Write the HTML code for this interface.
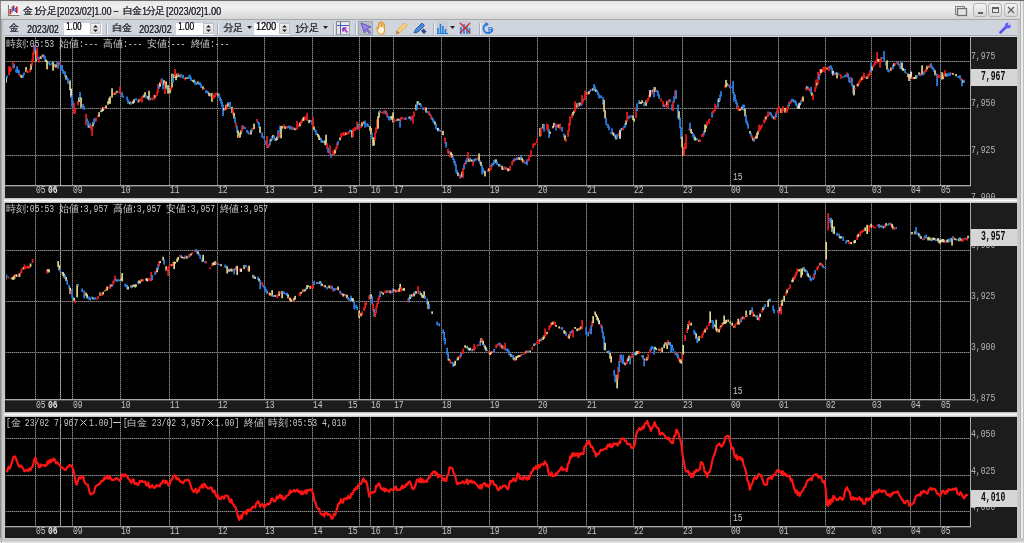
<!DOCTYPE html><html><head><meta charset="utf-8"><style>
*{margin:0;padding:0;box-sizing:border-box}
html,body{width:1024px;height:543px;overflow:hidden;background:#c8c8c8;font-family:"Liberation Sans",sans-serif}
div,span,svg{position:absolute}
.mo{font-family:"Liberation Mono",monospace;font-size:11.2px;line-height:11.2px;white-space:pre;transform:scaleX(0.7232);transform-origin:0 0}
.cj{font-family:"Liberation Sans",sans-serif;font-size:9.6px;line-height:9.6px;white-space:pre}
.ss{font-family:"Liberation Sans",sans-serif;line-height:1;white-space:pre;transform-origin:0 0;text-shadow:0.35px 0 0 currentColor}
.cs{font-family:"Liberation Sans",sans-serif;line-height:1;white-space:pre;text-shadow:0.3px 0 0 currentColor}

#frame{left:0;top:0;width:1024px;height:543px;background:#c8c8c8;border-top:1px solid #6c6c6c;border-left:1px solid #8c8c8c}
#title{left:1px;top:1px;width:1019px;height:19px;background:linear-gradient(#e6e6e6 0px,#f0f0f0 6px,#d6d6d6 18px);border-bottom:1px solid #a8a8a8}
#tb{left:4px;top:20px;width:1013px;height:17px;background:linear-gradient(#d0d5dd 15px,#a8b0bc 15px,#a8b0bc 16px,#d4d8e0 16px)}
.inp{height:13px;background:#fff;border-top:1px solid #c8ccd4}
.spin{top:1px;width:11px;height:11px;background:linear-gradient(#f0f0f0,#dcdcdc);border:1px solid #c0c0c0}
.sep{top:23px;width:1px;height:12px;background:#a8aeb8;box-shadow:1px 0 0 #f0f2f6}
.panel{left:5px;width:1012px;background:#1c1c1c}
.chart{left:1px;top:0;width:965px;background:#000;border-right:1px solid #a8a8a8;border-bottom:1px solid #a8a8a8}
.sepbar{left:4px;width:1013px;background:linear-gradient(#b8b8b8,#fafafa 50%,#b8b8b8)}
.cur{left:971px;width:46px;height:17px;background:#d6d6d6}
.wbtn{top:3px;width:14px;height:14px;border:1px solid #b4b4b4;border-radius:3px;background:linear-gradient(#f4f4f4,#d8d8d8)}
</style></head><body>
<div id="wrap" style="left:0;top:0;width:1024px;height:543px;filter:blur(0.4px)">
<div id="frame"></div>
<div style="left:1020px;top:1px;width:1px;height:542px;background:#b0b0b0"></div>
<div style="left:1021px;top:1px;width:2px;height:542px;background:#ececec"></div>
<div style="left:1023px;top:1px;width:1px;height:542px;background:#bcbcbc"></div>
<div style="left:0;top:538px;width:1024px;height:5px;background:linear-gradient(#c8c8c8,#c8c8c8 3px,#f0f0f0)"></div>
<div style="left:1px;top:20px;width:1px;height:523px;background:#a8a8a8"></div>
<div id="title"></div>
<div id="tb"></div>

<svg style="left:7px;top:4px" width="14" height="13" viewBox="0 0 14 13"><rect x="2" y="0.5" width="11" height="10.5" fill="#f2f2f2"/><path d="M1.5 1v10.5h11" fill="none" stroke="#7a7a7a" stroke-width="1.1"/><path d="M3.3 5v5.5M6.6 1.5v5.5M9.8 2.5v6.5" stroke="#e81818" stroke-width="1.7"/><path d="M5.2 2.5v6M8.5 4v4" stroke="#2a78e0" stroke-width="1.5"/></svg>
<div class="inp" style="left:64px;top:22px;width:38px"></div>
<div class="inp" style="left:176px;top:22px;width:38px"></div>
<div class="inp" style="left:254px;top:22px;width:36px"></div>
<div class="spin" style="left:90px;top:23px"></div>
<svg style="left:90px;top:23px" width="11" height="11" viewBox="0 0 11 11"><path d="M3 4.5L5.5 2L8 4.5Z M3 6.5L5.5 9L8 6.5Z" fill="#222"/></svg>
<div class="spin" style="left:203px;top:23px"></div>
<svg style="left:203px;top:23px" width="11" height="11" viewBox="0 0 11 11"><path d="M3 4.5L5.5 2L8 4.5Z M3 6.5L5.5 9L8 6.5Z" fill="#222"/></svg>
<div class="spin" style="left:279px;top:23px"></div>
<svg style="left:279px;top:23px" width="11" height="11" viewBox="0 0 11 11"><path d="M3 4.5L5.5 2L8 4.5Z M3 6.5L5.5 9L8 6.5Z" fill="#222"/></svg>
<svg style="left:247px;top:26px" width="6" height="4" viewBox="0 0 6 4"><path d="M0 0H5L2.5 3Z" fill="#222"/></svg>
<svg style="left:323px;top:26px" width="6" height="4" viewBox="0 0 6 4"><path d="M0 0H5L2.5 3Z" fill="#222"/></svg>
<svg style="left:450px;top:26px" width="6" height="4" viewBox="0 0 6 4"><path d="M0 0H5L2.5 3Z" fill="#222"/></svg>
<div class="sep" style="left:106px"></div>
<div class="sep" style="left:217px"></div>
<div class="sep" style="left:333px"></div>
<div class="sep" style="left:355px"></div>
<div class="sep" style="left:433px"></div>
<div class="sep" style="left:479px"></div>
<div style="left:336px;top:21px;width:14px;height:14px;background:#e6e6e6;border:1px solid #a0a4aa;border-top-color:#8a8e94;border-left-color:#8a8e94"></div>
<svg style="left:337px;top:22px" width="12" height="12" viewBox="0 0 12 12"><path d="M3.5 0v12M0 3.5h12" stroke="#4a58c8" stroke-width="1"/><path d="M10.5 10.5L6.5 6.5M6 6h3.5M6 6v3.5" stroke="#a030c0" stroke-width="1.7" fill="none"/></svg>
<div style="left:358px;top:21px;width:15px;height:14px;background:#b8bcc4;border:1px solid #a0a6ae"></div>
<svg style="left:360px;top:22px" width="12" height="12" viewBox="0 0 12 12"><path d="M1 1L11 5L7 6.5L10.5 10.5L9.5 11.5L6 7.5L4.5 11Z" fill="#9a88e8" stroke="#6048c0" stroke-width="0.9"/></svg>
<svg style="left:376px;top:21px" width="13" height="14" viewBox="0 0 13 14"><path d="M3 13C1 10 0.5 8 1 6.5L2.5 7.5V3C2.5 2 4 2 4 3V6V1.5C4 0.5 5.5 0.5 5.5 1.5V6V2C5.5 1 7 1 7 2V6.5V3.5C7 2.5 8.5 2.5 8.5 3.5V9C8.5 11 8 12 7.5 13Z" fill="#fff4dc" stroke="#e09a30" stroke-width="1.1"/></svg>
<svg style="left:395px;top:21px" width="13" height="14" viewBox="0 0 13 14"><path d="M1 13L2 9.5L9.5 2L12 4.5L4.5 12Z" fill="#f8d088" stroke="#e0a040" stroke-width="0.9"/><path d="M1 13L2 9.5L4.5 12Z" fill="#a08060"/></svg>
<svg style="left:413px;top:21px" width="14" height="14" viewBox="0 0 14 14"><path d="M1 12L2.5 8.5L9 2L11.5 4.5L5 11Z" fill="#4a8ae0" stroke="#2050a0" stroke-width="0.9"/><path d="M8 10L11 13L13.5 10.5L10.5 7.5Z" fill="#2a4a90"/></svg>
<div style="left:437px;top:21px;width:11px;height:14px;background:#c8ccd2"></div>
<svg style="left:437px;top:22px" width="11" height="12" viewBox="0 0 11 12"><path d="M1 12V6M3.5 12V2M6 12V4M8.5 12V7" stroke="#2080e0" stroke-width="1.6"/><path d="M0 11.5H11" stroke="#2080e0"/></svg>
<div style="left:459px;top:21px;width:12px;height:14px;background:#c8ccd2"></div>
<svg style="left:459px;top:22px" width="12" height="12" viewBox="0 0 12 12"><path d="M2 12V5M5 12V2M8 12V4M10.5 12V6" stroke="#2080e0" stroke-width="1.6"/><path d="M1 1L11 11M11 1L1 11" stroke="#e82020" stroke-width="1.3"/></svg>
<svg style="left:482px;top:21px" width="12" height="14" viewBox="0 0 12 14"><path d="M6 3A4.5 4.5 0 1 0 10.5 8" fill="none" stroke="#2a7ae0" stroke-width="2"/><path d="M3 1L7 3L4 5.5Z" fill="#2a7ae0"/><text x="6" y="11" font-size="7" font-family="Liberation Sans" font-weight="bold" fill="#2a7ae0">R</text></svg>
<svg style="left:999px;top:22px" width="13" height="12" viewBox="0 0 13 12"><path d="M1.5 10.5L7 5" stroke="#5a50f0" stroke-width="2.6" stroke-linecap="round"/><circle cx="9" cy="3.5" r="3" fill="#6a60f8"/><circle cx="10.5" cy="2" r="1.4" fill="#d3d7df"/></svg>
<svg style="left:954px;top:5px" width="14" height="12" viewBox="0 0 14 12"><rect x="1.5" y="1.5" width="9" height="8" fill="none" stroke="#808080"/><rect x="3.5" y="3.5" width="9" height="7" fill="#e4e4e4" stroke="#707070" stroke-width="1.3"/></svg>
<div class="wbtn" style="left:973px"><div style="left:4px;top:8px;width:5px;height:2px;background:#606060"></div></div>
<div class="wbtn" style="left:988px"><div style="left:3px;top:3px;width:7px;height:6px;border:1px solid #606060;border-top-width:2px"></div></div>
<div class="wbtn" style="left:1004px"><svg style="left:0;top:0" width="12" height="12" viewBox="0 0 12 12"><path d="M3 3L9 9M9 3L3 9" stroke="#606060" stroke-width="1.3"/></svg></div>
<div style="left:5px;top:37px;width:1012px;height:161px;background:#1c1c1c"></div>
<div style="left:6px;top:37px;width:964px;height:148px;background:#000"></div>
<div style="left:5px;top:185px;width:966px;height:1px;background:#a8a8a8"></div>
<div style="left:5px;top:186px;width:966px;height:1px;background:#4a4a4a"></div>
<div style="left:970px;top:37px;width:1px;height:149px;background:#a8a8a8"></div>
<div style="left:5px;top:203px;width:1012px;height:209px;background:#1c1c1c"></div>
<div style="left:6px;top:203px;width:964px;height:196px;background:#000"></div>
<div style="left:5px;top:399px;width:966px;height:1px;background:#a8a8a8"></div>
<div style="left:5px;top:400px;width:966px;height:1px;background:#4a4a4a"></div>
<div style="left:970px;top:203px;width:1px;height:197px;background:#a8a8a8"></div>
<div style="left:5px;top:417px;width:1012px;height:121px;background:#1c1c1c"></div>
<div style="left:6px;top:417px;width:964px;height:109px;background:#000"></div>
<div style="left:5px;top:526px;width:966px;height:1px;background:#a8a8a8"></div>
<div style="left:5px;top:527px;width:966px;height:1px;background:#4a4a4a"></div>
<div style="left:970px;top:417px;width:1px;height:110px;background:#a8a8a8"></div>
<div class="sepbar" style="top:198px;height:5px"></div>
<div class="sepbar" style="top:412px;height:5px"></div>
<svg style="left:0;top:0" width="1024" height="543"><defs><clipPath id="k1"><rect x="6" y="37" width="964" height="148"/></clipPath><clipPath id="k2"><rect x="6" y="203" width="964" height="196"/></clipPath><clipPath id="k3"><rect x="6" y="417" width="964" height="109"/></clipPath></defs>
<g clip-path="url(#k1)"><line x1="35.5" y1="0" x2="35.5" y2="543" stroke="#444444"/>
<line x1="35.5" y1="0" x2="35.5" y2="543" stroke="#8a8a8a" stroke-dasharray="1,1"/>
<line x1="60.5" y1="0" x2="60.5" y2="543" stroke="#707070"/>
<line x1="60.5" y1="0" x2="60.5" y2="543" stroke="#b4b4b4" stroke-dasharray="1,1"/>
<line x1="72.5" y1="0" x2="72.5" y2="543" stroke="#444444"/>
<line x1="72.5" y1="0" x2="72.5" y2="543" stroke="#8a8a8a" stroke-dasharray="1,1"/>
<line x1="120.5" y1="0" x2="120.5" y2="543" stroke="#444444"/>
<line x1="120.5" y1="0" x2="120.5" y2="543" stroke="#8a8a8a" stroke-dasharray="1,1"/>
<line x1="169.5" y1="0" x2="169.5" y2="543" stroke="#444444"/>
<line x1="169.5" y1="0" x2="169.5" y2="543" stroke="#8a8a8a" stroke-dasharray="1,1"/>
<line x1="217.5" y1="0" x2="217.5" y2="543" stroke="#444444"/>
<line x1="217.5" y1="0" x2="217.5" y2="543" stroke="#8a8a8a" stroke-dasharray="1,1"/>
<line x1="264.5" y1="0" x2="264.5" y2="543" stroke="#444444"/>
<line x1="264.5" y1="0" x2="264.5" y2="543" stroke="#8a8a8a" stroke-dasharray="1,1"/>
<line x1="312.5" y1="0" x2="312.5" y2="543" stroke="#444444"/>
<line x1="312.5" y1="0" x2="312.5" y2="543" stroke="#8a8a8a" stroke-dasharray="1,1"/>
<line x1="359.5" y1="0" x2="359.5" y2="543" stroke="#444444"/>
<line x1="359.5" y1="0" x2="359.5" y2="543" stroke="#8a8a8a" stroke-dasharray="1,1"/>
<line x1="370.5" y1="0" x2="370.5" y2="543" stroke="#444444"/>
<line x1="370.5" y1="0" x2="370.5" y2="543" stroke="#8a8a8a" stroke-dasharray="1,1"/>
<line x1="393.5" y1="0" x2="393.5" y2="543" stroke="#444444"/>
<line x1="393.5" y1="0" x2="393.5" y2="543" stroke="#8a8a8a" stroke-dasharray="1,1"/>
<line x1="441.5" y1="0" x2="441.5" y2="543" stroke="#444444"/>
<line x1="441.5" y1="0" x2="441.5" y2="543" stroke="#8a8a8a" stroke-dasharray="1,1"/>
<line x1="489.5" y1="0" x2="489.5" y2="543" stroke="#444444"/>
<line x1="489.5" y1="0" x2="489.5" y2="543" stroke="#8a8a8a" stroke-dasharray="1,1"/>
<line x1="537.5" y1="0" x2="537.5" y2="543" stroke="#444444"/>
<line x1="537.5" y1="0" x2="537.5" y2="543" stroke="#8a8a8a" stroke-dasharray="1,1"/>
<line x1="586.5" y1="0" x2="586.5" y2="543" stroke="#444444"/>
<line x1="586.5" y1="0" x2="586.5" y2="543" stroke="#8a8a8a" stroke-dasharray="1,1"/>
<line x1="633.5" y1="0" x2="633.5" y2="543" stroke="#444444"/>
<line x1="633.5" y1="0" x2="633.5" y2="543" stroke="#8a8a8a" stroke-dasharray="1,1"/>
<line x1="682.5" y1="0" x2="682.5" y2="543" stroke="#444444"/>
<line x1="682.5" y1="0" x2="682.5" y2="543" stroke="#8a8a8a" stroke-dasharray="1,1"/>
<line x1="730.5" y1="0" x2="730.5" y2="543" stroke="#444444"/>
<line x1="730.5" y1="0" x2="730.5" y2="543" stroke="#8a8a8a" stroke-dasharray="1,1"/>
<line x1="778.5" y1="0" x2="778.5" y2="543" stroke="#444444"/>
<line x1="778.5" y1="0" x2="778.5" y2="543" stroke="#8a8a8a" stroke-dasharray="1,1"/>
<line x1="825.5" y1="0" x2="825.5" y2="543" stroke="#444444"/>
<line x1="825.5" y1="0" x2="825.5" y2="543" stroke="#8a8a8a" stroke-dasharray="1,1"/>
<line x1="871.5" y1="0" x2="871.5" y2="543" stroke="#444444"/>
<line x1="871.5" y1="0" x2="871.5" y2="543" stroke="#8a8a8a" stroke-dasharray="1,1"/>
<line x1="910.5" y1="0" x2="910.5" y2="543" stroke="#444444"/>
<line x1="910.5" y1="0" x2="910.5" y2="543" stroke="#8a8a8a" stroke-dasharray="1,1"/>
<line x1="940.5" y1="0" x2="940.5" y2="543" stroke="#444444"/>
<line x1="940.5" y1="0" x2="940.5" y2="543" stroke="#8a8a8a" stroke-dasharray="1,1"/>
<line x1="6" y1="61.5" x2="970" y2="61.5" stroke="#444444"/>
<line x1="6" y1="61.5" x2="970" y2="61.5" stroke="#8a8a8a" stroke-dasharray="1,1"/>
<line x1="6" y1="108.5" x2="970" y2="108.5" stroke="#444444"/>
<line x1="6" y1="108.5" x2="970" y2="108.5" stroke="#8a8a8a" stroke-dasharray="1,1"/>
<line x1="6" y1="155.5" x2="970" y2="155.5" stroke="#444444"/>
<line x1="6" y1="155.5" x2="970" y2="155.5" stroke="#8a8a8a" stroke-dasharray="1,1"/></g>
<g clip-path="url(#k2)"><line x1="35.5" y1="0" x2="35.5" y2="543" stroke="#444444"/>
<line x1="35.5" y1="0" x2="35.5" y2="543" stroke="#8a8a8a" stroke-dasharray="1,1"/>
<line x1="60.5" y1="0" x2="60.5" y2="543" stroke="#707070"/>
<line x1="60.5" y1="0" x2="60.5" y2="543" stroke="#b4b4b4" stroke-dasharray="1,1"/>
<line x1="72.5" y1="0" x2="72.5" y2="543" stroke="#444444"/>
<line x1="72.5" y1="0" x2="72.5" y2="543" stroke="#8a8a8a" stroke-dasharray="1,1"/>
<line x1="120.5" y1="0" x2="120.5" y2="543" stroke="#444444"/>
<line x1="120.5" y1="0" x2="120.5" y2="543" stroke="#8a8a8a" stroke-dasharray="1,1"/>
<line x1="169.5" y1="0" x2="169.5" y2="543" stroke="#444444"/>
<line x1="169.5" y1="0" x2="169.5" y2="543" stroke="#8a8a8a" stroke-dasharray="1,1"/>
<line x1="217.5" y1="0" x2="217.5" y2="543" stroke="#444444"/>
<line x1="217.5" y1="0" x2="217.5" y2="543" stroke="#8a8a8a" stroke-dasharray="1,1"/>
<line x1="264.5" y1="0" x2="264.5" y2="543" stroke="#444444"/>
<line x1="264.5" y1="0" x2="264.5" y2="543" stroke="#8a8a8a" stroke-dasharray="1,1"/>
<line x1="312.5" y1="0" x2="312.5" y2="543" stroke="#444444"/>
<line x1="312.5" y1="0" x2="312.5" y2="543" stroke="#8a8a8a" stroke-dasharray="1,1"/>
<line x1="359.5" y1="0" x2="359.5" y2="543" stroke="#444444"/>
<line x1="359.5" y1="0" x2="359.5" y2="543" stroke="#8a8a8a" stroke-dasharray="1,1"/>
<line x1="370.5" y1="0" x2="370.5" y2="543" stroke="#444444"/>
<line x1="370.5" y1="0" x2="370.5" y2="543" stroke="#8a8a8a" stroke-dasharray="1,1"/>
<line x1="393.5" y1="0" x2="393.5" y2="543" stroke="#444444"/>
<line x1="393.5" y1="0" x2="393.5" y2="543" stroke="#8a8a8a" stroke-dasharray="1,1"/>
<line x1="441.5" y1="0" x2="441.5" y2="543" stroke="#444444"/>
<line x1="441.5" y1="0" x2="441.5" y2="543" stroke="#8a8a8a" stroke-dasharray="1,1"/>
<line x1="489.5" y1="0" x2="489.5" y2="543" stroke="#444444"/>
<line x1="489.5" y1="0" x2="489.5" y2="543" stroke="#8a8a8a" stroke-dasharray="1,1"/>
<line x1="537.5" y1="0" x2="537.5" y2="543" stroke="#444444"/>
<line x1="537.5" y1="0" x2="537.5" y2="543" stroke="#8a8a8a" stroke-dasharray="1,1"/>
<line x1="586.5" y1="0" x2="586.5" y2="543" stroke="#444444"/>
<line x1="586.5" y1="0" x2="586.5" y2="543" stroke="#8a8a8a" stroke-dasharray="1,1"/>
<line x1="633.5" y1="0" x2="633.5" y2="543" stroke="#444444"/>
<line x1="633.5" y1="0" x2="633.5" y2="543" stroke="#8a8a8a" stroke-dasharray="1,1"/>
<line x1="682.5" y1="0" x2="682.5" y2="543" stroke="#444444"/>
<line x1="682.5" y1="0" x2="682.5" y2="543" stroke="#8a8a8a" stroke-dasharray="1,1"/>
<line x1="730.5" y1="0" x2="730.5" y2="543" stroke="#444444"/>
<line x1="730.5" y1="0" x2="730.5" y2="543" stroke="#8a8a8a" stroke-dasharray="1,1"/>
<line x1="778.5" y1="0" x2="778.5" y2="543" stroke="#444444"/>
<line x1="778.5" y1="0" x2="778.5" y2="543" stroke="#8a8a8a" stroke-dasharray="1,1"/>
<line x1="825.5" y1="0" x2="825.5" y2="543" stroke="#444444"/>
<line x1="825.5" y1="0" x2="825.5" y2="543" stroke="#8a8a8a" stroke-dasharray="1,1"/>
<line x1="871.5" y1="0" x2="871.5" y2="543" stroke="#444444"/>
<line x1="871.5" y1="0" x2="871.5" y2="543" stroke="#8a8a8a" stroke-dasharray="1,1"/>
<line x1="910.5" y1="0" x2="910.5" y2="543" stroke="#444444"/>
<line x1="910.5" y1="0" x2="910.5" y2="543" stroke="#8a8a8a" stroke-dasharray="1,1"/>
<line x1="940.5" y1="0" x2="940.5" y2="543" stroke="#444444"/>
<line x1="940.5" y1="0" x2="940.5" y2="543" stroke="#8a8a8a" stroke-dasharray="1,1"/>
<line x1="6" y1="250.5" x2="970" y2="250.5" stroke="#444444"/>
<line x1="6" y1="250.5" x2="970" y2="250.5" stroke="#8a8a8a" stroke-dasharray="1,1"/>
<line x1="6" y1="301.5" x2="970" y2="301.5" stroke="#444444"/>
<line x1="6" y1="301.5" x2="970" y2="301.5" stroke="#8a8a8a" stroke-dasharray="1,1"/>
<line x1="6" y1="352.5" x2="970" y2="352.5" stroke="#444444"/>
<line x1="6" y1="352.5" x2="970" y2="352.5" stroke="#8a8a8a" stroke-dasharray="1,1"/></g>
<g clip-path="url(#k3)"><line x1="35.5" y1="0" x2="35.5" y2="543" stroke="#444444"/>
<line x1="35.5" y1="0" x2="35.5" y2="543" stroke="#8a8a8a" stroke-dasharray="1,1"/>
<line x1="60.5" y1="0" x2="60.5" y2="543" stroke="#707070"/>
<line x1="60.5" y1="0" x2="60.5" y2="543" stroke="#b4b4b4" stroke-dasharray="1,1"/>
<line x1="72.5" y1="0" x2="72.5" y2="543" stroke="#444444"/>
<line x1="72.5" y1="0" x2="72.5" y2="543" stroke="#8a8a8a" stroke-dasharray="1,1"/>
<line x1="120.5" y1="0" x2="120.5" y2="543" stroke="#444444"/>
<line x1="120.5" y1="0" x2="120.5" y2="543" stroke="#8a8a8a" stroke-dasharray="1,1"/>
<line x1="169.5" y1="0" x2="169.5" y2="543" stroke="#444444"/>
<line x1="169.5" y1="0" x2="169.5" y2="543" stroke="#8a8a8a" stroke-dasharray="1,1"/>
<line x1="217.5" y1="0" x2="217.5" y2="543" stroke="#444444"/>
<line x1="217.5" y1="0" x2="217.5" y2="543" stroke="#8a8a8a" stroke-dasharray="1,1"/>
<line x1="264.5" y1="0" x2="264.5" y2="543" stroke="#444444"/>
<line x1="264.5" y1="0" x2="264.5" y2="543" stroke="#8a8a8a" stroke-dasharray="1,1"/>
<line x1="312.5" y1="0" x2="312.5" y2="543" stroke="#444444"/>
<line x1="312.5" y1="0" x2="312.5" y2="543" stroke="#8a8a8a" stroke-dasharray="1,1"/>
<line x1="359.5" y1="0" x2="359.5" y2="543" stroke="#444444"/>
<line x1="359.5" y1="0" x2="359.5" y2="543" stroke="#8a8a8a" stroke-dasharray="1,1"/>
<line x1="370.5" y1="0" x2="370.5" y2="543" stroke="#444444"/>
<line x1="370.5" y1="0" x2="370.5" y2="543" stroke="#8a8a8a" stroke-dasharray="1,1"/>
<line x1="393.5" y1="0" x2="393.5" y2="543" stroke="#444444"/>
<line x1="393.5" y1="0" x2="393.5" y2="543" stroke="#8a8a8a" stroke-dasharray="1,1"/>
<line x1="441.5" y1="0" x2="441.5" y2="543" stroke="#444444"/>
<line x1="441.5" y1="0" x2="441.5" y2="543" stroke="#8a8a8a" stroke-dasharray="1,1"/>
<line x1="489.5" y1="0" x2="489.5" y2="543" stroke="#444444"/>
<line x1="489.5" y1="0" x2="489.5" y2="543" stroke="#8a8a8a" stroke-dasharray="1,1"/>
<line x1="537.5" y1="0" x2="537.5" y2="543" stroke="#444444"/>
<line x1="537.5" y1="0" x2="537.5" y2="543" stroke="#8a8a8a" stroke-dasharray="1,1"/>
<line x1="586.5" y1="0" x2="586.5" y2="543" stroke="#444444"/>
<line x1="586.5" y1="0" x2="586.5" y2="543" stroke="#8a8a8a" stroke-dasharray="1,1"/>
<line x1="633.5" y1="0" x2="633.5" y2="543" stroke="#444444"/>
<line x1="633.5" y1="0" x2="633.5" y2="543" stroke="#8a8a8a" stroke-dasharray="1,1"/>
<line x1="682.5" y1="0" x2="682.5" y2="543" stroke="#444444"/>
<line x1="682.5" y1="0" x2="682.5" y2="543" stroke="#8a8a8a" stroke-dasharray="1,1"/>
<line x1="730.5" y1="0" x2="730.5" y2="543" stroke="#444444"/>
<line x1="730.5" y1="0" x2="730.5" y2="543" stroke="#8a8a8a" stroke-dasharray="1,1"/>
<line x1="778.5" y1="0" x2="778.5" y2="543" stroke="#444444"/>
<line x1="778.5" y1="0" x2="778.5" y2="543" stroke="#8a8a8a" stroke-dasharray="1,1"/>
<line x1="825.5" y1="0" x2="825.5" y2="543" stroke="#444444"/>
<line x1="825.5" y1="0" x2="825.5" y2="543" stroke="#8a8a8a" stroke-dasharray="1,1"/>
<line x1="871.5" y1="0" x2="871.5" y2="543" stroke="#444444"/>
<line x1="871.5" y1="0" x2="871.5" y2="543" stroke="#8a8a8a" stroke-dasharray="1,1"/>
<line x1="910.5" y1="0" x2="910.5" y2="543" stroke="#444444"/>
<line x1="910.5" y1="0" x2="910.5" y2="543" stroke="#8a8a8a" stroke-dasharray="1,1"/>
<line x1="940.5" y1="0" x2="940.5" y2="543" stroke="#444444"/>
<line x1="940.5" y1="0" x2="940.5" y2="543" stroke="#8a8a8a" stroke-dasharray="1,1"/>
<line x1="6" y1="438.5" x2="970" y2="438.5" stroke="#444444"/>
<line x1="6" y1="438.5" x2="970" y2="438.5" stroke="#8a8a8a" stroke-dasharray="1,1"/>
<line x1="6" y1="475.5" x2="970" y2="475.5" stroke="#444444"/>
<line x1="6" y1="475.5" x2="970" y2="475.5" stroke="#8a8a8a" stroke-dasharray="1,1"/>
<line x1="6" y1="511.5" x2="970" y2="511.5" stroke="#444444"/>
<line x1="6" y1="511.5" x2="970" y2="511.5" stroke="#8a8a8a" stroke-dasharray="1,1"/></g>
<g clip-path="url(#k1)" stroke-width="2" stroke-linecap="round"><rect x="5.2" y="77.4" width="1.7" height="5.3" fill="#e2d488"/>
<rect x="6.2" y="75.6" width="1.7" height="2.6" fill="#2a82e8"/>
<rect x="8.2" y="66.3" width="1.7" height="9.0" fill="#f01c1c"/>
<rect x="9.2" y="66.5" width="1.7" height="5.5" fill="#f01c1c"/>
<rect x="10.2" y="68.1" width="1.7" height="2.7" fill="#f01c1c"/>
<rect x="12.2" y="61.5" width="1.7" height="6.8" fill="#f01c1c"/>
<rect x="13.2" y="63.9" width="1.7" height="4.5" fill="#2a82e8"/>
<rect x="15.2" y="69.4" width="1.7" height="3.0" fill="#2a82e8"/>
<rect x="16.2" y="66.4" width="1.7" height="6.5" fill="#2a82e8"/>
<rect x="17.2" y="69.3" width="1.7" height="3.7" fill="#2a82e8"/>
<rect x="18.2" y="70.2" width="1.7" height="4.7" fill="#2a82e8"/>
<rect x="19.2" y="74.0" width="1.7" height="2.3" fill="#f01c1c"/>
<rect x="20.2" y="75.2" width="1.7" height="2.2" fill="#e2d488"/>
<rect x="21.2" y="75.1" width="1.7" height="2.9" fill="#e2d488"/>
<rect x="22.2" y="74.4" width="1.7" height="3.3" fill="#2a82e8"/>
<rect x="23.2" y="72.5" width="1.7" height="2.6" fill="#2a82e8"/>
<rect x="25.2" y="67.0" width="1.7" height="5.2" fill="#e2d488"/>
<rect x="26.2" y="70.3" width="1.7" height="2.3" fill="#f01c1c"/>
<rect x="27.2" y="71.1" width="1.7" height="1.8" fill="#f01c1c"/>
<rect x="29.2" y="68.0" width="1.7" height="4.3" fill="#f01c1c"/>
<rect x="30.2" y="63.9" width="1.7" height="5.9" fill="#e2d488"/>
<rect x="31.2" y="59.2" width="1.7" height="6.4" fill="#f01c1c"/>
<rect x="32.2" y="52.4" width="1.7" height="9.7" fill="#f01c1c"/>
<rect x="33.2" y="45.0" width="1.7" height="9.7" fill="#f01c1c"/>
<rect x="34.2" y="45.5" width="1.7" height="6.7" fill="#2a82e8"/>
<rect x="35.2" y="50.5" width="1.7" height="11.1" fill="#e2d488"/>
<rect x="36.2" y="47.7" width="1.7" height="11.9" fill="#f01c1c"/>
<rect x="37.2" y="56.7" width="1.7" height="3.2" fill="#2a82e8"/>
<rect x="38.2" y="57.5" width="1.7" height="5.2" fill="#f01c1c"/>
<rect x="39.2" y="56.3" width="1.7" height="2.8" fill="#2a82e8"/>
<rect x="40.2" y="56.2" width="1.7" height="2.7" fill="#e2d488"/>
<rect x="41.2" y="55.1" width="1.7" height="2.2" fill="#f01c1c"/>
<rect x="42.2" y="54.5" width="1.7" height="2.3" fill="#e2d488"/>
<rect x="43.2" y="54.9" width="1.7" height="3.4" fill="#2a82e8"/>
<rect x="44.2" y="56.3" width="1.7" height="5.1" fill="#2a82e8"/>
<rect x="45.2" y="59.7" width="1.7" height="2.5" fill="#e2d488"/>
<rect x="46.2" y="60.6" width="1.7" height="8.8" fill="#e2d488"/>
<rect x="48.2" y="61.5" width="1.7" height="2.9" fill="#2a82e8"/>
<rect x="49.2" y="63.4" width="1.7" height="2.1" fill="#2a82e8"/>
<rect x="51.2" y="62.6" width="1.7" height="2.2" fill="#2a82e8"/>
<rect x="52.2" y="61.9" width="1.7" height="8.8" fill="#e2d488"/>
<rect x="53.2" y="64.5" width="1.7" height="1.8" fill="#e2d488"/>
<rect x="54.2" y="65.8" width="1.7" height="2.0" fill="#f01c1c"/>
<rect x="55.2" y="64.1" width="1.7" height="3.3" fill="#e2d488"/>
<rect x="56.2" y="62.4" width="1.7" height="2.7" fill="#2a82e8"/>
<rect x="57.2" y="62.8" width="1.7" height="6.0" fill="#2a82e8"/>
<rect x="58.2" y="61.9" width="1.7" height="2.3" fill="#2a82e8"/>
<rect x="59.2" y="61.7" width="1.7" height="4.3" fill="#f01c1c"/>
<rect x="60.2" y="65.1" width="1.7" height="4.5" fill="#2a82e8"/>
<rect x="61.2" y="64.9" width="1.7" height="5.7" fill="#2a82e8"/>
<rect x="62.2" y="69.5" width="1.7" height="4.0" fill="#2a82e8"/>
<rect x="63.2" y="71.4" width="1.7" height="2.5" fill="#2a82e8"/>
<rect x="64.2" y="71.3" width="1.7" height="5.5" fill="#2a82e8"/>
<rect x="65.2" y="75.3" width="1.7" height="4.3" fill="#e2d488"/>
<rect x="66.2" y="76.9" width="1.7" height="2.9" fill="#2a82e8"/>
<rect x="67.2" y="78.4" width="1.7" height="5.5" fill="#2a82e8"/>
<rect x="69.2" y="80.5" width="1.7" height="9.7" fill="#e2d488"/>
<rect x="70.2" y="88.7" width="1.7" height="8.6" fill="#f0f0f0"/>
<rect x="71.2" y="95.4" width="1.7" height="11.3" fill="#2a82e8"/>
<rect x="72.2" y="101.2" width="1.7" height="7.7" fill="#2a82e8"/>
<rect x="73.2" y="103.1" width="1.7" height="11.0" fill="#f01c1c"/>
<rect x="74.2" y="107.9" width="1.7" height="5.7" fill="#f01c1c"/>
<rect x="77.2" y="101.0" width="1.7" height="4.3" fill="#f01c1c"/>
<rect x="78.2" y="97.3" width="1.7" height="4.7" fill="#e2d488"/>
<rect x="79.2" y="92.2" width="1.7" height="7.4" fill="#2a82e8"/>
<rect x="80.2" y="97.4" width="1.7" height="10.3" fill="#e2d488"/>
<rect x="82.2" y="103.9" width="1.7" height="4.2" fill="#2a82e8"/>
<rect x="83.2" y="105.9" width="1.7" height="3.9" fill="#2a82e8"/>
<rect x="85.2" y="113.9" width="1.7" height="11.3" fill="#f01c1c"/>
<rect x="86.2" y="118.4" width="1.7" height="3.1" fill="#2a82e8"/>
<rect x="87.2" y="120.6" width="1.7" height="6.8" fill="#2a82e8"/>
<rect x="88.2" y="125.5" width="1.7" height="2.2" fill="#e2d488"/>
<rect x="89.2" y="123.1" width="1.7" height="4.5" fill="#2a82e8"/>
<rect x="90.2" y="125.9" width="1.7" height="4.2" fill="#f01c1c"/>
<rect x="91.2" y="124.9" width="1.7" height="11.0" fill="#f01c1c"/>
<rect x="92.2" y="122.2" width="1.7" height="4.1" fill="#e2d488"/>
<rect x="93.2" y="118.5" width="1.7" height="5.7" fill="#2a82e8"/>
<rect x="94.2" y="118.4" width="1.7" height="3.1" fill="#2a82e8"/>
<rect x="95.2" y="117.5" width="1.7" height="4.1" fill="#f01c1c"/>
<rect x="97.2" y="115.3" width="1.7" height="2.1" fill="#f01c1c"/>
<rect x="98.2" y="112.2" width="1.7" height="4.6" fill="#e2d488"/>
<rect x="100.2" y="110.4" width="1.7" height="1.7" fill="#e2d488"/>
<rect x="101.2" y="109.2" width="1.7" height="2.5" fill="#e2d488"/>
<rect x="102.2" y="107.1" width="1.7" height="3.9" fill="#f0f0f0"/>
<rect x="103.2" y="107.0" width="1.7" height="2.3" fill="#f01c1c"/>
<rect x="104.2" y="106.8" width="1.7" height="2.5" fill="#f01c1c"/>
<rect x="105.2" y="105.4" width="1.7" height="2.9" fill="#e2d488"/>
<rect x="107.2" y="101.3" width="1.7" height="3.4" fill="#e2d488"/>
<rect x="108.2" y="98.2" width="1.7" height="5.2" fill="#e2d488"/>
<rect x="109.2" y="96.5" width="1.7" height="7.3" fill="#e2d488"/>
<rect x="111.2" y="88.3" width="1.7" height="9.3" fill="#e2d488"/>
<rect x="113.2" y="92.8" width="1.7" height="2.2" fill="#f01c1c"/>
<rect x="114.2" y="92.7" width="1.7" height="1.9" fill="#e2d488"/>
<rect x="115.2" y="91.4" width="1.7" height="2.9" fill="#f01c1c"/>
<rect x="116.2" y="90.8" width="1.7" height="1.9" fill="#e2d488"/>
<rect x="117.2" y="91.6" width="1.7" height="1.3" fill="#2a82e8"/>
<rect x="119.2" y="86.7" width="1.7" height="7.0" fill="#f01c1c"/>
<rect x="120.2" y="91.7" width="1.7" height="2.5" fill="#f01c1c"/>
<rect x="121.2" y="92.2" width="1.7" height="4.7" fill="#2a82e8"/>
<rect x="122.2" y="95.5" width="1.7" height="2.4" fill="#2a82e8"/>
<rect x="126.2" y="96.6" width="1.7" height="3.8" fill="#2a82e8"/>
<rect x="127.2" y="99.4" width="1.7" height="4.2" fill="#2a82e8"/>
<rect x="128.2" y="101.5" width="1.7" height="2.0" fill="#2a82e8"/>
<rect x="129.2" y="101.6" width="1.7" height="2.7" fill="#e2d488"/>
<rect x="130.2" y="101.7" width="1.7" height="2.9" fill="#2a82e8"/>
<rect x="131.2" y="101.8" width="1.7" height="1.3" fill="#f01c1c"/>
<rect x="132.2" y="100.9" width="1.7" height="2.9" fill="#e2d488"/>
<rect x="133.2" y="99.2" width="1.7" height="3.8" fill="#e2d488"/>
<rect x="135.2" y="98.0" width="1.7" height="2.5" fill="#2a82e8"/>
<rect x="137.2" y="100.2" width="1.7" height="2.7" fill="#2a82e8"/>
<rect x="138.2" y="99.2" width="1.7" height="2.4" fill="#e2d488"/>
<rect x="139.2" y="98.4" width="1.7" height="3.4" fill="#f01c1c"/>
<rect x="141.2" y="95.7" width="1.7" height="6.8" fill="#f01c1c"/>
<rect x="142.2" y="95.9" width="1.7" height="1.8" fill="#f01c1c"/>
<rect x="143.2" y="94.6" width="1.7" height="2.9" fill="#e2d488"/>
<rect x="144.2" y="92.2" width="1.7" height="3.8" fill="#e2d488"/>
<rect x="145.2" y="95.2" width="1.7" height="3.1" fill="#2a82e8"/>
<rect x="147.2" y="96.0" width="1.7" height="3.2" fill="#e2d488"/>
<rect x="148.2" y="90.8" width="1.7" height="9.4" fill="#e2d488"/>
<rect x="149.2" y="97.4" width="1.7" height="2.9" fill="#2a82e8"/>
<rect x="151.2" y="97.5" width="1.7" height="2.7" fill="#f01c1c"/>
<rect x="153.2" y="95.0" width="1.7" height="5.2" fill="#f01c1c"/>
<rect x="154.2" y="95.0" width="1.7" height="2.8" fill="#e2d488"/>
<rect x="155.2" y="94.9" width="1.7" height="1.8" fill="#f01c1c"/>
<rect x="156.2" y="91.5" width="1.7" height="4.3" fill="#f01c1c"/>
<rect x="157.2" y="84.0" width="1.7" height="8.8" fill="#f01c1c"/>
<rect x="158.2" y="85.4" width="1.7" height="3.4" fill="#2a82e8"/>
<rect x="159.2" y="82.4" width="1.7" height="4.2" fill="#f0f0f0"/>
<rect x="160.2" y="79.3" width="1.7" height="4.6" fill="#f01c1c"/>
<rect x="161.2" y="78.4" width="1.7" height="2.5" fill="#2a82e8"/>
<rect x="162.2" y="80.1" width="1.7" height="9.2" fill="#2a82e8"/>
<rect x="163.2" y="80.3" width="1.7" height="4.6" fill="#e2d488"/>
<rect x="164.2" y="82.5" width="1.7" height="11.7" fill="#f01c1c"/>
<rect x="165.2" y="81.3" width="1.7" height="7.3" fill="#e2d488"/>
<rect x="166.2" y="87.2" width="1.7" height="2.4" fill="#2a82e8"/>
<rect x="167.2" y="85.1" width="1.7" height="8.6" fill="#e2d488"/>
<rect x="169.2" y="88.1" width="1.7" height="5.0" fill="#e2d488"/>
<rect x="170.2" y="86.3" width="1.7" height="4.0" fill="#f01c1c"/>
<rect x="171.2" y="73.6" width="1.7" height="13.8" fill="#e2d488"/>
<rect x="172.2" y="75.5" width="1.7" height="7.1" fill="#2a82e8"/>
<rect x="173.2" y="74.3" width="1.7" height="3.6" fill="#e2d488"/>
<rect x="174.2" y="69.0" width="1.7" height="8.2" fill="#f01c1c"/>
<rect x="175.2" y="75.7" width="1.7" height="4.5" fill="#e2d488"/>
<rect x="176.2" y="73.6" width="1.7" height="3.8" fill="#e2d488"/>
<rect x="177.2" y="73.2" width="1.7" height="2.7" fill="#f01c1c"/>
<rect x="178.2" y="74.7" width="1.7" height="2.3" fill="#e2d488"/>
<rect x="179.2" y="74.2" width="1.7" height="3.5" fill="#2a82e8"/>
<rect x="180.2" y="74.2" width="1.7" height="3.0" fill="#2a82e8"/>
<rect x="181.2" y="75.3" width="1.7" height="2.2" fill="#f01c1c"/>
<rect x="182.2" y="74.7" width="1.7" height="3.9" fill="#2a82e8"/>
<rect x="184.2" y="77.6" width="1.7" height="2.8" fill="#f01c1c"/>
<rect x="185.2" y="77.2" width="1.7" height="1.8" fill="#e2d488"/>
<rect x="186.2" y="77.5" width="1.7" height="1.5" fill="#2a82e8"/>
<rect x="187.2" y="77.4" width="1.7" height="1.1" fill="#e2d488"/>
<rect x="188.2" y="75.4" width="1.7" height="3.4" fill="#2a82e8"/>
<rect x="189.2" y="74.7" width="1.7" height="4.2" fill="#2a82e8"/>
<rect x="190.2" y="77.4" width="1.7" height="3.6" fill="#2a82e8"/>
<rect x="191.2" y="80.0" width="1.7" height="1.0" fill="#2a82e8"/>
<rect x="192.2" y="79.9" width="1.7" height="2.0" fill="#e2d488"/>
<rect x="193.2" y="79.7" width="1.7" height="3.1" fill="#e2d488"/>
<rect x="194.2" y="80.7" width="1.7" height="4.0" fill="#2a82e8"/>
<rect x="195.2" y="82.0" width="1.7" height="2.9" fill="#2a82e8"/>
<rect x="197.2" y="81.4" width="1.7" height="2.9" fill="#e2d488"/>
<rect x="198.2" y="82.1" width="1.7" height="2.7" fill="#2a82e8"/>
<rect x="199.2" y="82.4" width="1.7" height="2.9" fill="#2a82e8"/>
<rect x="200.2" y="83.9" width="1.7" height="3.9" fill="#2a82e8"/>
<rect x="201.2" y="86.5" width="1.7" height="1.1" fill="#2a82e8"/>
<rect x="202.2" y="86.3" width="1.7" height="3.3" fill="#e2d488"/>
<rect x="203.2" y="87.8" width="1.7" height="2.0" fill="#f01c1c"/>
<rect x="205.2" y="90.1" width="1.7" height="3.1" fill="#2a82e8"/>
<rect x="206.2" y="90.6" width="1.7" height="2.0" fill="#2a82e8"/>
<rect x="207.2" y="91.5" width="1.7" height="2.2" fill="#2a82e8"/>
<rect x="208.2" y="92.7" width="1.7" height="3.2" fill="#e2d488"/>
<rect x="209.2" y="93.3" width="1.7" height="3.1" fill="#e2d488"/>
<rect x="210.2" y="94.1" width="1.7" height="1.9" fill="#2a82e8"/>
<rect x="211.2" y="93.1" width="1.7" height="8.7" fill="#e2d488"/>
<rect x="212.2" y="94.2" width="1.7" height="4.8" fill="#f01c1c"/>
<rect x="213.2" y="95.7" width="1.7" height="2.7" fill="#f01c1c"/>
<rect x="214.2" y="93.7" width="1.7" height="3.5" fill="#f01c1c"/>
<rect x="215.2" y="92.6" width="1.7" height="2.1" fill="#f01c1c"/>
<rect x="216.2" y="93.2" width="1.7" height="1.8" fill="#f01c1c"/>
<rect x="217.2" y="93.3" width="1.7" height="2.7" fill="#e2d488"/>
<rect x="218.2" y="93.6" width="1.7" height="4.4" fill="#2a82e8"/>
<rect x="219.2" y="96.9" width="1.7" height="4.0" fill="#2a82e8"/>
<rect x="220.2" y="98.7" width="1.7" height="4.9" fill="#2a82e8"/>
<rect x="221.2" y="101.5" width="1.7" height="5.2" fill="#2a82e8"/>
<rect x="222.2" y="104.6" width="1.7" height="11.6" fill="#2a82e8"/>
<rect x="223.2" y="108.1" width="1.7" height="2.4" fill="#f0f0f0"/>
<rect x="224.2" y="107.4" width="1.7" height="2.8" fill="#f01c1c"/>
<rect x="225.2" y="104.7" width="1.7" height="4.9" fill="#e2d488"/>
<rect x="226.2" y="104.3" width="1.7" height="4.6" fill="#f01c1c"/>
<rect x="227.2" y="102.6" width="1.7" height="4.0" fill="#e2d488"/>
<rect x="228.2" y="102.1" width="1.7" height="2.2" fill="#2a82e8"/>
<rect x="229.2" y="101.9" width="1.7" height="6.1" fill="#2a82e8"/>
<rect x="231.2" y="106.8" width="1.7" height="6.2" fill="#e2d488"/>
<rect x="232.2" y="108.3" width="1.7" height="7.2" fill="#f01c1c"/>
<rect x="233.2" y="112.8" width="1.7" height="5.9" fill="#e2d488"/>
<rect x="234.2" y="116.9" width="1.7" height="6.2" fill="#2a82e8"/>
<rect x="235.2" y="122.6" width="1.7" height="4.8" fill="#f01c1c"/>
<rect x="236.2" y="126.0" width="1.7" height="6.7" fill="#2a82e8"/>
<rect x="237.2" y="130.4" width="1.7" height="7.4" fill="#e2d488"/>
<rect x="238.2" y="136.1" width="1.7" height="1.8" fill="#f01c1c"/>
<rect x="239.2" y="132.4" width="1.7" height="5.1" fill="#e2d488"/>
<rect x="240.2" y="130.2" width="1.7" height="4.0" fill="#e2d488"/>
<rect x="241.2" y="125.3" width="1.7" height="6.4" fill="#f01c1c"/>
<rect x="242.2" y="125.5" width="1.7" height="3.6" fill="#2a82e8"/>
<rect x="243.2" y="126.5" width="1.7" height="2.6" fill="#f01c1c"/>
<rect x="244.2" y="127.1" width="1.7" height="2.0" fill="#2a82e8"/>
<rect x="246.2" y="129.8" width="1.7" height="3.2" fill="#2a82e8"/>
<rect x="247.2" y="131.1" width="1.7" height="2.4" fill="#2a82e8"/>
<rect x="248.2" y="132.4" width="1.7" height="2.2" fill="#2a82e8"/>
<rect x="249.2" y="133.4" width="1.7" height="0.7" fill="#f01c1c"/>
<rect x="250.2" y="129.9" width="1.7" height="4.7" fill="#e2d488"/>
<rect x="251.2" y="128.3" width="1.7" height="3.3" fill="#2a82e8"/>
<rect x="252.2" y="127.6" width="1.7" height="2.3" fill="#f01c1c"/>
<rect x="253.2" y="123.6" width="1.7" height="5.4" fill="#e2d488"/>
<rect x="256.2" y="119.0" width="1.7" height="3.1" fill="#f01c1c"/>
<rect x="257.2" y="121.4" width="1.7" height="2.6" fill="#2a82e8"/>
<rect x="258.2" y="122.5" width="1.7" height="5.1" fill="#2a82e8"/>
<rect x="259.2" y="126.6" width="1.7" height="6.3" fill="#e2d488"/>
<rect x="261.2" y="132.4" width="1.7" height="5.2" fill="#2a82e8"/>
<rect x="262.2" y="136.3" width="1.7" height="1.2" fill="#2a82e8"/>
<rect x="263.2" y="136.5" width="1.7" height="2.5" fill="#2a82e8"/>
<rect x="265.2" y="140.5" width="1.7" height="4.3" fill="#2a82e8"/>
<rect x="266.2" y="136.0" width="1.7" height="12.0" fill="#f01c1c"/>
<rect x="267.2" y="146.2" width="1.7" height="1.6" fill="#2a82e8"/>
<rect x="268.2" y="143.7" width="1.7" height="3.4" fill="#f01c1c"/>
<rect x="269.2" y="139.6" width="1.7" height="5.7" fill="#2a82e8"/>
<rect x="270.2" y="138.6" width="1.7" height="2.7" fill="#e2d488"/>
<rect x="271.2" y="136.1" width="1.7" height="4.2" fill="#2a82e8"/>
<rect x="272.2" y="134.9" width="1.7" height="2.8" fill="#e2d488"/>
<rect x="273.2" y="135.7" width="1.7" height="3.7" fill="#2a82e8"/>
<rect x="274.2" y="138.7" width="1.7" height="2.3" fill="#2a82e8"/>
<rect x="275.2" y="137.9" width="1.7" height="2.8" fill="#e2d488"/>
<rect x="276.2" y="136.6" width="1.7" height="3.5" fill="#e2d488"/>
<rect x="277.2" y="130.3" width="1.7" height="8.2" fill="#2a82e8"/>
<rect x="278.2" y="132.3" width="1.7" height="5.5" fill="#f01c1c"/>
<rect x="279.2" y="125.6" width="1.7" height="7.1" fill="#2a82e8"/>
<rect x="280.2" y="126.4" width="1.7" height="11.9" fill="#e2d488"/>
<rect x="281.2" y="125.9" width="1.7" height="2.8" fill="#e2d488"/>
<rect x="283.2" y="124.4" width="1.7" height="3.7" fill="#f01c1c"/>
<rect x="284.2" y="126.4" width="1.7" height="2.5" fill="#e2d488"/>
<rect x="286.2" y="125.9" width="1.7" height="2.6" fill="#f01c1c"/>
<rect x="287.2" y="126.6" width="1.7" height="1.6" fill="#2a82e8"/>
<rect x="288.2" y="125.5" width="1.7" height="2.3" fill="#2a82e8"/>
<rect x="289.2" y="126.1" width="1.7" height="3.3" fill="#2a82e8"/>
<rect x="290.2" y="126.6" width="1.7" height="3.0" fill="#2a82e8"/>
<rect x="291.2" y="126.2" width="1.7" height="3.5" fill="#f01c1c"/>
<rect x="292.2" y="127.7" width="1.7" height="2.0" fill="#2a82e8"/>
<rect x="293.2" y="127.5" width="1.7" height="1.6" fill="#2a82e8"/>
<rect x="294.2" y="127.9" width="1.7" height="2.3" fill="#e2d488"/>
<rect x="295.2" y="127.9" width="1.7" height="1.2" fill="#f01c1c"/>
<rect x="296.2" y="120.9" width="1.7" height="9.0" fill="#f01c1c"/>
<rect x="297.2" y="125.3" width="1.7" height="2.0" fill="#f01c1c"/>
<rect x="298.2" y="124.0" width="1.7" height="2.5" fill="#f01c1c"/>
<rect x="299.2" y="122.3" width="1.7" height="4.0" fill="#e2d488"/>
<rect x="300.2" y="121.0" width="1.7" height="3.6" fill="#f01c1c"/>
<rect x="301.2" y="119.4" width="1.7" height="3.6" fill="#f01c1c"/>
<rect x="302.2" y="117.7" width="1.7" height="3.2" fill="#e2d488"/>
<rect x="303.2" y="116.8" width="1.7" height="3.7" fill="#e2d488"/>
<rect x="304.2" y="116.5" width="1.7" height="3.5" fill="#f01c1c"/>
<rect x="305.2" y="116.6" width="1.7" height="2.5" fill="#f01c1c"/>
<rect x="306.2" y="112.9" width="1.7" height="8.1" fill="#f01c1c"/>
<rect x="308.2" y="119.8" width="1.7" height="3.2" fill="#e2d488"/>
<rect x="309.2" y="120.3" width="1.7" height="1.8" fill="#e2d488"/>
<rect x="310.2" y="120.2" width="1.7" height="1.5" fill="#2a82e8"/>
<rect x="311.2" y="120.2" width="1.7" height="4.6" fill="#2a82e8"/>
<rect x="312.2" y="117.3" width="1.7" height="11.3" fill="#f01c1c"/>
<rect x="313.2" y="126.6" width="1.7" height="3.6" fill="#e2d488"/>
<rect x="314.2" y="129.3" width="1.7" height="2.6" fill="#2a82e8"/>
<rect x="315.2" y="130.2" width="1.7" height="4.7" fill="#2a82e8"/>
<rect x="316.2" y="132.8" width="1.7" height="2.4" fill="#2a82e8"/>
<rect x="317.2" y="133.9" width="1.7" height="3.0" fill="#e2d488"/>
<rect x="318.2" y="135.3" width="1.7" height="4.6" fill="#e2d488"/>
<rect x="319.2" y="137.6" width="1.7" height="2.6" fill="#e2d488"/>
<rect x="320.2" y="138.4" width="1.7" height="3.9" fill="#2a82e8"/>
<rect x="321.2" y="140.4" width="1.7" height="2.3" fill="#2a82e8"/>
<rect x="322.2" y="141.2" width="1.7" height="1.3" fill="#e2d488"/>
<rect x="323.2" y="140.5" width="1.7" height="2.3" fill="#2a82e8"/>
<rect x="324.2" y="140.5" width="1.7" height="4.3" fill="#e2d488"/>
<rect x="325.2" y="134.7" width="1.7" height="10.6" fill="#e2d488"/>
<rect x="326.2" y="143.2" width="1.7" height="5.7" fill="#f01c1c"/>
<rect x="327.2" y="147.5" width="1.7" height="5.2" fill="#2a82e8"/>
<rect x="328.2" y="151.1" width="1.7" height="2.0" fill="#2a82e8"/>
<rect x="329.2" y="145.4" width="1.7" height="9.9" fill="#f01c1c"/>
<rect x="330.2" y="153.9" width="1.7" height="3.8" fill="#2a82e8"/>
<rect x="332.2" y="150.5" width="1.7" height="4.9" fill="#f01c1c"/>
<rect x="333.2" y="151.1" width="1.7" height="3.9" fill="#f01c1c"/>
<rect x="334.2" y="149.3" width="1.7" height="4.3" fill="#e2d488"/>
<rect x="335.2" y="146.9" width="1.7" height="3.4" fill="#f01c1c"/>
<rect x="336.2" y="142.6" width="1.7" height="5.7" fill="#f01c1c"/>
<rect x="337.2" y="140.9" width="1.7" height="4.3" fill="#2a82e8"/>
<rect x="339.2" y="137.3" width="1.7" height="3.0" fill="#e2d488"/>
<rect x="340.2" y="133.2" width="1.7" height="5.2" fill="#f01c1c"/>
<rect x="341.2" y="133.8" width="1.7" height="1.5" fill="#f01c1c"/>
<rect x="342.2" y="132.1" width="1.7" height="3.2" fill="#f01c1c"/>
<rect x="343.2" y="132.3" width="1.7" height="3.7" fill="#f01c1c"/>
<rect x="344.2" y="132.8" width="1.7" height="2.7" fill="#f01c1c"/>
<rect x="345.2" y="132.4" width="1.7" height="2.4" fill="#e2d488"/>
<rect x="346.2" y="132.5" width="1.7" height="2.0" fill="#f01c1c"/>
<rect x="347.2" y="132.3" width="1.7" height="2.1" fill="#f01c1c"/>
<rect x="348.2" y="131.1" width="1.7" height="2.5" fill="#f01c1c"/>
<rect x="349.2" y="129.6" width="1.7" height="2.4" fill="#2a82e8"/>
<rect x="350.2" y="130.1" width="1.7" height="2.2" fill="#2a82e8"/>
<rect x="351.2" y="130.1" width="1.7" height="7.3" fill="#e2d488"/>
<rect x="352.2" y="128.7" width="1.7" height="8.5" fill="#f01c1c"/>
<rect x="353.2" y="127.8" width="1.7" height="2.9" fill="#f01c1c"/>
<rect x="354.2" y="127.2" width="1.7" height="3.7" fill="#f01c1c"/>
<rect x="355.2" y="127.0" width="1.7" height="2.5" fill="#f01c1c"/>
<rect x="356.2" y="121.5" width="1.7" height="8.2" fill="#f01c1c"/>
<rect x="357.2" y="123.6" width="1.7" height="5.6" fill="#2a82e8"/>
<rect x="358.2" y="126.8" width="1.7" height="2.8" fill="#f01c1c"/>
<rect x="360.2" y="124.2" width="1.7" height="3.9" fill="#f01c1c"/>
<rect x="361.2" y="122.3" width="1.7" height="4.0" fill="#e2d488"/>
<rect x="362.2" y="121.3" width="1.7" height="2.1" fill="#f01c1c"/>
<rect x="363.2" y="121.7" width="1.7" height="2.4" fill="#e2d488"/>
<rect x="364.2" y="120.6" width="1.7" height="7.1" fill="#2a82e8"/>
<rect x="366.2" y="123.1" width="1.7" height="3.3" fill="#2a82e8"/>
<rect x="367.2" y="124.2" width="1.7" height="2.8" fill="#2a82e8"/>
<rect x="368.2" y="125.7" width="1.7" height="1.1" fill="#2a82e8"/>
<rect x="369.2" y="126.1" width="1.7" height="4.7" fill="#e2d488"/>
<rect x="370.2" y="127.9" width="1.7" height="6.6" fill="#e2d488"/>
<rect x="371.2" y="132.8" width="1.7" height="6.1" fill="#2a82e8"/>
<rect x="372.2" y="137.4" width="1.7" height="8.4" fill="#e2d488"/>
<rect x="373.2" y="137.4" width="1.7" height="8.1" fill="#e2d488"/>
<rect x="374.2" y="132.1" width="1.7" height="7.9" fill="#f01c1c"/>
<rect x="375.2" y="127.3" width="1.7" height="6.3" fill="#f01c1c"/>
<rect x="376.2" y="119.4" width="1.7" height="10.1" fill="#f01c1c"/>
<rect x="377.2" y="116.3" width="1.7" height="12.4" fill="#e2d488"/>
<rect x="378.2" y="111.4" width="1.7" height="6.3" fill="#e2d488"/>
<rect x="379.2" y="110.2" width="1.7" height="2.9" fill="#2a82e8"/>
<rect x="381.2" y="111.5" width="1.7" height="1.6" fill="#f01c1c"/>
<rect x="382.2" y="112.3" width="1.7" height="1.4" fill="#f01c1c"/>
<rect x="383.2" y="110.7" width="1.7" height="2.9" fill="#f01c1c"/>
<rect x="384.2" y="110.2" width="1.7" height="3.2" fill="#f01c1c"/>
<rect x="385.2" y="110.7" width="1.7" height="4.3" fill="#2a82e8"/>
<rect x="386.2" y="112.6" width="1.7" height="4.8" fill="#f01c1c"/>
<rect x="387.2" y="115.6" width="1.7" height="2.6" fill="#2a82e8"/>
<rect x="388.2" y="116.5" width="1.7" height="3.8" fill="#2a82e8"/>
<rect x="389.2" y="116.5" width="1.7" height="3.9" fill="#2a82e8"/>
<rect x="390.2" y="116.3" width="1.7" height="2.1" fill="#e2d488"/>
<rect x="391.2" y="115.9" width="1.7" height="4.0" fill="#e2d488"/>
<rect x="392.2" y="112.4" width="1.7" height="10.1" fill="#e2d488"/>
<rect x="393.2" y="118.6" width="1.7" height="3.6" fill="#f01c1c"/>
<rect x="395.2" y="119.8" width="1.7" height="1.8" fill="#2a82e8"/>
<rect x="396.2" y="118.3" width="1.7" height="2.8" fill="#f01c1c"/>
<rect x="397.2" y="118.9" width="1.7" height="1.8" fill="#e2d488"/>
<rect x="398.2" y="118.9" width="1.7" height="1.6" fill="#e2d488"/>
<rect x="399.2" y="118.6" width="1.7" height="9.0" fill="#2a82e8"/>
<rect x="400.2" y="116.9" width="1.7" height="3.8" fill="#f01c1c"/>
<rect x="401.2" y="116.8" width="1.7" height="2.3" fill="#f01c1c"/>
<rect x="403.2" y="118.0" width="1.7" height="1.5" fill="#2a82e8"/>
<rect x="404.2" y="117.3" width="1.7" height="2.7" fill="#f01c1c"/>
<rect x="405.2" y="117.4" width="1.7" height="2.3" fill="#2a82e8"/>
<rect x="408.2" y="116.4" width="1.7" height="2.7" fill="#2a82e8"/>
<rect x="409.2" y="116.7" width="1.7" height="2.0" fill="#e2d488"/>
<rect x="410.2" y="117.1" width="1.7" height="3.5" fill="#2a82e8"/>
<rect x="411.2" y="115.7" width="1.7" height="4.0" fill="#f01c1c"/>
<rect x="412.2" y="115.4" width="1.7" height="8.3" fill="#f01c1c"/>
<rect x="413.2" y="111.4" width="1.7" height="5.3" fill="#f01c1c"/>
<rect x="415.2" y="104.4" width="1.7" height="5.9" fill="#e2d488"/>
<rect x="416.2" y="101.2" width="1.7" height="8.7" fill="#2a82e8"/>
<rect x="417.2" y="101.2" width="1.7" height="3.3" fill="#e2d488"/>
<rect x="418.2" y="102.9" width="1.7" height="2.2" fill="#2a82e8"/>
<rect x="419.2" y="103.1" width="1.7" height="2.0" fill="#e2d488"/>
<rect x="420.2" y="104.5" width="1.7" height="2.7" fill="#2a82e8"/>
<rect x="422.2" y="107.4" width="1.7" height="2.7" fill="#2a82e8"/>
<rect x="423.2" y="108.3" width="1.7" height="1.1" fill="#2a82e8"/>
<rect x="424.2" y="107.5" width="1.7" height="2.7" fill="#f01c1c"/>
<rect x="425.2" y="107.5" width="1.7" height="5.0" fill="#e2d488"/>
<rect x="426.2" y="111.0" width="1.7" height="1.8" fill="#2a82e8"/>
<rect x="427.2" y="111.4" width="1.7" height="1.9" fill="#2a82e8"/>
<rect x="428.2" y="111.3" width="1.7" height="4.0" fill="#f01c1c"/>
<rect x="429.2" y="113.6" width="1.7" height="1.9" fill="#2a82e8"/>
<rect x="430.2" y="114.7" width="1.7" height="4.5" fill="#f01c1c"/>
<rect x="431.2" y="117.2" width="1.7" height="2.7" fill="#2a82e8"/>
<rect x="432.2" y="118.3" width="1.7" height="3.9" fill="#2a82e8"/>
<rect x="433.2" y="120.4" width="1.7" height="3.1" fill="#2a82e8"/>
<rect x="434.2" y="121.7" width="1.7" height="3.4" fill="#e2d488"/>
<rect x="435.2" y="123.6" width="1.7" height="5.3" fill="#2a82e8"/>
<rect x="436.2" y="127.9" width="1.7" height="2.1" fill="#2a82e8"/>
<rect x="437.2" y="127.9" width="1.7" height="3.3" fill="#f0f0f0"/>
<rect x="438.2" y="128.9" width="1.7" height="1.9" fill="#2a82e8"/>
<rect x="439.2" y="129.7" width="1.7" height="1.7" fill="#2a82e8"/>
<rect x="440.2" y="130.4" width="1.7" height="1.8" fill="#f01c1c"/>
<rect x="441.2" y="130.9" width="1.7" height="2.4" fill="#2a82e8"/>
<rect x="442.2" y="130.9" width="1.7" height="4.3" fill="#e2d488"/>
<rect x="444.2" y="137.4" width="1.7" height="6.4" fill="#f01c1c"/>
<rect x="445.2" y="141.8" width="1.7" height="5.8" fill="#2a82e8"/>
<rect x="447.2" y="148.7" width="1.7" height="4.9" fill="#f01c1c"/>
<rect x="448.2" y="151.3" width="1.7" height="2.3" fill="#2a82e8"/>
<rect x="449.2" y="151.1" width="1.7" height="6.4" fill="#f01c1c"/>
<rect x="450.2" y="152.1" width="1.7" height="3.2" fill="#e2d488"/>
<rect x="451.2" y="153.7" width="1.7" height="4.1" fill="#e2d488"/>
<rect x="452.2" y="156.6" width="1.7" height="3.4" fill="#2a82e8"/>
<rect x="453.2" y="158.9" width="1.7" height="4.5" fill="#2a82e8"/>
<rect x="454.2" y="161.2" width="1.7" height="4.5" fill="#2a82e8"/>
<rect x="455.2" y="164.5" width="1.7" height="7.9" fill="#2a82e8"/>
<rect x="456.2" y="170.1" width="1.7" height="4.1" fill="#2a82e8"/>
<rect x="457.2" y="172.6" width="1.7" height="3.6" fill="#e2d488"/>
<rect x="458.2" y="174.4" width="1.7" height="1.4" fill="#2a82e8"/>
<rect x="459.2" y="174.6" width="1.7" height="4.2" fill="#f01c1c"/>
<rect x="460.2" y="174.7" width="1.7" height="3.2" fill="#2a82e8"/>
<rect x="461.2" y="171.9" width="1.7" height="4.8" fill="#e2d488"/>
<rect x="462.2" y="167.8" width="1.7" height="10.1" fill="#f01c1c"/>
<rect x="463.2" y="164.3" width="1.7" height="5.1" fill="#2a82e8"/>
<rect x="464.2" y="162.2" width="1.7" height="2.8" fill="#f01c1c"/>
<rect x="465.2" y="159.7" width="1.7" height="4.3" fill="#2a82e8"/>
<rect x="466.2" y="157.8" width="1.7" height="4.3" fill="#2a82e8"/>
<rect x="467.2" y="152.0" width="1.7" height="9.9" fill="#f01c1c"/>
<rect x="468.2" y="158.7" width="1.7" height="3.2" fill="#e2d488"/>
<rect x="469.2" y="157.8" width="1.7" height="2.9" fill="#2a82e8"/>
<rect x="470.2" y="159.5" width="1.7" height="1.8" fill="#e2d488"/>
<rect x="471.2" y="159.7" width="1.7" height="2.0" fill="#e2d488"/>
<rect x="472.2" y="160.5" width="1.7" height="5.6" fill="#f01c1c"/>
<rect x="473.2" y="159.0" width="1.7" height="2.9" fill="#2a82e8"/>
<rect x="474.2" y="158.3" width="1.7" height="2.5" fill="#2a82e8"/>
<rect x="475.2" y="158.4" width="1.7" height="2.0" fill="#2a82e8"/>
<rect x="477.2" y="157.1" width="1.7" height="2.8" fill="#f01c1c"/>
<rect x="478.2" y="153.5" width="1.7" height="8.0" fill="#e2d488"/>
<rect x="479.2" y="160.5" width="1.7" height="3.7" fill="#2a82e8"/>
<rect x="480.2" y="161.8" width="1.7" height="4.3" fill="#e2d488"/>
<rect x="481.2" y="165.0" width="1.7" height="9.4" fill="#2a82e8"/>
<rect x="482.2" y="167.8" width="1.7" height="4.0" fill="#2a82e8"/>
<rect x="483.2" y="169.9" width="1.7" height="3.7" fill="#2a82e8"/>
<rect x="484.2" y="171.0" width="1.7" height="5.4" fill="#e2d488"/>
<rect x="487.2" y="169.3" width="1.7" height="2.7" fill="#f01c1c"/>
<rect x="488.2" y="168.1" width="1.7" height="3.0" fill="#e2d488"/>
<rect x="489.2" y="167.7" width="1.7" height="2.3" fill="#f01c1c"/>
<rect x="490.2" y="164.5" width="1.7" height="5.8" fill="#f01c1c"/>
<rect x="491.2" y="163.2" width="1.7" height="3.5" fill="#2a82e8"/>
<rect x="492.2" y="162.7" width="1.7" height="2.6" fill="#2a82e8"/>
<rect x="493.2" y="160.0" width="1.7" height="4.5" fill="#2a82e8"/>
<rect x="494.2" y="159.5" width="1.7" height="2.2" fill="#2a82e8"/>
<rect x="495.2" y="159.4" width="1.7" height="3.8" fill="#e2d488"/>
<rect x="496.2" y="161.7" width="1.7" height="3.2" fill="#2a82e8"/>
<rect x="498.2" y="163.9" width="1.7" height="2.6" fill="#e2d488"/>
<rect x="499.2" y="164.1" width="1.7" height="2.7" fill="#2a82e8"/>
<rect x="501.2" y="165.7" width="1.7" height="3.9" fill="#e2d488"/>
<rect x="502.2" y="168.2" width="1.7" height="1.8" fill="#e2d488"/>
<rect x="503.2" y="166.5" width="1.7" height="3.0" fill="#f01c1c"/>
<rect x="504.2" y="166.6" width="1.7" height="2.9" fill="#f01c1c"/>
<rect x="505.2" y="167.1" width="1.7" height="2.8" fill="#2a82e8"/>
<rect x="506.2" y="168.3" width="1.7" height="1.7" fill="#f01c1c"/>
<rect x="507.2" y="168.3" width="1.7" height="3.0" fill="#e2d488"/>
<rect x="508.2" y="168.9" width="1.7" height="1.6" fill="#f0f0f0"/>
<rect x="509.2" y="165.9" width="1.7" height="4.9" fill="#f01c1c"/>
<rect x="511.2" y="161.4" width="1.7" height="4.1" fill="#f01c1c"/>
<rect x="512.2" y="159.8" width="1.7" height="2.9" fill="#f01c1c"/>
<rect x="513.2" y="158.5" width="1.7" height="3.0" fill="#2a82e8"/>
<rect x="514.2" y="158.2" width="1.7" height="2.7" fill="#f01c1c"/>
<rect x="515.2" y="158.0" width="1.7" height="2.1" fill="#2a82e8"/>
<rect x="516.2" y="157.5" width="1.7" height="2.6" fill="#2a82e8"/>
<rect x="517.2" y="157.0" width="1.7" height="1.9" fill="#f01c1c"/>
<rect x="518.2" y="157.2" width="1.7" height="2.7" fill="#e2d488"/>
<rect x="519.2" y="157.6" width="1.7" height="2.5" fill="#e2d488"/>
<rect x="520.2" y="154.9" width="1.7" height="5.2" fill="#2a82e8"/>
<rect x="521.2" y="157.8" width="1.7" height="2.8" fill="#e2d488"/>
<rect x="522.2" y="159.5" width="1.7" height="3.1" fill="#e2d488"/>
<rect x="523.2" y="160.2" width="1.7" height="3.3" fill="#f01c1c"/>
<rect x="524.2" y="162.0" width="1.7" height="1.3" fill="#2a82e8"/>
<rect x="525.2" y="161.6" width="1.7" height="2.4" fill="#2a82e8"/>
<rect x="526.2" y="159.5" width="1.7" height="5.8" fill="#2a82e8"/>
<rect x="527.2" y="159.0" width="1.7" height="2.1" fill="#f01c1c"/>
<rect x="528.2" y="156.4" width="1.7" height="4.8" fill="#f01c1c"/>
<rect x="529.2" y="154.8" width="1.7" height="2.4" fill="#f01c1c"/>
<rect x="530.2" y="150.2" width="1.7" height="6.7" fill="#f01c1c"/>
<rect x="532.2" y="143.5" width="1.7" height="4.6" fill="#f01c1c"/>
<rect x="533.2" y="143.6" width="1.7" height="2.0" fill="#f01c1c"/>
<rect x="534.2" y="142.9" width="1.7" height="2.3" fill="#f01c1c"/>
<rect x="536.2" y="138.7" width="1.7" height="4.6" fill="#f01c1c"/>
<rect x="539.2" y="128.0" width="1.7" height="8.5" fill="#e2d488"/>
<rect x="540.2" y="127.2" width="1.7" height="8.7" fill="#f01c1c"/>
<rect x="542.2" y="123.9" width="1.7" height="4.7" fill="#e2d488"/>
<rect x="543.2" y="124.0" width="1.7" height="7.7" fill="#2a82e8"/>
<rect x="546.2" y="123.4" width="1.7" height="6.5" fill="#f01c1c"/>
<rect x="547.2" y="124.7" width="1.7" height="6.7" fill="#f01c1c"/>
<rect x="548.2" y="129.1" width="1.7" height="8.9" fill="#2a82e8"/>
<rect x="549.2" y="131.6" width="1.7" height="2.2" fill="#e2d488"/>
<rect x="552.2" y="125.8" width="1.7" height="2.5" fill="#e2d488"/>
<rect x="553.2" y="122.9" width="1.7" height="3.7" fill="#f0f0f0"/>
<rect x="554.2" y="123.9" width="1.7" height="3.2" fill="#f01c1c"/>
<rect x="555.2" y="124.6" width="1.7" height="5.8" fill="#2a82e8"/>
<rect x="556.2" y="123.9" width="1.7" height="4.0" fill="#f01c1c"/>
<rect x="557.2" y="124.8" width="1.7" height="2.3" fill="#2a82e8"/>
<rect x="558.2" y="124.3" width="1.7" height="3.6" fill="#e2d488"/>
<rect x="559.2" y="123.6" width="1.7" height="5.9" fill="#f01c1c"/>
<rect x="561.2" y="126.9" width="1.7" height="4.8" fill="#2a82e8"/>
<rect x="563.2" y="133.4" width="1.7" height="4.0" fill="#2a82e8"/>
<rect x="564.2" y="135.4" width="1.7" height="5.0" fill="#e2d488"/>
<rect x="565.2" y="138.8" width="1.7" height="3.1" fill="#f01c1c"/>
<rect x="567.2" y="130.2" width="1.7" height="6.7" fill="#f01c1c"/>
<rect x="568.2" y="123.0" width="1.7" height="8.5" fill="#f01c1c"/>
<rect x="569.2" y="116.2" width="1.7" height="9.4" fill="#f01c1c"/>
<rect x="571.2" y="113.5" width="1.7" height="4.8" fill="#f01c1c"/>
<rect x="572.2" y="111.9" width="1.7" height="3.5" fill="#e2d488"/>
<rect x="573.2" y="110.5" width="1.7" height="2.6" fill="#e2d488"/>
<rect x="574.2" y="101.2" width="1.7" height="10.8" fill="#f01c1c"/>
<rect x="575.2" y="106.5" width="1.7" height="2.8" fill="#f01c1c"/>
<rect x="576.2" y="103.3" width="1.7" height="4.2" fill="#e2d488"/>
<rect x="577.2" y="103.5" width="1.7" height="3.3" fill="#f01c1c"/>
<rect x="578.2" y="102.3" width="1.7" height="4.3" fill="#2a82e8"/>
<rect x="579.2" y="102.7" width="1.7" height="2.9" fill="#e2d488"/>
<rect x="580.2" y="104.1" width="1.7" height="1.9" fill="#2a82e8"/>
<rect x="581.2" y="95.0" width="1.7" height="10.4" fill="#f01c1c"/>
<rect x="582.2" y="98.5" width="1.7" height="3.7" fill="#f01c1c"/>
<rect x="583.2" y="98.7" width="1.7" height="1.3" fill="#2a82e8"/>
<rect x="584.2" y="90.5" width="1.7" height="9.6" fill="#f01c1c"/>
<rect x="586.2" y="92.5" width="1.7" height="1.0" fill="#e2d488"/>
<rect x="587.2" y="92.5" width="1.7" height="2.5" fill="#f01c1c"/>
<rect x="588.2" y="91.0" width="1.7" height="3.0" fill="#e2d488"/>
<rect x="589.2" y="89.8" width="1.7" height="2.0" fill="#2a82e8"/>
<rect x="590.2" y="89.1" width="1.7" height="1.5" fill="#2a82e8"/>
<rect x="591.2" y="88.6" width="1.7" height="1.5" fill="#f01c1c"/>
<rect x="592.2" y="88.2" width="1.7" height="2.6" fill="#e2d488"/>
<rect x="593.2" y="84.1" width="1.7" height="6.9" fill="#2a82e8"/>
<rect x="594.2" y="86.3" width="1.7" height="5.3" fill="#2a82e8"/>
<rect x="595.2" y="89.3" width="1.7" height="2.7" fill="#e2d488"/>
<rect x="596.2" y="89.9" width="1.7" height="3.0" fill="#2a82e8"/>
<rect x="597.2" y="91.8" width="1.7" height="3.3" fill="#2a82e8"/>
<rect x="598.2" y="94.2" width="1.7" height="4.2" fill="#2a82e8"/>
<rect x="599.2" y="96.2" width="1.7" height="1.6" fill="#2a82e8"/>
<rect x="600.2" y="95.3" width="1.7" height="2.9" fill="#2a82e8"/>
<rect x="602.2" y="97.1" width="1.7" height="7.4" fill="#2a82e8"/>
<rect x="603.2" y="99.9" width="1.7" height="11.6" fill="#e2d488"/>
<rect x="604.2" y="110.4" width="1.7" height="8.1" fill="#e2d488"/>
<rect x="605.2" y="117.5" width="1.7" height="7.1" fill="#2a82e8"/>
<rect x="606.2" y="123.8" width="1.7" height="1.8" fill="#2a82e8"/>
<rect x="607.2" y="124.0" width="1.7" height="4.2" fill="#2a82e8"/>
<rect x="608.2" y="126.1" width="1.7" height="4.1" fill="#2a82e8"/>
<rect x="610.2" y="132.0" width="1.7" height="2.1" fill="#2a82e8"/>
<rect x="611.2" y="128.3" width="1.7" height="5.4" fill="#2a82e8"/>
<rect x="612.2" y="132.3" width="1.7" height="2.9" fill="#e2d488"/>
<rect x="613.2" y="133.6" width="1.7" height="2.5" fill="#e2d488"/>
<rect x="614.2" y="134.3" width="1.7" height="3.6" fill="#2a82e8"/>
<rect x="615.2" y="135.5" width="1.7" height="4.0" fill="#e2d488"/>
<rect x="616.2" y="134.1" width="1.7" height="4.6" fill="#2a82e8"/>
<rect x="618.2" y="132.3" width="1.7" height="4.2" fill="#f01c1c"/>
<rect x="619.2" y="129.9" width="1.7" height="8.9" fill="#f0f0f0"/>
<rect x="620.2" y="128.2" width="1.7" height="2.5" fill="#2a82e8"/>
<rect x="621.2" y="128.3" width="1.7" height="1.9" fill="#e2d488"/>
<rect x="622.2" y="127.6" width="1.7" height="2.6" fill="#f01c1c"/>
<rect x="623.2" y="125.9" width="1.7" height="2.5" fill="#2a82e8"/>
<rect x="624.2" y="123.3" width="1.7" height="4.3" fill="#2a82e8"/>
<rect x="625.2" y="120.4" width="1.7" height="4.5" fill="#e2d488"/>
<rect x="626.2" y="111.8" width="1.7" height="9.7" fill="#f01c1c"/>
<rect x="627.2" y="117.7" width="1.7" height="1.6" fill="#f01c1c"/>
<rect x="628.2" y="115.9" width="1.7" height="2.9" fill="#2a82e8"/>
<rect x="629.2" y="115.4" width="1.7" height="2.2" fill="#2a82e8"/>
<rect x="630.2" y="115.7" width="1.7" height="1.3" fill="#f01c1c"/>
<rect x="631.2" y="115.2" width="1.7" height="2.7" fill="#2a82e8"/>
<rect x="632.2" y="115.7" width="1.7" height="4.4" fill="#e2d488"/>
<rect x="633.2" y="118.4" width="1.7" height="3.2" fill="#e2d488"/>
<rect x="635.2" y="106.9" width="1.7" height="11.2" fill="#f01c1c"/>
<rect x="636.2" y="103.3" width="1.7" height="7.7" fill="#2a82e8"/>
<rect x="638.2" y="100.1" width="1.7" height="3.7" fill="#2a82e8"/>
<rect x="639.2" y="102.0" width="1.7" height="1.8" fill="#e2d488"/>
<rect x="640.2" y="101.8" width="1.7" height="2.3" fill="#e2d488"/>
<rect x="641.2" y="100.3" width="1.7" height="2.7" fill="#e2d488"/>
<rect x="643.2" y="101.9" width="1.7" height="4.3" fill="#2a82e8"/>
<rect x="645.2" y="100.7" width="1.7" height="5.2" fill="#e2d488"/>
<rect x="646.2" y="99.4" width="1.7" height="3.5" fill="#f01c1c"/>
<rect x="647.2" y="97.9" width="1.7" height="3.5" fill="#f01c1c"/>
<rect x="648.2" y="94.6" width="1.7" height="4.1" fill="#f01c1c"/>
<rect x="649.2" y="90.0" width="1.7" height="6.8" fill="#f0f0f0"/>
<rect x="650.2" y="90.7" width="1.7" height="1.2" fill="#e2d488"/>
<rect x="651.2" y="90.0" width="1.7" height="4.5" fill="#f01c1c"/>
<rect x="652.2" y="89.6" width="1.7" height="1.9" fill="#e2d488"/>
<rect x="653.2" y="86.9" width="1.7" height="10.4" fill="#2a82e8"/>
<rect x="654.2" y="87.2" width="1.7" height="4.5" fill="#e2d488"/>
<rect x="655.2" y="89.6" width="1.7" height="1.8" fill="#f01c1c"/>
<rect x="656.2" y="90.1" width="1.7" height="2.4" fill="#2a82e8"/>
<rect x="657.2" y="90.8" width="1.7" height="5.2" fill="#2a82e8"/>
<rect x="658.2" y="94.2" width="1.7" height="4.6" fill="#2a82e8"/>
<rect x="660.2" y="98.3" width="1.7" height="3.3" fill="#f01c1c"/>
<rect x="662.2" y="101.2" width="1.7" height="5.7" fill="#f01c1c"/>
<rect x="663.2" y="104.5" width="1.7" height="2.5" fill="#2a82e8"/>
<rect x="664.2" y="106.1" width="1.7" height="1.0" fill="#2a82e8"/>
<rect x="665.2" y="103.5" width="1.7" height="3.8" fill="#f01c1c"/>
<rect x="666.2" y="101.2" width="1.7" height="3.8" fill="#e2d488"/>
<rect x="667.2" y="100.4" width="1.7" height="7.6" fill="#f01c1c"/>
<rect x="668.2" y="99.3" width="1.7" height="3.1" fill="#f01c1c"/>
<rect x="669.2" y="99.3" width="1.7" height="3.0" fill="#2a82e8"/>
<rect x="671.2" y="104.2" width="1.7" height="6.1" fill="#2a82e8"/>
<rect x="672.2" y="101.1" width="1.7" height="9.9" fill="#f01c1c"/>
<rect x="673.2" y="96.0" width="1.7" height="6.6" fill="#2a82e8"/>
<rect x="674.2" y="90.5" width="1.7" height="7.3" fill="#f01c1c"/>
<rect x="675.2" y="90.1" width="1.7" height="8.9" fill="#2a82e8"/>
<rect x="677.2" y="104.6" width="1.7" height="13.6" fill="#2a82e8"/>
<rect x="678.2" y="111.2" width="1.7" height="8.4" fill="#e2d488"/>
<rect x="679.2" y="117.5" width="1.7" height="10.9" fill="#2a82e8"/>
<rect x="680.2" y="127.0" width="1.7" height="12.2" fill="#2a82e8"/>
<rect x="681.2" y="136.7" width="1.7" height="10.7" fill="#e2d488"/>
<rect x="682.2" y="146.9" width="1.7" height="9.0" fill="#e2d488"/>
<rect x="683.2" y="147.6" width="1.7" height="8.1" fill="#f01c1c"/>
<rect x="684.2" y="142.9" width="1.7" height="6.4" fill="#f01c1c"/>
<rect x="685.2" y="134.3" width="1.7" height="14.7" fill="#f01c1c"/>
<rect x="688.2" y="128.6" width="1.7" height="1.6" fill="#f01c1c"/>
<rect x="689.2" y="122.7" width="1.7" height="8.1" fill="#2a82e8"/>
<rect x="690.2" y="128.9" width="1.7" height="4.2" fill="#e2d488"/>
<rect x="691.2" y="131.9" width="1.7" height="2.0" fill="#e2d488"/>
<rect x="692.2" y="133.1" width="1.7" height="4.1" fill="#2a82e8"/>
<rect x="693.2" y="134.5" width="1.7" height="5.0" fill="#2a82e8"/>
<rect x="694.2" y="136.7" width="1.7" height="3.9" fill="#e2d488"/>
<rect x="695.2" y="138.2" width="1.7" height="2.1" fill="#e2d488"/>
<rect x="696.2" y="138.4" width="1.7" height="2.0" fill="#2a82e8"/>
<rect x="698.2" y="139.8" width="1.7" height="2.1" fill="#e2d488"/>
<rect x="699.2" y="139.4" width="1.7" height="2.8" fill="#f01c1c"/>
<rect x="701.2" y="133.9" width="1.7" height="3.1" fill="#f01c1c"/>
<rect x="702.2" y="133.0" width="1.7" height="3.8" fill="#f01c1c"/>
<rect x="703.2" y="130.8" width="1.7" height="4.4" fill="#2a82e8"/>
<rect x="704.2" y="124.5" width="1.7" height="7.8" fill="#e2d488"/>
<rect x="705.2" y="124.7" width="1.7" height="3.8" fill="#e2d488"/>
<rect x="706.2" y="121.2" width="1.7" height="4.7" fill="#f01c1c"/>
<rect x="708.2" y="118.7" width="1.7" height="5.2" fill="#f01c1c"/>
<rect x="709.2" y="119.2" width="1.7" height="1.2" fill="#f01c1c"/>
<rect x="711.2" y="111.9" width="1.7" height="5.7" fill="#2a82e8"/>
<rect x="712.2" y="110.4" width="1.7" height="3.3" fill="#f01c1c"/>
<rect x="713.2" y="109.6" width="1.7" height="2.8" fill="#f01c1c"/>
<rect x="714.2" y="103.7" width="1.7" height="7.1" fill="#f01c1c"/>
<rect x="715.2" y="105.5" width="1.7" height="2.5" fill="#f01c1c"/>
<rect x="717.2" y="99.2" width="1.7" height="8.4" fill="#2a82e8"/>
<rect x="718.2" y="98.1" width="1.7" height="4.0" fill="#e2d488"/>
<rect x="719.2" y="94.5" width="1.7" height="6.2" fill="#2a82e8"/>
<rect x="720.2" y="91.1" width="1.7" height="5.4" fill="#2a82e8"/>
<rect x="724.2" y="84.8" width="1.7" height="2.9" fill="#f01c1c"/>
<rect x="725.2" y="79.9" width="1.7" height="7.3" fill="#e2d488"/>
<rect x="726.2" y="83.1" width="1.7" height="2.7" fill="#e2d488"/>
<rect x="727.2" y="84.3" width="1.7" height="2.2" fill="#2a82e8"/>
<rect x="728.2" y="84.6" width="1.7" height="2.1" fill="#f01c1c"/>
<rect x="729.2" y="85.2" width="1.7" height="2.9" fill="#2a82e8"/>
<rect x="730.2" y="86.4" width="1.7" height="1.6" fill="#2a82e8"/>
<rect x="732.2" y="81.0" width="1.7" height="12.6" fill="#2a82e8"/>
<rect x="733.2" y="92.3" width="1.7" height="9.5" fill="#2a82e8"/>
<rect x="734.2" y="94.5" width="1.7" height="5.6" fill="#2a82e8"/>
<rect x="735.2" y="99.5" width="1.7" height="4.7" fill="#2a82e8"/>
<rect x="736.2" y="102.4" width="1.7" height="5.4" fill="#2a82e8"/>
<rect x="737.2" y="105.3" width="1.7" height="5.5" fill="#f01c1c"/>
<rect x="738.2" y="108.5" width="1.7" height="2.5" fill="#f01c1c"/>
<rect x="739.2" y="108.6" width="1.7" height="2.2" fill="#e2d488"/>
<rect x="740.2" y="107.7" width="1.7" height="1.7" fill="#f01c1c"/>
<rect x="741.2" y="106.5" width="1.7" height="3.3" fill="#e2d488"/>
<rect x="742.2" y="104.6" width="1.7" height="4.1" fill="#2a82e8"/>
<rect x="743.2" y="104.6" width="1.7" height="6.3" fill="#2a82e8"/>
<rect x="744.2" y="108.7" width="1.7" height="7.7" fill="#e2d488"/>
<rect x="745.2" y="114.8" width="1.7" height="8.0" fill="#2a82e8"/>
<rect x="746.2" y="120.6" width="1.7" height="4.3" fill="#2a82e8"/>
<rect x="747.2" y="123.3" width="1.7" height="5.5" fill="#2a82e8"/>
<rect x="749.2" y="131.0" width="1.7" height="2.9" fill="#e2d488"/>
<rect x="750.2" y="132.8" width="1.7" height="3.8" fill="#2a82e8"/>
<rect x="751.2" y="135.4" width="1.7" height="3.4" fill="#f01c1c"/>
<rect x="752.2" y="137.8" width="1.7" height="3.0" fill="#e2d488"/>
<rect x="753.2" y="137.6" width="1.7" height="4.1" fill="#2a82e8"/>
<rect x="754.2" y="137.0" width="1.7" height="2.7" fill="#f01c1c"/>
<rect x="755.2" y="135.7" width="1.7" height="2.9" fill="#e2d488"/>
<rect x="756.2" y="132.8" width="1.7" height="5.6" fill="#e2d488"/>
<rect x="757.2" y="130.8" width="1.7" height="3.7" fill="#e2d488"/>
<rect x="758.2" y="124.5" width="1.7" height="7.3" fill="#f01c1c"/>
<rect x="759.2" y="126.6" width="1.7" height="3.8" fill="#f01c1c"/>
<rect x="760.2" y="125.6" width="1.7" height="3.4" fill="#f01c1c"/>
<rect x="761.2" y="124.4" width="1.7" height="2.3" fill="#f01c1c"/>
<rect x="763.2" y="119.6" width="1.7" height="3.9" fill="#f01c1c"/>
<rect x="764.2" y="117.6" width="1.7" height="4.6" fill="#f01c1c"/>
<rect x="765.2" y="116.3" width="1.7" height="3.1" fill="#e2d488"/>
<rect x="766.2" y="115.2" width="1.7" height="2.1" fill="#f01c1c"/>
<rect x="767.2" y="111.4" width="1.7" height="5.5" fill="#f01c1c"/>
<rect x="768.2" y="112.6" width="1.7" height="2.9" fill="#f01c1c"/>
<rect x="769.2" y="111.9" width="1.7" height="2.3" fill="#2a82e8"/>
<rect x="770.2" y="112.7" width="1.7" height="3.0" fill="#2a82e8"/>
<rect x="771.2" y="114.8" width="1.7" height="3.0" fill="#2a82e8"/>
<rect x="772.2" y="116.4" width="1.7" height="2.0" fill="#2a82e8"/>
<rect x="773.2" y="116.8" width="1.7" height="2.5" fill="#e2d488"/>
<rect x="774.2" y="114.9" width="1.7" height="4.7" fill="#f01c1c"/>
<rect x="775.2" y="112.4" width="1.7" height="5.0" fill="#2a82e8"/>
<rect x="776.2" y="109.8" width="1.7" height="4.2" fill="#f01c1c"/>
<rect x="777.2" y="107.3" width="1.7" height="4.5" fill="#f01c1c"/>
<rect x="778.2" y="106.3" width="1.7" height="2.9" fill="#f01c1c"/>
<rect x="780.2" y="109.0" width="1.7" height="4.0" fill="#e2d488"/>
<rect x="781.2" y="109.3" width="1.7" height="4.0" fill="#f01c1c"/>
<rect x="782.2" y="106.3" width="1.7" height="5.0" fill="#f01c1c"/>
<rect x="784.2" y="108.0" width="1.7" height="4.6" fill="#e2d488"/>
<rect x="785.2" y="111.3" width="1.7" height="1.0" fill="#f01c1c"/>
<rect x="786.2" y="107.4" width="1.7" height="5.3" fill="#f01c1c"/>
<rect x="787.2" y="104.8" width="1.7" height="5.0" fill="#f01c1c"/>
<rect x="788.2" y="101.8" width="1.7" height="4.8" fill="#2a82e8"/>
<rect x="789.2" y="101.5" width="1.7" height="2.5" fill="#f01c1c"/>
<rect x="790.2" y="99.8" width="1.7" height="3.4" fill="#f01c1c"/>
<rect x="791.2" y="98.8" width="1.7" height="2.5" fill="#2a82e8"/>
<rect x="792.2" y="99.3" width="1.7" height="2.8" fill="#2a82e8"/>
<rect x="793.2" y="99.9" width="1.7" height="2.4" fill="#2a82e8"/>
<rect x="794.2" y="100.1" width="1.7" height="3.1" fill="#2a82e8"/>
<rect x="795.2" y="101.5" width="1.7" height="3.9" fill="#2a82e8"/>
<rect x="796.2" y="104.3" width="1.7" height="3.3" fill="#2a82e8"/>
<rect x="797.2" y="106.5" width="1.7" height="2.2" fill="#e2d488"/>
<rect x="798.2" y="103.2" width="1.7" height="5.6" fill="#f0f0f0"/>
<rect x="799.2" y="102.6" width="1.7" height="2.7" fill="#e2d488"/>
<rect x="800.2" y="100.2" width="1.7" height="3.3" fill="#2a82e8"/>
<rect x="801.2" y="97.5" width="1.7" height="4.3" fill="#f01c1c"/>
<rect x="802.2" y="96.5" width="1.7" height="4.9" fill="#e2d488"/>
<rect x="805.2" y="87.2" width="1.7" height="3.4" fill="#f01c1c"/>
<rect x="806.2" y="86.2" width="1.7" height="2.4" fill="#e2d488"/>
<rect x="807.2" y="86.6" width="1.7" height="3.5" fill="#2a82e8"/>
<rect x="808.2" y="88.1" width="1.7" height="2.6" fill="#f01c1c"/>
<rect x="809.2" y="87.9" width="1.7" height="4.0" fill="#f01c1c"/>
<rect x="810.2" y="86.9" width="1.7" height="7.4" fill="#2a82e8"/>
<rect x="811.2" y="92.6" width="1.7" height="3.5" fill="#e2d488"/>
<rect x="812.2" y="94.4" width="1.7" height="5.7" fill="#f01c1c"/>
<rect x="814.2" y="87.2" width="1.7" height="4.6" fill="#f01c1c"/>
<rect x="815.2" y="79.5" width="1.7" height="9.1" fill="#f01c1c"/>
<rect x="816.2" y="82.8" width="1.7" height="2.5" fill="#e2d488"/>
<rect x="817.2" y="72.0" width="1.7" height="12.1" fill="#f01c1c"/>
<rect x="818.2" y="74.0" width="1.7" height="5.9" fill="#2a82e8"/>
<rect x="819.2" y="69.1" width="1.7" height="6.5" fill="#f01c1c"/>
<rect x="820.2" y="69.1" width="1.7" height="4.0" fill="#e2d488"/>
<rect x="821.2" y="70.0" width="1.7" height="2.2" fill="#e2d488"/>
<rect x="822.2" y="67.1" width="1.7" height="4.6" fill="#f01c1c"/>
<rect x="823.2" y="66.8" width="1.7" height="2.4" fill="#f01c1c"/>
<rect x="824.2" y="66.6" width="1.7" height="6.3" fill="#f01c1c"/>
<rect x="826.2" y="67.6" width="1.7" height="1.9" fill="#e2d488"/>
<rect x="827.2" y="66.6" width="1.7" height="2.0" fill="#f01c1c"/>
<rect x="828.2" y="66.0" width="1.7" height="5.1" fill="#f01c1c"/>
<rect x="829.2" y="65.9" width="1.7" height="2.4" fill="#2a82e8"/>
<rect x="830.2" y="65.3" width="1.7" height="4.4" fill="#2a82e8"/>
<rect x="831.2" y="67.8" width="1.7" height="5.9" fill="#2a82e8"/>
<rect x="832.2" y="70.8" width="1.7" height="4.6" fill="#f0f0f0"/>
<rect x="833.2" y="73.4" width="1.7" height="2.0" fill="#f01c1c"/>
<rect x="834.2" y="72.7" width="1.7" height="2.0" fill="#2a82e8"/>
<rect x="835.2" y="72.3" width="1.7" height="2.0" fill="#2a82e8"/>
<rect x="836.2" y="72.5" width="1.7" height="5.8" fill="#e2d488"/>
<rect x="837.2" y="73.0" width="1.7" height="1.4" fill="#2a82e8"/>
<rect x="839.2" y="73.7" width="1.7" height="1.9" fill="#f01c1c"/>
<rect x="840.2" y="75.0" width="1.7" height="3.9" fill="#f01c1c"/>
<rect x="842.2" y="76.2" width="1.7" height="1.6" fill="#2a82e8"/>
<rect x="844.2" y="74.9" width="1.7" height="2.3" fill="#2a82e8"/>
<rect x="845.2" y="74.3" width="1.7" height="2.4" fill="#2a82e8"/>
<rect x="846.2" y="72.5" width="1.7" height="3.9" fill="#f01c1c"/>
<rect x="847.2" y="73.5" width="1.7" height="4.4" fill="#2a82e8"/>
<rect x="848.2" y="76.8" width="1.7" height="5.3" fill="#2a82e8"/>
<rect x="849.2" y="80.1" width="1.7" height="3.0" fill="#2a82e8"/>
<rect x="850.2" y="77.2" width="1.7" height="5.3" fill="#f01c1c"/>
<rect x="851.2" y="78.0" width="1.7" height="8.4" fill="#2a82e8"/>
<rect x="852.2" y="84.7" width="1.7" height="8.8" fill="#2a82e8"/>
<rect x="853.2" y="85.3" width="1.7" height="10.1" fill="#e2d488"/>
<rect x="854.2" y="88.2" width="1.7" height="1.5" fill="#f01c1c"/>
<rect x="856.2" y="83.7" width="1.7" height="2.9" fill="#f01c1c"/>
<rect x="857.2" y="83.4" width="1.7" height="2.8" fill="#e2d488"/>
<rect x="858.2" y="80.8" width="1.7" height="3.7" fill="#f01c1c"/>
<rect x="859.2" y="79.3" width="1.7" height="3.3" fill="#f01c1c"/>
<rect x="860.2" y="78.0" width="1.7" height="3.2" fill="#f01c1c"/>
<rect x="861.2" y="76.7" width="1.7" height="3.2" fill="#e2d488"/>
<rect x="862.2" y="75.5" width="1.7" height="3.8" fill="#f01c1c"/>
<rect x="863.2" y="72.6" width="1.7" height="5.6" fill="#f01c1c"/>
<rect x="864.2" y="76.7" width="1.7" height="1.4" fill="#f01c1c"/>
<rect x="865.2" y="77.2" width="1.7" height="0.7" fill="#2a82e8"/>
<rect x="866.2" y="76.3" width="1.7" height="2.7" fill="#e2d488"/>
<rect x="867.2" y="74.0" width="1.7" height="4.4" fill="#f01c1c"/>
<rect x="868.2" y="73.7" width="1.7" height="2.7" fill="#f01c1c"/>
<rect x="869.2" y="70.3" width="1.7" height="5.0" fill="#f01c1c"/>
<rect x="870.2" y="62.6" width="1.7" height="9.3" fill="#2a82e8"/>
<rect x="871.2" y="66.0" width="1.7" height="4.6" fill="#e2d488"/>
<rect x="872.2" y="65.4" width="1.7" height="2.3" fill="#f01c1c"/>
<rect x="873.2" y="63.3" width="1.7" height="2.7" fill="#f01c1c"/>
<rect x="874.2" y="61.2" width="1.7" height="3.8" fill="#f01c1c"/>
<rect x="875.2" y="60.4" width="1.7" height="2.5" fill="#f01c1c"/>
<rect x="876.2" y="52.0" width="1.7" height="11.4" fill="#f01c1c"/>
<rect x="877.2" y="59.1" width="1.7" height="2.4" fill="#e2d488"/>
<rect x="878.2" y="58.9" width="1.7" height="2.8" fill="#e2d488"/>
<rect x="879.2" y="59.0" width="1.7" height="8.7" fill="#f01c1c"/>
<rect x="880.2" y="57.1" width="1.7" height="5.2" fill="#f01c1c"/>
<rect x="881.2" y="57.3" width="1.7" height="1.6" fill="#2a82e8"/>
<rect x="883.2" y="51.1" width="1.7" height="9.7" fill="#2a82e8"/>
<rect x="885.2" y="61.2" width="1.7" height="4.5" fill="#2a82e8"/>
<rect x="886.2" y="60.3" width="1.7" height="9.4" fill="#e2d488"/>
<rect x="887.2" y="68.4" width="1.7" height="3.5" fill="#2a82e8"/>
<rect x="888.2" y="69.9" width="1.7" height="2.5" fill="#2a82e8"/>
<rect x="889.2" y="69.5" width="1.7" height="1.3" fill="#f01c1c"/>
<rect x="890.2" y="67.3" width="1.7" height="3.3" fill="#e2d488"/>
<rect x="891.2" y="67.4" width="1.7" height="1.9" fill="#f01c1c"/>
<rect x="892.2" y="64.5" width="1.7" height="4.6" fill="#2a82e8"/>
<rect x="893.2" y="63.2" width="1.7" height="3.0" fill="#f0f0f0"/>
<rect x="894.2" y="63.0" width="1.7" height="2.6" fill="#f01c1c"/>
<rect x="896.2" y="61.9" width="1.7" height="1.9" fill="#f01c1c"/>
<rect x="897.2" y="62.0" width="1.7" height="3.1" fill="#2a82e8"/>
<rect x="898.2" y="63.4" width="1.7" height="2.2" fill="#f01c1c"/>
<rect x="899.2" y="64.3" width="1.7" height="4.3" fill="#2a82e8"/>
<rect x="900.2" y="61.3" width="1.7" height="7.9" fill="#2a82e8"/>
<rect x="901.2" y="62.8" width="1.7" height="6.8" fill="#e2d488"/>
<rect x="902.2" y="68.0" width="1.7" height="3.0" fill="#e2d488"/>
<rect x="903.2" y="68.9" width="1.7" height="1.6" fill="#e2d488"/>
<rect x="904.2" y="68.9" width="1.7" height="3.8" fill="#2a82e8"/>
<rect x="905.2" y="72.2" width="1.7" height="1.4" fill="#2a82e8"/>
<rect x="907.2" y="73.5" width="1.7" height="3.8" fill="#e2d488"/>
<rect x="908.2" y="74.1" width="1.7" height="6.9" fill="#e2d488"/>
<rect x="909.2" y="74.4" width="1.7" height="2.5" fill="#e2d488"/>
<rect x="910.2" y="71.6" width="1.7" height="7.1" fill="#f0f0f0"/>
<rect x="911.2" y="76.8" width="1.7" height="2.4" fill="#f01c1c"/>
<rect x="913.2" y="76.9" width="1.7" height="2.2" fill="#e2d488"/>
<rect x="914.2" y="77.1" width="1.7" height="1.4" fill="#f0f0f0"/>
<rect x="915.2" y="75.1" width="1.7" height="3.7" fill="#e2d488"/>
<rect x="916.2" y="75.4" width="1.7" height="2.3" fill="#2a82e8"/>
<rect x="918.2" y="72.3" width="1.7" height="2.8" fill="#e2d488"/>
<rect x="919.2" y="74.0" width="1.7" height="2.3" fill="#2a82e8"/>
<rect x="920.2" y="72.8" width="1.7" height="2.9" fill="#f01c1c"/>
<rect x="921.2" y="65.3" width="1.7" height="9.2" fill="#e2d488"/>
<rect x="922.2" y="73.2" width="1.7" height="2.2" fill="#2a82e8"/>
<rect x="923.2" y="71.4" width="1.7" height="3.0" fill="#2a82e8"/>
<rect x="924.2" y="69.9" width="1.7" height="2.9" fill="#f01c1c"/>
<rect x="925.2" y="68.4" width="1.7" height="3.6" fill="#f01c1c"/>
<rect x="926.2" y="65.9" width="1.7" height="3.6" fill="#e2d488"/>
<rect x="927.2" y="65.4" width="1.7" height="1.9" fill="#f01c1c"/>
<rect x="928.2" y="66.4" width="1.7" height="1.1" fill="#e2d488"/>
<rect x="929.2" y="64.2" width="1.7" height="3.8" fill="#f01c1c"/>
<rect x="930.2" y="63.2" width="1.7" height="4.0" fill="#2a82e8"/>
<rect x="931.2" y="65.7" width="1.7" height="3.2" fill="#2a82e8"/>
<rect x="932.2" y="67.4" width="1.7" height="2.7" fill="#2a82e8"/>
<rect x="933.2" y="68.6" width="1.7" height="3.2" fill="#2a82e8"/>
<rect x="934.2" y="70.3" width="1.7" height="5.0" fill="#e2d488"/>
<rect x="935.2" y="73.9" width="1.7" height="2.1" fill="#2a82e8"/>
<rect x="936.2" y="73.6" width="1.7" height="12.5" fill="#2a82e8"/>
<rect x="937.2" y="74.8" width="1.7" height="3.4" fill="#f01c1c"/>
<rect x="938.2" y="74.9" width="1.7" height="2.8" fill="#f01c1c"/>
<rect x="939.2" y="77.0" width="1.7" height="1.1" fill="#f01c1c"/>
<rect x="941.2" y="72.2" width="1.7" height="7.4" fill="#e2d488"/>
<rect x="942.2" y="75.0" width="1.7" height="4.1" fill="#e2d488"/>
<rect x="943.2" y="73.3" width="1.7" height="3.2" fill="#f01c1c"/>
<rect x="944.2" y="70.2" width="1.7" height="5.7" fill="#f01c1c"/>
<rect x="945.2" y="73.7" width="1.7" height="2.8" fill="#e2d488"/>
<rect x="946.2" y="73.6" width="1.7" height="3.1" fill="#2a82e8"/>
<rect x="947.2" y="73.3" width="1.7" height="3.0" fill="#2a82e8"/>
<rect x="948.2" y="73.6" width="1.7" height="1.6" fill="#2a82e8"/>
<rect x="949.2" y="72.3" width="1.7" height="3.6" fill="#2a82e8"/>
<rect x="951.2" y="72.8" width="1.7" height="1.5" fill="#f01c1c"/>
<rect x="952.2" y="73.2" width="1.7" height="1.7" fill="#e2d488"/>
<rect x="955.2" y="74.0" width="1.7" height="2.4" fill="#e2d488"/>
<rect x="957.2" y="76.2" width="1.7" height="1.7" fill="#2a82e8"/>
<rect x="958.2" y="75.7" width="1.7" height="1.4" fill="#2a82e8"/>
<rect x="959.2" y="75.3" width="1.7" height="3.9" fill="#2a82e8"/>
<rect x="960.2" y="77.8" width="1.7" height="2.9" fill="#f01c1c"/>
<rect x="961.2" y="79.1" width="1.7" height="7.1" fill="#2a82e8"/>
<rect x="962.2" y="80.4" width="1.7" height="2.3" fill="#e2d488"/>
<rect x="963.2" y="79.7" width="1.7" height="3.2" fill="#2a82e8"/></g>
<g clip-path="url(#k2)" stroke-width="2" stroke-linecap="round"><rect x="4.7" y="275.4" width="1.7" height="4.5" fill="#e2d488"/>
<rect x="5.7" y="274.5" width="1.7" height="3.6" fill="#2a82e8"/>
<rect x="7.7" y="276.5" width="1.7" height="2.0" fill="#f01c1c"/>
<rect x="10.7" y="277.8" width="1.7" height="1.0" fill="#e2d488"/>
<rect x="11.7" y="277.2" width="1.7" height="2.4" fill="#e2d488"/>
<rect x="12.7" y="276.4" width="1.7" height="3.5" fill="#e2d488"/>
<rect x="13.7" y="275.0" width="1.7" height="3.7" fill="#e2d488"/>
<rect x="14.7" y="274.1" width="1.7" height="2.6" fill="#f01c1c"/>
<rect x="15.7" y="274.4" width="1.7" height="2.3" fill="#f0f0f0"/>
<rect x="17.7" y="274.3" width="1.7" height="2.5" fill="#f01c1c"/>
<rect x="18.7" y="273.1" width="1.7" height="3.8" fill="#e2d488"/>
<rect x="19.7" y="271.3" width="1.7" height="2.8" fill="#f01c1c"/>
<rect x="20.7" y="268.3" width="1.7" height="4.6" fill="#f01c1c"/>
<rect x="22.7" y="266.8" width="1.7" height="2.7" fill="#e2d488"/>
<rect x="23.7" y="264.4" width="1.7" height="4.5" fill="#f01c1c"/>
<rect x="24.7" y="266.9" width="1.7" height="2.1" fill="#f01c1c"/>
<rect x="25.7" y="266.3" width="1.7" height="1.8" fill="#f01c1c"/>
<rect x="26.7" y="265.6" width="1.7" height="2.9" fill="#f01c1c"/>
<rect x="27.7" y="266.9" width="1.7" height="0.6" fill="#e2d488"/>
<rect x="28.7" y="265.8" width="1.7" height="2.8" fill="#f01c1c"/>
<rect x="29.7" y="263.5" width="1.7" height="3.3" fill="#e2d488"/>
<rect x="31.7" y="259.0" width="1.7" height="3.9" fill="#f01c1c"/>
<rect x="46.2" y="269.5" width="1.7" height="4.1" fill="#f01c1c"/>
<rect x="47.2" y="269.2" width="1.7" height="2.2" fill="#f0f0f0"/>
<rect x="48.2" y="269.5" width="1.7" height="3.0" fill="#e2d488"/>
<rect x="57.3" y="261.1" width="1.7" height="5.7" fill="#e2d488"/>
<rect x="58.3" y="265.3" width="1.7" height="4.8" fill="#e2d488"/>
<rect x="59.3" y="268.5" width="1.7" height="3.1" fill="#2a82e8"/>
<rect x="61.3" y="271.7" width="1.7" height="2.5" fill="#2a82e8"/>
<rect x="62.3" y="272.0" width="1.7" height="4.0" fill="#e2d488"/>
<rect x="63.3" y="273.7" width="1.7" height="3.9" fill="#e2d488"/>
<rect x="64.3" y="275.0" width="1.7" height="4.0" fill="#2a82e8"/>
<rect x="65.3" y="277.0" width="1.7" height="4.1" fill="#e2d488"/>
<rect x="66.3" y="279.6" width="1.7" height="5.1" fill="#2a82e8"/>
<rect x="68.3" y="284.8" width="1.7" height="4.1" fill="#2a82e8"/>
<rect x="69.3" y="287.7" width="1.7" height="6.3" fill="#e2d488"/>
<rect x="70.3" y="291.1" width="1.7" height="3.4" fill="#f01c1c"/>
<rect x="71.3" y="289.0" width="1.7" height="9.2" fill="#2a82e8"/>
<rect x="72.3" y="296.7" width="1.7" height="3.2" fill="#2a82e8"/>
<rect x="73.3" y="297.9" width="1.7" height="3.1" fill="#e2d488"/>
<rect x="74.3" y="300.3" width="1.7" height="2.7" fill="#f01c1c"/>
<rect x="76.3" y="284.5" width="1.7" height="12.9" fill="#e2d488"/>
<rect x="77.3" y="284.2" width="1.7" height="1.9" fill="#2a82e8"/>
<rect x="81.3" y="288.4" width="1.7" height="3.6" fill="#2a82e8"/>
<rect x="83.3" y="290.5" width="1.7" height="8.0" fill="#2a82e8"/>
<rect x="84.3" y="292.6" width="1.7" height="1.7" fill="#f01c1c"/>
<rect x="85.3" y="292.7" width="1.7" height="3.5" fill="#e2d488"/>
<rect x="86.3" y="294.3" width="1.7" height="4.2" fill="#e2d488"/>
<rect x="87.3" y="297.2" width="1.7" height="0.7" fill="#2a82e8"/>
<rect x="88.3" y="296.3" width="1.7" height="3.9" fill="#2a82e8"/>
<rect x="89.3" y="297.6" width="1.7" height="2.7" fill="#2a82e8"/>
<rect x="91.3" y="296.5" width="1.7" height="2.5" fill="#2a82e8"/>
<rect x="92.3" y="297.6" width="1.7" height="1.7" fill="#e2d488"/>
<rect x="93.3" y="298.5" width="1.7" height="1.0" fill="#2a82e8"/>
<rect x="94.3" y="297.1" width="1.7" height="2.4" fill="#2a82e8"/>
<rect x="96.3" y="297.6" width="1.7" height="2.1" fill="#f01c1c"/>
<rect x="97.3" y="296.0" width="1.7" height="3.0" fill="#f01c1c"/>
<rect x="99.3" y="292.5" width="1.7" height="3.3" fill="#e2d488"/>
<rect x="100.3" y="293.0" width="1.7" height="2.8" fill="#f01c1c"/>
<rect x="101.3" y="292.8" width="1.7" height="2.8" fill="#f01c1c"/>
<rect x="102.3" y="291.8" width="1.7" height="2.6" fill="#e2d488"/>
<rect x="104.3" y="290.1" width="1.7" height="1.2" fill="#e2d488"/>
<rect x="105.3" y="288.6" width="1.7" height="2.2" fill="#f01c1c"/>
<rect x="106.3" y="286.5" width="1.7" height="3.8" fill="#e2d488"/>
<rect x="108.3" y="286.5" width="1.7" height="2.0" fill="#f01c1c"/>
<rect x="109.3" y="284.5" width="1.7" height="4.3" fill="#f01c1c"/>
<rect x="110.3" y="284.4" width="1.7" height="2.2" fill="#e2d488"/>
<rect x="111.3" y="283.9" width="1.7" height="3.0" fill="#2a82e8"/>
<rect x="112.3" y="281.1" width="1.7" height="3.8" fill="#f01c1c"/>
<rect x="113.3" y="279.3" width="1.7" height="3.2" fill="#f01c1c"/>
<rect x="114.3" y="275.6" width="1.7" height="5.3" fill="#f01c1c"/>
<rect x="115.3" y="278.9" width="1.7" height="2.5" fill="#2a82e8"/>
<rect x="116.3" y="280.0" width="1.7" height="1.8" fill="#2a82e8"/>
<rect x="117.3" y="279.2" width="1.7" height="1.8" fill="#2a82e8"/>
<rect x="118.3" y="279.7" width="1.7" height="1.6" fill="#2a82e8"/>
<rect x="120.3" y="278.5" width="1.7" height="2.0" fill="#e2d488"/>
<rect x="121.3" y="273.1" width="1.7" height="8.3" fill="#e2d488"/>
<rect x="124.3" y="283.6" width="1.7" height="2.9" fill="#2a82e8"/>
<rect x="125.3" y="284.4" width="1.7" height="2.7" fill="#2a82e8"/>
<rect x="126.3" y="284.9" width="1.7" height="4.6" fill="#2a82e8"/>
<rect x="127.3" y="286.6" width="1.7" height="2.8" fill="#e2d488"/>
<rect x="130.3" y="285.4" width="1.7" height="2.1" fill="#e2d488"/>
<rect x="131.3" y="284.7" width="1.7" height="3.5" fill="#2a82e8"/>
<rect x="132.3" y="285.1" width="1.7" height="1.7" fill="#e2d488"/>
<rect x="133.3" y="284.5" width="1.7" height="1.7" fill="#e2d488"/>
<rect x="134.3" y="284.4" width="1.7" height="3.1" fill="#e2d488"/>
<rect x="135.3" y="284.5" width="1.7" height="2.2" fill="#e2d488"/>
<rect x="137.3" y="280.6" width="1.7" height="3.9" fill="#2a82e8"/>
<rect x="138.3" y="280.7" width="1.7" height="2.5" fill="#e2d488"/>
<rect x="139.3" y="280.3" width="1.7" height="3.2" fill="#e2d488"/>
<rect x="140.3" y="279.0" width="1.7" height="3.1" fill="#f01c1c"/>
<rect x="141.3" y="279.5" width="1.7" height="1.8" fill="#e2d488"/>
<rect x="142.3" y="279.4" width="1.7" height="1.9" fill="#f01c1c"/>
<rect x="145.3" y="278.4" width="1.7" height="2.1" fill="#e2d488"/>
<rect x="146.3" y="278.3" width="1.7" height="3.0" fill="#f0f0f0"/>
<rect x="147.3" y="278.5" width="1.7" height="1.0" fill="#f01c1c"/>
<rect x="148.3" y="277.9" width="1.7" height="3.1" fill="#f01c1c"/>
<rect x="149.3" y="278.9" width="1.7" height="1.6" fill="#f01c1c"/>
<rect x="150.3" y="272.0" width="1.7" height="9.4" fill="#f01c1c"/>
<rect x="151.3" y="274.9" width="1.7" height="5.3" fill="#2a82e8"/>
<rect x="154.3" y="271.3" width="1.7" height="3.7" fill="#2a82e8"/>
<rect x="155.3" y="270.7" width="1.7" height="2.5" fill="#f01c1c"/>
<rect x="156.3" y="267.9" width="1.7" height="4.3" fill="#e2d488"/>
<rect x="157.3" y="264.0" width="1.7" height="5.6" fill="#2a82e8"/>
<rect x="158.3" y="261.1" width="1.7" height="5.1" fill="#f01c1c"/>
<rect x="159.3" y="261.0" width="1.7" height="2.2" fill="#e2d488"/>
<rect x="162.3" y="256.8" width="1.7" height="4.0" fill="#e2d488"/>
<rect x="163.3" y="259.4" width="1.7" height="5.2" fill="#2a82e8"/>
<rect x="165.3" y="266.2" width="1.7" height="4.5" fill="#e2d488"/>
<rect x="166.3" y="268.6" width="1.7" height="2.3" fill="#f01c1c"/>
<rect x="167.3" y="267.3" width="1.7" height="8.6" fill="#f01c1c"/>
<rect x="168.3" y="265.3" width="1.7" height="3.8" fill="#f01c1c"/>
<rect x="170.3" y="264.0" width="1.7" height="2.5" fill="#f01c1c"/>
<rect x="171.3" y="264.2" width="1.7" height="1.6" fill="#e2d488"/>
<rect x="172.3" y="261.7" width="1.7" height="4.6" fill="#f01c1c"/>
<rect x="173.3" y="261.6" width="1.7" height="7.4" fill="#e2d488"/>
<rect x="174.3" y="261.8" width="1.7" height="1.9" fill="#e2d488"/>
<rect x="176.3" y="258.5" width="1.7" height="3.6" fill="#e2d488"/>
<rect x="177.3" y="256.9" width="1.7" height="3.3" fill="#e2d488"/>
<rect x="179.3" y="254.9" width="1.7" height="2.5" fill="#f01c1c"/>
<rect x="180.3" y="255.0" width="1.7" height="3.1" fill="#2a82e8"/>
<rect x="181.3" y="256.5" width="1.7" height="1.8" fill="#e2d488"/>
<rect x="183.3" y="256.9" width="1.7" height="2.0" fill="#e2d488"/>
<rect x="184.3" y="255.4" width="1.7" height="2.9" fill="#f01c1c"/>
<rect x="185.3" y="255.7" width="1.7" height="3.0" fill="#2a82e8"/>
<rect x="186.3" y="256.4" width="1.7" height="2.1" fill="#e2d488"/>
<rect x="187.3" y="256.7" width="1.7" height="1.2" fill="#f01c1c"/>
<rect x="188.3" y="254.0" width="1.7" height="3.4" fill="#2a82e8"/>
<rect x="189.3" y="254.2" width="1.7" height="2.4" fill="#f01c1c"/>
<rect x="190.3" y="253.2" width="1.7" height="2.2" fill="#e2d488"/>
<rect x="191.3" y="252.2" width="1.7" height="2.1" fill="#f01c1c"/>
<rect x="194.3" y="249.7" width="1.7" height="2.6" fill="#f01c1c"/>
<rect x="195.3" y="249.0" width="1.7" height="2.7" fill="#2a82e8"/>
<rect x="196.3" y="249.9" width="1.7" height="4.0" fill="#2a82e8"/>
<rect x="197.3" y="251.5" width="1.7" height="2.9" fill="#e2d488"/>
<rect x="198.3" y="253.7" width="1.7" height="2.1" fill="#2a82e8"/>
<rect x="199.3" y="254.8" width="1.7" height="4.1" fill="#2a82e8"/>
<rect x="201.3" y="258.4" width="1.7" height="3.8" fill="#2a82e8"/>
<rect x="202.3" y="254.8" width="1.7" height="6.6" fill="#e2d488"/>
<rect x="204.3" y="260.9" width="1.7" height="2.2" fill="#2a82e8"/>
<rect x="205.3" y="261.1" width="1.7" height="2.4" fill="#f01c1c"/>
<rect x="209.3" y="267.4" width="1.7" height="1.8" fill="#f01c1c"/>
<rect x="211.3" y="263.0" width="1.7" height="3.4" fill="#f01c1c"/>
<rect x="212.3" y="262.6" width="1.7" height="2.5" fill="#e2d488"/>
<rect x="213.3" y="262.2" width="1.7" height="3.1" fill="#e2d488"/>
<rect x="214.3" y="261.1" width="1.7" height="3.8" fill="#e2d488"/>
<rect x="215.3" y="262.0" width="1.7" height="1.5" fill="#2a82e8"/>
<rect x="216.3" y="262.2" width="1.7" height="2.9" fill="#f01c1c"/>
<rect x="217.3" y="263.5" width="1.7" height="1.7" fill="#2a82e8"/>
<rect x="219.3" y="263.9" width="1.7" height="1.4" fill="#2a82e8"/>
<rect x="220.3" y="264.3" width="1.7" height="1.9" fill="#e2d488"/>
<rect x="224.3" y="264.6" width="1.7" height="3.1" fill="#2a82e8"/>
<rect x="225.3" y="265.4" width="1.7" height="2.0" fill="#2a82e8"/>
<rect x="226.3" y="266.4" width="1.7" height="7.1" fill="#e2d488"/>
<rect x="227.3" y="268.8" width="1.7" height="1.4" fill="#2a82e8"/>
<rect x="228.3" y="268.9" width="1.7" height="2.9" fill="#e2d488"/>
<rect x="229.3" y="269.5" width="1.7" height="1.3" fill="#2a82e8"/>
<rect x="230.3" y="268.6" width="1.7" height="2.8" fill="#e2d488"/>
<rect x="231.3" y="269.2" width="1.7" height="2.2" fill="#e2d488"/>
<rect x="232.3" y="268.6" width="1.7" height="2.0" fill="#f01c1c"/>
<rect x="233.3" y="268.9" width="1.7" height="5.5" fill="#2a82e8"/>
<rect x="234.3" y="267.6" width="1.7" height="3.0" fill="#2a82e8"/>
<rect x="235.3" y="266.1" width="1.7" height="4.0" fill="#f01c1c"/>
<rect x="236.3" y="265.8" width="1.7" height="9.1" fill="#e2d488"/>
<rect x="239.3" y="268.4" width="1.7" height="3.3" fill="#f01c1c"/>
<rect x="240.3" y="268.6" width="1.7" height="3.3" fill="#f0f0f0"/>
<rect x="243.3" y="265.1" width="1.7" height="4.0" fill="#e2d488"/>
<rect x="244.3" y="264.9" width="1.7" height="2.5" fill="#2a82e8"/>
<rect x="245.3" y="265.2" width="1.7" height="2.1" fill="#2a82e8"/>
<rect x="247.3" y="267.1" width="1.7" height="3.9" fill="#f01c1c"/>
<rect x="248.3" y="265.6" width="1.7" height="6.1" fill="#e2d488"/>
<rect x="252.3" y="274.9" width="1.7" height="3.3" fill="#e2d488"/>
<rect x="253.3" y="275.4" width="1.7" height="3.3" fill="#2a82e8"/>
<rect x="254.3" y="276.7" width="1.7" height="2.3" fill="#e2d488"/>
<rect x="257.3" y="276.7" width="1.7" height="3.3" fill="#2a82e8"/>
<rect x="258.3" y="278.6" width="1.7" height="3.0" fill="#e2d488"/>
<rect x="259.3" y="280.0" width="1.7" height="9.2" fill="#2a82e8"/>
<rect x="261.3" y="282.0" width="1.7" height="3.7" fill="#f01c1c"/>
<rect x="262.3" y="284.6" width="1.7" height="2.4" fill="#f01c1c"/>
<rect x="263.3" y="285.1" width="1.7" height="3.3" fill="#2a82e8"/>
<rect x="264.3" y="286.6" width="1.7" height="3.9" fill="#2a82e8"/>
<rect x="265.3" y="289.2" width="1.7" height="3.5" fill="#2a82e8"/>
<rect x="266.3" y="290.4" width="1.7" height="3.5" fill="#2a82e8"/>
<rect x="268.3" y="292.2" width="1.7" height="3.2" fill="#f01c1c"/>
<rect x="269.3" y="292.9" width="1.7" height="2.6" fill="#e2d488"/>
<rect x="271.3" y="290.2" width="1.7" height="6.3" fill="#e2d488"/>
<rect x="272.3" y="295.1" width="1.7" height="1.9" fill="#2a82e8"/>
<rect x="273.3" y="295.1" width="1.7" height="1.9" fill="#2a82e8"/>
<rect x="274.3" y="295.1" width="1.7" height="1.7" fill="#e2d488"/>
<rect x="276.3" y="294.7" width="1.7" height="3.5" fill="#f01c1c"/>
<rect x="277.3" y="294.4" width="1.7" height="2.2" fill="#f01c1c"/>
<rect x="278.3" y="291.3" width="1.7" height="4.6" fill="#e2d488"/>
<rect x="279.3" y="291.6" width="1.7" height="2.1" fill="#f01c1c"/>
<rect x="281.3" y="290.9" width="1.7" height="7.3" fill="#e2d488"/>
<rect x="282.3" y="291.1" width="1.7" height="2.2" fill="#2a82e8"/>
<rect x="283.3" y="292.1" width="1.7" height="2.1" fill="#2a82e8"/>
<rect x="285.3" y="292.8" width="1.7" height="2.1" fill="#2a82e8"/>
<rect x="286.3" y="292.7" width="1.7" height="3.6" fill="#2a82e8"/>
<rect x="287.3" y="294.4" width="1.7" height="4.0" fill="#e2d488"/>
<rect x="288.3" y="297.1" width="1.7" height="2.3" fill="#f01c1c"/>
<rect x="289.3" y="297.8" width="1.7" height="3.3" fill="#e2d488"/>
<rect x="290.3" y="299.2" width="1.7" height="2.7" fill="#e2d488"/>
<rect x="292.3" y="299.2" width="1.7" height="2.3" fill="#f01c1c"/>
<rect x="293.3" y="297.7" width="1.7" height="2.8" fill="#e2d488"/>
<rect x="294.3" y="295.9" width="1.7" height="3.6" fill="#e2d488"/>
<rect x="298.3" y="293.5" width="1.7" height="1.7" fill="#f01c1c"/>
<rect x="299.3" y="291.9" width="1.7" height="4.3" fill="#f01c1c"/>
<rect x="300.3" y="291.9" width="1.7" height="1.9" fill="#e2d488"/>
<rect x="302.3" y="289.4" width="1.7" height="2.7" fill="#e2d488"/>
<rect x="303.3" y="289.3" width="1.7" height="2.8" fill="#f01c1c"/>
<rect x="304.3" y="288.9" width="1.7" height="2.4" fill="#e2d488"/>
<rect x="305.3" y="287.5" width="1.7" height="2.6" fill="#2a82e8"/>
<rect x="306.3" y="285.0" width="1.7" height="3.9" fill="#e2d488"/>
<rect x="307.3" y="285.6" width="1.7" height="1.5" fill="#e2d488"/>
<rect x="309.3" y="285.8" width="1.7" height="3.0" fill="#e2d488"/>
<rect x="310.3" y="286.4" width="1.7" height="2.1" fill="#f01c1c"/>
<rect x="312.3" y="283.6" width="1.7" height="5.3" fill="#f01c1c"/>
<rect x="313.3" y="280.8" width="1.7" height="4.1" fill="#2a82e8"/>
<rect x="316.3" y="282.3" width="1.7" height="1.5" fill="#e2d488"/>
<rect x="317.3" y="282.0" width="1.7" height="1.6" fill="#2a82e8"/>
<rect x="318.3" y="282.1" width="1.7" height="2.0" fill="#2a82e8"/>
<rect x="319.3" y="281.2" width="1.7" height="2.2" fill="#e2d488"/>
<rect x="320.3" y="281.8" width="1.7" height="4.4" fill="#2a82e8"/>
<rect x="321.3" y="283.8" width="1.7" height="2.1" fill="#e2d488"/>
<rect x="323.3" y="285.3" width="1.7" height="1.7" fill="#f01c1c"/>
<rect x="324.3" y="285.2" width="1.7" height="2.2" fill="#e2d488"/>
<rect x="326.3" y="286.6" width="1.7" height="2.8" fill="#2a82e8"/>
<rect x="328.3" y="285.4" width="1.7" height="2.9" fill="#e2d488"/>
<rect x="330.3" y="285.4" width="1.7" height="3.4" fill="#f01c1c"/>
<rect x="331.3" y="286.1" width="1.7" height="3.3" fill="#2a82e8"/>
<rect x="332.3" y="288.2" width="1.7" height="3.4" fill="#f01c1c"/>
<rect x="333.3" y="287.9" width="1.7" height="3.1" fill="#2a82e8"/>
<rect x="334.3" y="288.9" width="1.7" height="1.4" fill="#2a82e8"/>
<rect x="335.3" y="288.0" width="1.7" height="1.4" fill="#2a82e8"/>
<rect x="336.3" y="287.6" width="1.7" height="2.2" fill="#f01c1c"/>
<rect x="337.3" y="286.5" width="1.7" height="3.8" fill="#e2d488"/>
<rect x="339.3" y="290.6" width="1.7" height="3.2" fill="#2a82e8"/>
<rect x="340.3" y="292.3" width="1.7" height="2.9" fill="#f01c1c"/>
<rect x="341.3" y="293.2" width="1.7" height="1.8" fill="#2a82e8"/>
<rect x="342.3" y="293.7" width="1.7" height="2.9" fill="#e2d488"/>
<rect x="343.3" y="294.2" width="1.7" height="1.3" fill="#e2d488"/>
<rect x="344.3" y="294.3" width="1.7" height="1.9" fill="#2a82e8"/>
<rect x="345.3" y="294.1" width="1.7" height="3.4" fill="#f01c1c"/>
<rect x="346.3" y="294.9" width="1.7" height="3.5" fill="#e2d488"/>
<rect x="347.3" y="296.9" width="1.7" height="3.0" fill="#2a82e8"/>
<rect x="348.3" y="298.9" width="1.7" height="1.5" fill="#2a82e8"/>
<rect x="349.3" y="298.2" width="1.7" height="3.1" fill="#2a82e8"/>
<rect x="350.3" y="295.7" width="1.7" height="5.2" fill="#2a82e8"/>
<rect x="351.3" y="298.2" width="1.7" height="2.9" fill="#e2d488"/>
<rect x="352.3" y="298.3" width="1.7" height="3.8" fill="#e2d488"/>
<rect x="353.3" y="300.5" width="1.7" height="8.9" fill="#2a82e8"/>
<rect x="355.3" y="304.6" width="1.7" height="3.6" fill="#2a82e8"/>
<rect x="356.3" y="306.3" width="1.7" height="3.7" fill="#2a82e8"/>
<rect x="358.3" y="310.5" width="1.7" height="7.4" fill="#e2d488"/>
<rect x="359.3" y="313.1" width="1.7" height="2.7" fill="#f01c1c"/>
<rect x="360.3" y="312.9" width="1.7" height="3.4" fill="#e2d488"/>
<rect x="361.3" y="311.4" width="1.7" height="3.9" fill="#f01c1c"/>
<rect x="363.3" y="306.9" width="1.7" height="4.2" fill="#f01c1c"/>
<rect x="364.3" y="302.6" width="1.7" height="5.9" fill="#f01c1c"/>
<rect x="365.3" y="301.6" width="1.7" height="3.7" fill="#f01c1c"/>
<rect x="368.3" y="295.3" width="1.7" height="4.3" fill="#f01c1c"/>
<rect x="369.3" y="294.5" width="1.7" height="2.9" fill="#2a82e8"/>
<rect x="370.3" y="294.3" width="1.7" height="4.7" fill="#e2d488"/>
<rect x="371.3" y="296.5" width="1.7" height="8.0" fill="#2a82e8"/>
<rect x="372.3" y="303.5" width="1.7" height="8.1" fill="#f01c1c"/>
<rect x="373.3" y="308.8" width="1.7" height="7.9" fill="#2a82e8"/>
<rect x="374.3" y="312.0" width="1.7" height="5.0" fill="#f01c1c"/>
<rect x="375.3" y="306.3" width="1.7" height="7.1" fill="#f01c1c"/>
<rect x="376.3" y="303.1" width="1.7" height="4.3" fill="#f01c1c"/>
<rect x="377.3" y="298.3" width="1.7" height="5.8" fill="#f01c1c"/>
<rect x="378.3" y="295.6" width="1.7" height="4.2" fill="#f01c1c"/>
<rect x="379.3" y="291.2" width="1.7" height="6.0" fill="#2a82e8"/>
<rect x="380.3" y="291.1" width="1.7" height="1.9" fill="#f01c1c"/>
<rect x="381.3" y="292.1" width="1.7" height="1.1" fill="#e2d488"/>
<rect x="382.3" y="292.7" width="1.7" height="2.0" fill="#e2d488"/>
<rect x="384.3" y="290.7" width="1.7" height="2.4" fill="#f01c1c"/>
<rect x="385.3" y="290.8" width="1.7" height="2.5" fill="#f01c1c"/>
<rect x="386.3" y="290.1" width="1.7" height="2.7" fill="#2a82e8"/>
<rect x="387.3" y="290.4" width="1.7" height="2.4" fill="#f01c1c"/>
<rect x="389.3" y="290.4" width="1.7" height="2.7" fill="#e2d488"/>
<rect x="390.3" y="291.4" width="1.7" height="2.2" fill="#2a82e8"/>
<rect x="391.3" y="290.3" width="1.7" height="2.7" fill="#f01c1c"/>
<rect x="392.3" y="288.3" width="1.7" height="4.4" fill="#2a82e8"/>
<rect x="393.3" y="289.3" width="1.7" height="1.5" fill="#f0f0f0"/>
<rect x="394.3" y="289.2" width="1.7" height="3.1" fill="#f01c1c"/>
<rect x="395.3" y="290.3" width="1.7" height="1.9" fill="#e2d488"/>
<rect x="396.3" y="290.8" width="1.7" height="1.3" fill="#f01c1c"/>
<rect x="397.3" y="289.8" width="1.7" height="2.3" fill="#f01c1c"/>
<rect x="398.3" y="288.3" width="1.7" height="3.3" fill="#e2d488"/>
<rect x="399.3" y="283.8" width="1.7" height="5.2" fill="#e2d488"/>
<rect x="400.3" y="287.0" width="1.7" height="4.7" fill="#f01c1c"/>
<rect x="402.3" y="288.5" width="1.7" height="1.9" fill="#e2d488"/>
<rect x="403.3" y="288.0" width="1.7" height="2.9" fill="#e2d488"/>
<rect x="407.3" y="298.3" width="1.7" height="4.3" fill="#f01c1c"/>
<rect x="408.3" y="297.2" width="1.7" height="5.1" fill="#2a82e8"/>
<rect x="409.3" y="294.8" width="1.7" height="4.2" fill="#e2d488"/>
<rect x="410.3" y="294.3" width="1.7" height="3.2" fill="#2a82e8"/>
<rect x="411.3" y="294.1" width="1.7" height="2.4" fill="#e2d488"/>
<rect x="412.3" y="294.0" width="1.7" height="1.8" fill="#f01c1c"/>
<rect x="413.3" y="292.6" width="1.7" height="3.8" fill="#e2d488"/>
<rect x="414.3" y="291.0" width="1.7" height="3.7" fill="#2a82e8"/>
<rect x="415.3" y="291.3" width="1.7" height="2.2" fill="#e2d488"/>
<rect x="417.3" y="286.1" width="1.7" height="7.8" fill="#f01c1c"/>
<rect x="419.3" y="291.1" width="1.7" height="3.9" fill="#2a82e8"/>
<rect x="420.3" y="293.1" width="1.7" height="2.3" fill="#e2d488"/>
<rect x="421.3" y="294.5" width="1.7" height="3.1" fill="#e2d488"/>
<rect x="422.3" y="295.3" width="1.7" height="2.7" fill="#e2d488"/>
<rect x="423.3" y="291.3" width="1.7" height="7.0" fill="#e2d488"/>
<rect x="424.3" y="295.7" width="1.7" height="3.2" fill="#2a82e8"/>
<rect x="426.3" y="298.5" width="1.7" height="5.8" fill="#2a82e8"/>
<rect x="427.3" y="301.5" width="1.7" height="7.6" fill="#e2d488"/>
<rect x="428.3" y="304.1" width="1.7" height="4.8" fill="#2a82e8"/>
<rect x="431.3" y="311.4" width="1.7" height="2.5" fill="#e2d488"/>
<rect x="436.3" y="321.6" width="1.7" height="3.6" fill="#2a82e8"/>
<rect x="438.3" y="323.3" width="1.7" height="3.0" fill="#2a82e8"/>
<rect x="442.3" y="329.4" width="1.7" height="4.4" fill="#2a82e8"/>
<rect x="443.3" y="331.9" width="1.7" height="8.5" fill="#2a82e8"/>
<rect x="444.3" y="338.0" width="1.7" height="6.7" fill="#2a82e8"/>
<rect x="446.3" y="347.8" width="1.7" height="6.9" fill="#2a82e8"/>
<rect x="447.3" y="353.2" width="1.7" height="7.4" fill="#2a82e8"/>
<rect x="448.3" y="358.7" width="1.7" height="2.1" fill="#e2d488"/>
<rect x="449.3" y="359.5" width="1.7" height="3.9" fill="#f01c1c"/>
<rect x="450.3" y="362.2" width="1.7" height="1.0" fill="#f01c1c"/>
<rect x="451.3" y="361.7" width="1.7" height="2.4" fill="#2a82e8"/>
<rect x="452.3" y="362.4" width="1.7" height="4.4" fill="#2a82e8"/>
<rect x="453.3" y="364.2" width="1.7" height="1.8" fill="#e2d488"/>
<rect x="454.3" y="360.8" width="1.7" height="4.4" fill="#e2d488"/>
<rect x="456.3" y="358.2" width="1.7" height="2.4" fill="#2a82e8"/>
<rect x="457.3" y="356.6" width="1.7" height="3.6" fill="#e2d488"/>
<rect x="458.3" y="356.3" width="1.7" height="1.5" fill="#f01c1c"/>
<rect x="459.3" y="354.4" width="1.7" height="4.3" fill="#f01c1c"/>
<rect x="460.3" y="352.3" width="1.7" height="4.3" fill="#2a82e8"/>
<rect x="461.3" y="351.7" width="1.7" height="2.1" fill="#f01c1c"/>
<rect x="462.3" y="348.5" width="1.7" height="5.3" fill="#f01c1c"/>
<rect x="464.3" y="345.1" width="1.7" height="2.7" fill="#e2d488"/>
<rect x="466.3" y="346.2" width="1.7" height="2.4" fill="#e2d488"/>
<rect x="467.3" y="347.3" width="1.7" height="2.6" fill="#2a82e8"/>
<rect x="468.3" y="348.0" width="1.7" height="2.6" fill="#e2d488"/>
<rect x="469.3" y="347.7" width="1.7" height="2.8" fill="#e2d488"/>
<rect x="471.3" y="348.8" width="1.7" height="2.6" fill="#2a82e8"/>
<rect x="472.3" y="349.1" width="1.7" height="0.9" fill="#e2d488"/>
<rect x="473.3" y="344.2" width="1.7" height="7.0" fill="#f01c1c"/>
<rect x="474.3" y="346.7" width="1.7" height="2.4" fill="#f01c1c"/>
<rect x="476.3" y="345.2" width="1.7" height="1.2" fill="#f01c1c"/>
<rect x="477.3" y="344.3" width="1.7" height="1.8" fill="#f01c1c"/>
<rect x="479.3" y="340.8" width="1.7" height="5.0" fill="#2a82e8"/>
<rect x="480.3" y="338.2" width="1.7" height="4.4" fill="#e2d488"/>
<rect x="481.3" y="338.7" width="1.7" height="3.9" fill="#f01c1c"/>
<rect x="482.3" y="340.7" width="1.7" height="4.4" fill="#e2d488"/>
<rect x="483.3" y="344.0" width="1.7" height="3.1" fill="#2a82e8"/>
<rect x="484.3" y="345.5" width="1.7" height="3.8" fill="#e2d488"/>
<rect x="485.3" y="347.3" width="1.7" height="3.9" fill="#e2d488"/>
<rect x="486.3" y="349.5" width="1.7" height="1.6" fill="#2a82e8"/>
<rect x="488.3" y="350.9" width="1.7" height="3.5" fill="#f01c1c"/>
<rect x="489.3" y="352.5" width="1.7" height="2.6" fill="#e2d488"/>
<rect x="490.3" y="351.6" width="1.7" height="2.2" fill="#e2d488"/>
<rect x="491.3" y="351.5" width="1.7" height="0.9" fill="#f01c1c"/>
<rect x="492.3" y="350.7" width="1.7" height="1.8" fill="#f01c1c"/>
<rect x="493.3" y="348.9" width="1.7" height="3.8" fill="#2a82e8"/>
<rect x="495.3" y="344.5" width="1.7" height="4.0" fill="#f01c1c"/>
<rect x="496.3" y="344.1" width="1.7" height="2.5" fill="#f01c1c"/>
<rect x="497.3" y="343.4" width="1.7" height="2.0" fill="#f01c1c"/>
<rect x="498.3" y="342.7" width="1.7" height="2.1" fill="#2a82e8"/>
<rect x="499.3" y="343.1" width="1.7" height="3.6" fill="#2a82e8"/>
<rect x="500.3" y="344.2" width="1.7" height="3.3" fill="#f01c1c"/>
<rect x="501.3" y="345.3" width="1.7" height="3.3" fill="#e2d488"/>
<rect x="502.3" y="345.7" width="1.7" height="2.9" fill="#f01c1c"/>
<rect x="503.3" y="346.9" width="1.7" height="2.5" fill="#2a82e8"/>
<rect x="504.3" y="342.8" width="1.7" height="7.6" fill="#f01c1c"/>
<rect x="505.3" y="349.0" width="1.7" height="1.6" fill="#2a82e8"/>
<rect x="506.3" y="348.4" width="1.7" height="2.7" fill="#2a82e8"/>
<rect x="507.3" y="349.2" width="1.7" height="3.5" fill="#2a82e8"/>
<rect x="508.3" y="350.8" width="1.7" height="4.6" fill="#2a82e8"/>
<rect x="509.3" y="353.6" width="1.7" height="1.6" fill="#2a82e8"/>
<rect x="510.3" y="354.2" width="1.7" height="2.9" fill="#e2d488"/>
<rect x="511.3" y="354.8" width="1.7" height="2.2" fill="#2a82e8"/>
<rect x="512.3" y="355.0" width="1.7" height="4.6" fill="#2a82e8"/>
<rect x="513.3" y="357.6" width="1.7" height="2.7" fill="#e2d488"/>
<rect x="514.3" y="358.7" width="1.7" height="2.1" fill="#f01c1c"/>
<rect x="515.3" y="356.1" width="1.7" height="4.1" fill="#e2d488"/>
<rect x="516.3" y="356.5" width="1.7" height="1.2" fill="#e2d488"/>
<rect x="517.3" y="355.3" width="1.7" height="2.2" fill="#e2d488"/>
<rect x="518.3" y="355.0" width="1.7" height="2.0" fill="#e2d488"/>
<rect x="519.3" y="355.0" width="1.7" height="1.6" fill="#e2d488"/>
<rect x="520.3" y="353.9" width="1.7" height="2.4" fill="#f01c1c"/>
<rect x="521.3" y="354.0" width="1.7" height="1.3" fill="#2a82e8"/>
<rect x="523.3" y="351.9" width="1.7" height="2.8" fill="#f01c1c"/>
<rect x="524.3" y="352.1" width="1.7" height="1.1" fill="#f01c1c"/>
<rect x="525.3" y="350.8" width="1.7" height="2.5" fill="#e2d488"/>
<rect x="526.3" y="350.5" width="1.7" height="2.6" fill="#f01c1c"/>
<rect x="527.3" y="350.5" width="1.7" height="2.5" fill="#2a82e8"/>
<rect x="529.3" y="350.5" width="1.7" height="1.8" fill="#e2d488"/>
<rect x="531.3" y="346.8" width="1.7" height="3.1" fill="#f01c1c"/>
<rect x="533.3" y="343.6" width="1.7" height="2.4" fill="#e2d488"/>
<rect x="534.3" y="343.3" width="1.7" height="1.8" fill="#2a82e8"/>
<rect x="536.3" y="341.3" width="1.7" height="3.5" fill="#f01c1c"/>
<rect x="538.3" y="339.2" width="1.7" height="4.8" fill="#f01c1c"/>
<rect x="539.3" y="339.5" width="1.7" height="1.6" fill="#e2d488"/>
<rect x="540.3" y="338.5" width="1.7" height="2.7" fill="#2a82e8"/>
<rect x="541.3" y="337.8" width="1.7" height="2.6" fill="#f01c1c"/>
<rect x="542.3" y="336.9" width="1.7" height="2.9" fill="#e2d488"/>
<rect x="543.3" y="335.3" width="1.7" height="3.2" fill="#e2d488"/>
<rect x="544.3" y="328.5" width="1.7" height="8.3" fill="#f01c1c"/>
<rect x="545.3" y="332.2" width="1.7" height="3.1" fill="#f01c1c"/>
<rect x="546.3" y="331.9" width="1.7" height="2.0" fill="#e2d488"/>
<rect x="548.3" y="325.6" width="1.7" height="4.5" fill="#f01c1c"/>
<rect x="549.3" y="325.0" width="1.7" height="2.7" fill="#f01c1c"/>
<rect x="550.3" y="322.4" width="1.7" height="4.1" fill="#f01c1c"/>
<rect x="551.3" y="322.5" width="1.7" height="2.2" fill="#e2d488"/>
<rect x="552.3" y="321.6" width="1.7" height="2.6" fill="#e2d488"/>
<rect x="553.3" y="321.4" width="1.7" height="2.1" fill="#f01c1c"/>
<rect x="554.3" y="322.0" width="1.7" height="3.6" fill="#f01c1c"/>
<rect x="555.3" y="325.0" width="1.7" height="1.8" fill="#e2d488"/>
<rect x="558.3" y="326.4" width="1.7" height="2.1" fill="#e2d488"/>
<rect x="560.3" y="327.4" width="1.7" height="1.4" fill="#f01c1c"/>
<rect x="561.3" y="327.1" width="1.7" height="3.1" fill="#2a82e8"/>
<rect x="563.3" y="330.2" width="1.7" height="3.3" fill="#e2d488"/>
<rect x="564.3" y="331.3" width="1.7" height="2.8" fill="#e2d488"/>
<rect x="565.3" y="332.2" width="1.7" height="3.6" fill="#2a82e8"/>
<rect x="567.3" y="335.6" width="1.7" height="2.5" fill="#f01c1c"/>
<rect x="568.3" y="334.2" width="1.7" height="4.5" fill="#e2d488"/>
<rect x="569.3" y="331.6" width="1.7" height="4.5" fill="#f01c1c"/>
<rect x="570.3" y="331.0" width="1.7" height="2.5" fill="#2a82e8"/>
<rect x="571.3" y="330.1" width="1.7" height="2.9" fill="#2a82e8"/>
<rect x="572.3" y="329.7" width="1.7" height="7.8" fill="#f01c1c"/>
<rect x="574.3" y="327.0" width="1.7" height="1.8" fill="#e2d488"/>
<rect x="576.3" y="328.5" width="1.7" height="2.7" fill="#e2d488"/>
<rect x="578.3" y="327.9" width="1.7" height="2.5" fill="#e2d488"/>
<rect x="579.3" y="327.0" width="1.7" height="2.9" fill="#f01c1c"/>
<rect x="580.3" y="326.2" width="1.7" height="3.0" fill="#e2d488"/>
<rect x="581.3" y="319.8" width="1.7" height="9.1" fill="#f01c1c"/>
<rect x="585.3" y="327.2" width="1.7" height="7.9" fill="#2a82e8"/>
<rect x="587.3" y="331.7" width="1.7" height="4.6" fill="#2a82e8"/>
<rect x="589.3" y="328.5" width="1.7" height="5.2" fill="#f01c1c"/>
<rect x="590.3" y="324.7" width="1.7" height="9.6" fill="#2a82e8"/>
<rect x="591.3" y="321.1" width="1.7" height="5.5" fill="#f01c1c"/>
<rect x="592.3" y="316.1" width="1.7" height="7.0" fill="#e2d488"/>
<rect x="594.3" y="311.5" width="1.7" height="3.6" fill="#e2d488"/>
<rect x="595.3" y="314.0" width="1.7" height="3.0" fill="#e2d488"/>
<rect x="596.3" y="315.8" width="1.7" height="4.3" fill="#e2d488"/>
<rect x="597.3" y="317.8" width="1.7" height="3.5" fill="#e2d488"/>
<rect x="598.3" y="320.4" width="1.7" height="3.8" fill="#f0f0f0"/>
<rect x="600.3" y="324.0" width="1.7" height="4.3" fill="#f01c1c"/>
<rect x="601.3" y="325.7" width="1.7" height="7.2" fill="#2a82e8"/>
<rect x="602.3" y="331.7" width="1.7" height="7.0" fill="#2a82e8"/>
<rect x="603.3" y="336.3" width="1.7" height="13.6" fill="#2a82e8"/>
<rect x="604.3" y="342.8" width="1.7" height="7.6" fill="#e2d488"/>
<rect x="606.3" y="351.0" width="1.7" height="2.0" fill="#2a82e8"/>
<rect x="607.3" y="351.3" width="1.7" height="1.7" fill="#e2d488"/>
<rect x="608.3" y="350.5" width="1.7" height="3.7" fill="#2a82e8"/>
<rect x="609.3" y="353.1" width="1.7" height="5.7" fill="#e2d488"/>
<rect x="610.3" y="356.1" width="1.7" height="6.4" fill="#e2d488"/>
<rect x="613.3" y="369.8" width="1.7" height="5.6" fill="#2a82e8"/>
<rect x="614.3" y="374.5" width="1.7" height="7.8" fill="#2a82e8"/>
<rect x="616.3" y="374.7" width="1.7" height="13.7" fill="#e2d488"/>
<rect x="617.3" y="367.2" width="1.7" height="12.3" fill="#f01c1c"/>
<rect x="618.3" y="361.0" width="1.7" height="11.0" fill="#2a82e8"/>
<rect x="619.3" y="354.9" width="1.7" height="7.3" fill="#f01c1c"/>
<rect x="620.3" y="354.3" width="1.7" height="5.3" fill="#2a82e8"/>
<rect x="621.3" y="358.5" width="1.7" height="4.6" fill="#2a82e8"/>
<rect x="622.3" y="354.9" width="1.7" height="9.3" fill="#2a82e8"/>
<rect x="623.3" y="362.0" width="1.7" height="1.9" fill="#2a82e8"/>
<rect x="624.3" y="362.6" width="1.7" height="2.7" fill="#e2d488"/>
<rect x="625.3" y="362.2" width="1.7" height="2.2" fill="#f01c1c"/>
<rect x="626.3" y="359.4" width="1.7" height="4.7" fill="#f01c1c"/>
<rect x="627.3" y="357.7" width="1.7" height="3.5" fill="#e2d488"/>
<rect x="628.3" y="355.6" width="1.7" height="4.0" fill="#e2d488"/>
<rect x="629.3" y="356.4" width="1.7" height="8.1" fill="#2a82e8"/>
<rect x="630.3" y="356.2" width="1.7" height="1.9" fill="#f01c1c"/>
<rect x="631.3" y="352.9" width="1.7" height="5.0" fill="#f01c1c"/>
<rect x="633.3" y="352.5" width="1.7" height="2.6" fill="#2a82e8"/>
<rect x="634.3" y="352.5" width="1.7" height="3.0" fill="#2a82e8"/>
<rect x="635.3" y="351.5" width="1.7" height="3.7" fill="#e2d488"/>
<rect x="636.3" y="350.9" width="1.7" height="3.0" fill="#e2d488"/>
<rect x="637.3" y="351.1" width="1.7" height="2.4" fill="#e2d488"/>
<rect x="638.3" y="350.8" width="1.7" height="3.1" fill="#f01c1c"/>
<rect x="641.3" y="355.5" width="1.7" height="1.4" fill="#e2d488"/>
<rect x="642.3" y="355.4" width="1.7" height="4.0" fill="#2a82e8"/>
<rect x="643.3" y="358.4" width="1.7" height="7.8" fill="#2a82e8"/>
<rect x="644.3" y="358.7" width="1.7" height="1.0" fill="#e2d488"/>
<rect x="645.3" y="359.1" width="1.7" height="2.0" fill="#f01c1c"/>
<rect x="646.3" y="357.0" width="1.7" height="3.3" fill="#e2d488"/>
<rect x="647.3" y="353.8" width="1.7" height="5.5" fill="#f01c1c"/>
<rect x="649.3" y="349.0" width="1.7" height="4.1" fill="#f01c1c"/>
<rect x="650.3" y="346.9" width="1.7" height="3.8" fill="#2a82e8"/>
<rect x="651.3" y="346.2" width="1.7" height="2.9" fill="#2a82e8"/>
<rect x="653.3" y="346.5" width="1.7" height="8.1" fill="#2a82e8"/>
<rect x="654.3" y="346.9" width="1.7" height="2.3" fill="#e2d488"/>
<rect x="655.3" y="348.1" width="1.7" height="2.0" fill="#e2d488"/>
<rect x="658.3" y="348.7" width="1.7" height="2.0" fill="#e2d488"/>
<rect x="659.3" y="348.7" width="1.7" height="2.7" fill="#f01c1c"/>
<rect x="661.3" y="347.5" width="1.7" height="4.7" fill="#e2d488"/>
<rect x="663.3" y="344.4" width="1.7" height="3.7" fill="#e2d488"/>
<rect x="664.3" y="342.4" width="1.7" height="2.9" fill="#e2d488"/>
<rect x="665.3" y="343.3" width="1.7" height="2.1" fill="#2a82e8"/>
<rect x="666.3" y="342.3" width="1.7" height="6.7" fill="#e2d488"/>
<rect x="667.3" y="340.0" width="1.7" height="4.8" fill="#f01c1c"/>
<rect x="668.3" y="342.0" width="1.7" height="2.8" fill="#e2d488"/>
<rect x="669.3" y="342.1" width="1.7" height="4.0" fill="#2a82e8"/>
<rect x="670.3" y="344.6" width="1.7" height="8.0" fill="#2a82e8"/>
<rect x="671.3" y="344.6" width="1.7" height="4.1" fill="#2a82e8"/>
<rect x="672.3" y="347.8" width="1.7" height="3.7" fill="#2a82e8"/>
<rect x="674.3" y="351.2" width="1.7" height="3.6" fill="#2a82e8"/>
<rect x="675.3" y="352.0" width="1.7" height="2.8" fill="#f01c1c"/>
<rect x="676.3" y="353.0" width="1.7" height="3.8" fill="#2a82e8"/>
<rect x="677.3" y="354.4" width="1.7" height="4.8" fill="#2a82e8"/>
<rect x="678.3" y="357.5" width="1.7" height="3.9" fill="#f01c1c"/>
<rect x="679.3" y="359.4" width="1.7" height="3.3" fill="#e2d488"/>
<rect x="680.3" y="359.4" width="1.7" height="4.2" fill="#e2d488"/>
<rect x="681.3" y="352.9" width="1.7" height="8.0" fill="#f01c1c"/>
<rect x="682.3" y="345.0" width="1.7" height="9.5" fill="#e2d488"/>
<rect x="684.3" y="334.9" width="1.7" height="6.0" fill="#f01c1c"/>
<rect x="686.3" y="327.7" width="1.7" height="5.3" fill="#f01c1c"/>
<rect x="687.3" y="323.9" width="1.7" height="5.5" fill="#e2d488"/>
<rect x="688.3" y="320.7" width="1.7" height="5.2" fill="#f01c1c"/>
<rect x="690.3" y="322.7" width="1.7" height="2.9" fill="#e2d488"/>
<rect x="693.3" y="329.9" width="1.7" height="4.3" fill="#2a82e8"/>
<rect x="694.3" y="331.7" width="1.7" height="3.4" fill="#2a82e8"/>
<rect x="695.3" y="333.4" width="1.7" height="5.5" fill="#e2d488"/>
<rect x="696.3" y="336.9" width="1.7" height="6.0" fill="#2a82e8"/>
<rect x="697.3" y="338.6" width="1.7" height="3.2" fill="#2a82e8"/>
<rect x="698.3" y="335.9" width="1.7" height="4.9" fill="#e2d488"/>
<rect x="699.3" y="336.9" width="1.7" height="1.0" fill="#f01c1c"/>
<rect x="700.3" y="336.5" width="1.7" height="1.3" fill="#f01c1c"/>
<rect x="701.3" y="334.3" width="1.7" height="3.8" fill="#f01c1c"/>
<rect x="702.3" y="331.3" width="1.7" height="4.2" fill="#f01c1c"/>
<rect x="703.3" y="330.5" width="1.7" height="2.6" fill="#f01c1c"/>
<rect x="704.3" y="328.7" width="1.7" height="3.7" fill="#e2d488"/>
<rect x="705.3" y="328.0" width="1.7" height="2.3" fill="#f01c1c"/>
<rect x="706.3" y="325.6" width="1.7" height="4.2" fill="#f01c1c"/>
<rect x="708.3" y="321.6" width="1.7" height="4.5" fill="#f01c1c"/>
<rect x="709.3" y="311.4" width="1.7" height="11.5" fill="#e2d488"/>
<rect x="711.3" y="320.0" width="1.7" height="2.8" fill="#2a82e8"/>
<rect x="712.3" y="320.5" width="1.7" height="8.2" fill="#2a82e8"/>
<rect x="713.3" y="323.4" width="1.7" height="2.6" fill="#2a82e8"/>
<rect x="714.3" y="325.0" width="1.7" height="2.1" fill="#e2d488"/>
<rect x="715.3" y="319.7" width="1.7" height="10.9" fill="#e2d488"/>
<rect x="716.3" y="328.5" width="1.7" height="3.7" fill="#e2d488"/>
<rect x="717.3" y="329.9" width="1.7" height="2.2" fill="#f01c1c"/>
<rect x="718.3" y="328.9" width="1.7" height="3.5" fill="#e2d488"/>
<rect x="719.3" y="326.2" width="1.7" height="3.4" fill="#f01c1c"/>
<rect x="720.3" y="325.2" width="1.7" height="2.0" fill="#e2d488"/>
<rect x="721.3" y="323.0" width="1.7" height="3.4" fill="#f01c1c"/>
<rect x="722.3" y="322.3" width="1.7" height="2.3" fill="#e2d488"/>
<rect x="723.3" y="315.5" width="1.7" height="8.3" fill="#e2d488"/>
<rect x="724.3" y="320.7" width="1.7" height="3.3" fill="#e2d488"/>
<rect x="725.3" y="319.8" width="1.7" height="3.3" fill="#e2d488"/>
<rect x="727.3" y="319.5" width="1.7" height="2.3" fill="#e2d488"/>
<rect x="729.3" y="321.4" width="1.7" height="2.1" fill="#e2d488"/>
<rect x="731.3" y="322.7" width="1.7" height="3.0" fill="#e2d488"/>
<rect x="733.3" y="325.7" width="1.7" height="2.0" fill="#e2d488"/>
<rect x="734.3" y="323.7" width="1.7" height="4.0" fill="#f01c1c"/>
<rect x="736.3" y="322.0" width="1.7" height="2.9" fill="#f01c1c"/>
<rect x="737.3" y="318.8" width="1.7" height="5.7" fill="#e2d488"/>
<rect x="738.3" y="321.3" width="1.7" height="3.1" fill="#e2d488"/>
<rect x="739.3" y="319.4" width="1.7" height="3.7" fill="#f01c1c"/>
<rect x="740.3" y="317.7" width="1.7" height="4.5" fill="#2a82e8"/>
<rect x="741.3" y="316.8" width="1.7" height="3.0" fill="#f01c1c"/>
<rect x="742.3" y="316.7" width="1.7" height="2.0" fill="#e2d488"/>
<rect x="743.3" y="316.9" width="1.7" height="2.6" fill="#f01c1c"/>
<rect x="745.3" y="310.6" width="1.7" height="6.5" fill="#e2d488"/>
<rect x="746.3" y="314.7" width="1.7" height="1.9" fill="#f01c1c"/>
<rect x="749.3" y="310.3" width="1.7" height="4.8" fill="#e2d488"/>
<rect x="750.3" y="310.3" width="1.7" height="2.2" fill="#e2d488"/>
<rect x="751.3" y="307.4" width="1.7" height="6.4" fill="#2a82e8"/>
<rect x="752.3" y="311.5" width="1.7" height="5.3" fill="#f01c1c"/>
<rect x="753.3" y="314.3" width="1.7" height="2.0" fill="#e2d488"/>
<rect x="755.3" y="315.5" width="1.7" height="1.4" fill="#e2d488"/>
<rect x="756.3" y="315.3" width="1.7" height="4.6" fill="#2a82e8"/>
<rect x="757.3" y="317.3" width="1.7" height="2.7" fill="#e2d488"/>
<rect x="758.3" y="316.0" width="1.7" height="4.6" fill="#f01c1c"/>
<rect x="759.3" y="313.6" width="1.7" height="3.4" fill="#f0f0f0"/>
<rect x="761.3" y="308.9" width="1.7" height="3.7" fill="#f01c1c"/>
<rect x="762.3" y="307.0" width="1.7" height="3.1" fill="#e2d488"/>
<rect x="763.3" y="306.2" width="1.7" height="3.0" fill="#2a82e8"/>
<rect x="764.3" y="304.2" width="1.7" height="2.5" fill="#2a82e8"/>
<rect x="767.3" y="300.3" width="1.7" height="6.6" fill="#e2d488"/>
<rect x="768.3" y="299.3" width="1.7" height="2.1" fill="#e2d488"/>
<rect x="769.3" y="298.7" width="1.7" height="2.6" fill="#2a82e8"/>
<rect x="772.3" y="305.5" width="1.7" height="5.1" fill="#2a82e8"/>
<rect x="773.3" y="309.2" width="1.7" height="4.1" fill="#2a82e8"/>
<rect x="777.3" y="310.0" width="1.7" height="3.0" fill="#2a82e8"/>
<rect x="778.3" y="310.2" width="1.7" height="3.4" fill="#f01c1c"/>
<rect x="779.3" y="307.1" width="1.7" height="4.1" fill="#f0f0f0"/>
<rect x="780.3" y="303.3" width="1.7" height="11.3" fill="#f01c1c"/>
<rect x="781.3" y="299.8" width="1.7" height="6.1" fill="#e2d488"/>
<rect x="783.3" y="295.7" width="1.7" height="5.7" fill="#e2d488"/>
<rect x="785.3" y="291.5" width="1.7" height="4.0" fill="#f01c1c"/>
<rect x="786.3" y="289.4" width="1.7" height="3.7" fill="#e2d488"/>
<rect x="787.3" y="288.2" width="1.7" height="2.1" fill="#f01c1c"/>
<rect x="788.3" y="287.6" width="1.7" height="1.5" fill="#f01c1c"/>
<rect x="789.3" y="284.3" width="1.7" height="4.3" fill="#f01c1c"/>
<rect x="791.3" y="279.7" width="1.7" height="2.6" fill="#e2d488"/>
<rect x="792.3" y="277.5" width="1.7" height="4.2" fill="#e2d488"/>
<rect x="793.3" y="276.1" width="1.7" height="3.5" fill="#f01c1c"/>
<rect x="794.3" y="274.3" width="1.7" height="4.6" fill="#f01c1c"/>
<rect x="795.3" y="271.8" width="1.7" height="4.1" fill="#f01c1c"/>
<rect x="796.3" y="268.5" width="1.7" height="5.0" fill="#f01c1c"/>
<rect x="797.3" y="269.5" width="1.7" height="1.1" fill="#f01c1c"/>
<rect x="798.3" y="269.2" width="1.7" height="2.3" fill="#e2d488"/>
<rect x="800.3" y="268.6" width="1.7" height="9.0" fill="#e2d488"/>
<rect x="801.3" y="269.1" width="1.7" height="6.2" fill="#e2d488"/>
<rect x="802.3" y="267.4" width="1.7" height="2.6" fill="#e2d488"/>
<rect x="803.3" y="267.1" width="1.7" height="3.9" fill="#2a82e8"/>
<rect x="804.3" y="269.4" width="1.7" height="2.4" fill="#e2d488"/>
<rect x="805.3" y="270.2" width="1.7" height="2.2" fill="#2a82e8"/>
<rect x="806.3" y="270.7" width="1.7" height="4.6" fill="#2a82e8"/>
<rect x="807.3" y="273.3" width="1.7" height="3.5" fill="#e2d488"/>
<rect x="808.3" y="275.7" width="1.7" height="1.7" fill="#e2d488"/>
<rect x="809.3" y="275.5" width="1.7" height="5.0" fill="#2a82e8"/>
<rect x="810.3" y="278.1" width="1.7" height="3.2" fill="#2a82e8"/>
<rect x="812.3" y="276.6" width="1.7" height="3.4" fill="#2a82e8"/>
<rect x="813.3" y="273.4" width="1.7" height="5.4" fill="#f01c1c"/>
<rect x="814.3" y="270.0" width="1.7" height="4.8" fill="#2a82e8"/>
<rect x="816.3" y="266.9" width="1.7" height="3.6" fill="#f01c1c"/>
<rect x="817.3" y="265.5" width="1.7" height="3.3" fill="#f01c1c"/>
<rect x="819.3" y="262.8" width="1.7" height="2.6" fill="#e2d488"/>
<rect x="820.3" y="263.0" width="1.7" height="2.1" fill="#f01c1c"/>
<rect x="821.3" y="263.6" width="1.7" height="3.3" fill="#f01c1c"/>
<rect x="822.3" y="265.2" width="1.7" height="2.6" fill="#2a82e8"/>
<rect x="823.3" y="266.9" width="1.7" height="1.3" fill="#2a82e8"/>
<rect x="825.3" y="241.9" width="1.7" height="17.6" fill="#e2d488"/>
<rect x="827.3" y="213.1" width="1.7" height="17.3" fill="#f01c1c"/>
<rect x="829.3" y="217.7" width="1.7" height="5.4" fill="#2a82e8"/>
<rect x="830.3" y="217.9" width="1.7" height="9.5" fill="#2a82e8"/>
<rect x="831.3" y="219.7" width="1.7" height="12.2" fill="#e2d488"/>
<rect x="832.3" y="229.2" width="1.7" height="4.1" fill="#2a82e8"/>
<rect x="833.3" y="226.4" width="1.7" height="7.7" fill="#e2d488"/>
<rect x="836.3" y="232.7" width="1.7" height="3.1" fill="#2a82e8"/>
<rect x="838.3" y="233.6" width="1.7" height="4.2" fill="#2a82e8"/>
<rect x="839.3" y="236.2" width="1.7" height="2.5" fill="#e2d488"/>
<rect x="840.3" y="236.3" width="1.7" height="1.9" fill="#e2d488"/>
<rect x="842.3" y="236.4" width="1.7" height="4.6" fill="#2a82e8"/>
<rect x="845.3" y="240.2" width="1.7" height="3.4" fill="#2a82e8"/>
<rect x="847.3" y="240.1" width="1.7" height="1.8" fill="#e2d488"/>
<rect x="848.3" y="241.3" width="1.7" height="2.8" fill="#f01c1c"/>
<rect x="849.3" y="241.9" width="1.7" height="1.4" fill="#f01c1c"/>
<rect x="850.3" y="242.1" width="1.7" height="2.1" fill="#e2d488"/>
<rect x="853.3" y="240.5" width="1.7" height="2.9" fill="#e2d488"/>
<rect x="854.3" y="239.9" width="1.7" height="3.1" fill="#e2d488"/>
<rect x="856.3" y="235.3" width="1.7" height="4.8" fill="#f01c1c"/>
<rect x="857.3" y="233.9" width="1.7" height="3.3" fill="#e2d488"/>
<rect x="859.3" y="231.5" width="1.7" height="4.9" fill="#f01c1c"/>
<rect x="860.3" y="231.1" width="1.7" height="2.2" fill="#f01c1c"/>
<rect x="861.3" y="230.2" width="1.7" height="2.6" fill="#f01c1c"/>
<rect x="862.3" y="229.5" width="1.7" height="2.5" fill="#f01c1c"/>
<rect x="864.3" y="227.4" width="1.7" height="3.8" fill="#e2d488"/>
<rect x="866.3" y="224.8" width="1.7" height="9.2" fill="#e2d488"/>
<rect x="868.3" y="225.1" width="1.7" height="7.0" fill="#f01c1c"/>
<rect x="870.3" y="223.7" width="1.7" height="3.8" fill="#e2d488"/>
<rect x="872.3" y="225.2" width="1.7" height="2.6" fill="#f01c1c"/>
<rect x="874.3" y="226.8" width="1.7" height="1.8" fill="#f01c1c"/>
<rect x="876.3" y="225.2" width="1.7" height="1.0" fill="#f01c1c"/>
<rect x="877.3" y="224.1" width="1.7" height="2.6" fill="#f01c1c"/>
<rect x="878.3" y="224.0" width="1.7" height="4.1" fill="#2a82e8"/>
<rect x="880.3" y="225.5" width="1.7" height="1.6" fill="#e2d488"/>
<rect x="881.3" y="225.6" width="1.7" height="2.4" fill="#2a82e8"/>
<rect x="882.3" y="225.8" width="1.7" height="2.8" fill="#2a82e8"/>
<rect x="883.3" y="226.1" width="1.7" height="1.3" fill="#e2d488"/>
<rect x="884.3" y="224.6" width="1.7" height="3.3" fill="#f01c1c"/>
<rect x="885.3" y="223.1" width="1.7" height="2.5" fill="#e2d488"/>
<rect x="887.3" y="223.9" width="1.7" height="1.9" fill="#2a82e8"/>
<rect x="888.3" y="222.7" width="1.7" height="2.0" fill="#2a82e8"/>
<rect x="889.3" y="222.9" width="1.7" height="1.9" fill="#2a82e8"/>
<rect x="890.3" y="222.8" width="1.7" height="3.1" fill="#f01c1c"/>
<rect x="891.3" y="224.0" width="1.7" height="3.6" fill="#e2d488"/>
<rect x="892.3" y="226.3" width="1.7" height="2.9" fill="#e2d488"/>
<rect x="893.3" y="227.3" width="1.7" height="2.7" fill="#f01c1c"/>
<rect x="895.3" y="227.1" width="1.7" height="2.1" fill="#2a82e8"/>
<rect x="910.2" y="232.5" width="1.7" height="1.7" fill="#2a82e8"/>
<rect x="911.2" y="232.0" width="1.7" height="2.4" fill="#e2d488"/>
<rect x="914.2" y="231.2" width="1.7" height="3.1" fill="#e2d488"/>
<rect x="915.2" y="227.0" width="1.7" height="7.6" fill="#2a82e8"/>
<rect x="917.2" y="232.4" width="1.7" height="2.5" fill="#2a82e8"/>
<rect x="918.2" y="233.4" width="1.7" height="3.2" fill="#e2d488"/>
<rect x="919.2" y="234.7" width="1.7" height="3.6" fill="#2a82e8"/>
<rect x="920.2" y="236.2" width="1.7" height="2.7" fill="#e2d488"/>
<rect x="922.2" y="238.7" width="1.7" height="1.4" fill="#2a82e8"/>
<rect x="923.2" y="237.1" width="1.7" height="3.0" fill="#f01c1c"/>
<rect x="924.2" y="235.6" width="1.7" height="2.5" fill="#2a82e8"/>
<rect x="925.2" y="234.6" width="1.7" height="4.1" fill="#2a82e8"/>
<rect x="927.2" y="237.0" width="1.7" height="3.4" fill="#e2d488"/>
<rect x="928.2" y="236.8" width="1.7" height="3.5" fill="#e2d488"/>
<rect x="930.2" y="237.8" width="1.7" height="3.0" fill="#e2d488"/>
<rect x="931.2" y="238.2" width="1.7" height="3.0" fill="#2a82e8"/>
<rect x="932.2" y="237.7" width="1.7" height="2.2" fill="#e2d488"/>
<rect x="933.2" y="237.7" width="1.7" height="2.4" fill="#e2d488"/>
<rect x="934.2" y="238.4" width="1.7" height="1.8" fill="#e2d488"/>
<rect x="935.2" y="238.8" width="1.7" height="2.4" fill="#2a82e8"/>
<rect x="937.2" y="238.0" width="1.7" height="3.5" fill="#f0f0f0"/>
<rect x="938.2" y="239.5" width="1.7" height="3.7" fill="#e2d488"/>
<rect x="939.2" y="240.8" width="1.7" height="2.8" fill="#e2d488"/>
<rect x="940.2" y="239.6" width="1.7" height="2.7" fill="#f0f0f0"/>
<rect x="941.2" y="239.3" width="1.7" height="1.5" fill="#e2d488"/>
<rect x="942.2" y="239.1" width="1.7" height="3.1" fill="#f0f0f0"/>
<rect x="943.2" y="239.7" width="1.7" height="2.8" fill="#e2d488"/>
<rect x="944.2" y="240.8" width="1.7" height="1.4" fill="#2a82e8"/>
<rect x="945.2" y="240.6" width="1.7" height="2.5" fill="#f01c1c"/>
<rect x="946.2" y="239.7" width="1.7" height="2.1" fill="#e2d488"/>
<rect x="947.2" y="239.3" width="1.7" height="3.2" fill="#e2d488"/>
<rect x="948.2" y="239.1" width="1.7" height="2.3" fill="#2a82e8"/>
<rect x="949.2" y="238.0" width="1.7" height="4.2" fill="#2a82e8"/>
<rect x="950.2" y="239.1" width="1.7" height="2.2" fill="#2a82e8"/>
<rect x="951.2" y="237.8" width="1.7" height="7.7" fill="#e2d488"/>
<rect x="952.2" y="236.1" width="1.7" height="3.5" fill="#2a82e8"/>
<rect x="953.2" y="237.1" width="1.7" height="1.8" fill="#f01c1c"/>
<rect x="954.2" y="238.3" width="1.7" height="1.8" fill="#e2d488"/>
<rect x="955.2" y="238.8" width="1.7" height="1.4" fill="#e2d488"/>
<rect x="956.2" y="239.2" width="1.7" height="1.3" fill="#2a82e8"/>
<rect x="958.2" y="237.9" width="1.7" height="3.4" fill="#e2d488"/>
<rect x="959.2" y="237.2" width="1.7" height="3.5" fill="#2a82e8"/>
<rect x="960.2" y="238.6" width="1.7" height="2.2" fill="#e2d488"/>
<rect x="961.2" y="239.6" width="1.7" height="2.4" fill="#f01c1c"/>
<rect x="962.2" y="238.1" width="1.7" height="3.1" fill="#f01c1c"/>
<rect x="964.2" y="237.6" width="1.7" height="2.0" fill="#2a82e8"/>
<rect x="965.2" y="238.3" width="1.7" height="1.6" fill="#f01c1c"/>
<rect x="966.2" y="237.8" width="1.7" height="2.8" fill="#f01c1c"/>
<rect x="967.2" y="235.7" width="1.7" height="2.6" fill="#e2d488"/></g>
<g clip-path="url(#k3)"><path d="M6.1,469.8 L7.3,471.3 L8.6,466.7 L9.8,468.6 L11.0,465.1 L12.2,461.4 L13.4,457.2 L14.6,456.4 L15.8,458.2 L17.1,461.8 L18.3,464.9 L19.5,466.8 L20.8,465.5 L22.0,467.0 L23.2,468.6 L24.4,471.3 L25.6,470.5 L26.9,470.1 L28.1,471.0 L29.3,468.3 L30.5,470.1 L31.7,467.4 L32.9,466.4 L34.2,459.5 L35.4,457.6 L36.6,462.7 L37.9,463.5 L39.1,467.4 L40.1,467.1 L41.1,464.5 L42.2,465.5 L43.2,465.3 L44.2,464.9 L45.2,466.2 L46.4,465.4 L47.6,461.3 L48.6,463.5 L49.7,460.0 L50.7,462.3 L51.8,459.5 L52.8,460.8 L53.9,458.6 L54.9,460.0 L56.1,463.4 L57.3,462.5 L58.6,464.1 L59.8,464.9 L61.0,467.7 L62.2,467.5 L63.5,468.5 L64.7,469.8 L65.9,469.7 L67.2,467.2 L68.4,466.5 L69.6,464.9 L70.8,465.5 L72.0,466.4 L73.2,469.8 L74.5,475.1 L75.7,483.2 L76.7,484.6 L77.8,481.6 L78.8,477.6 L79.9,477.4 L80.9,478.4 L82.0,477.0 L83.0,475.9 L84.2,481.3 L85.5,483.7 L86.7,484.5 L87.9,484.7 L89.2,490.9 L90.4,494.3 L91.6,494.2 L92.8,493.4 L94.0,492.3 L95.2,487.2 L96.4,485.7 L97.6,485.1 L98.8,484.2 L100.1,483.6 L101.3,480.8 L102.3,481.1 L103.3,480.8 L104.3,477.5 L105.4,479.1 L106.4,477.2 L107.4,475.9 L108.4,478.8 L109.5,476.0 L110.5,478.1 L111.6,479.9 L112.6,479.9 L113.7,480.1 L114.7,479.6 L115.9,478.1 L117.2,478.4 L118.4,479.6 L119.6,480.8 L120.8,479.6 L122.1,474.3 L123.3,474.7 L124.3,476.3 L125.3,474.4 L126.3,475.6 L127.4,476.8 L128.4,479.0 L129.4,479.6 L130.4,481.2 L131.5,483.0 L132.5,479.7 L133.6,479.5 L134.6,484.0 L135.7,483.2 L136.7,483.2 L137.7,485.2 L138.8,484.0 L139.8,480.8 L140.9,481.8 L141.9,480.9 L143.0,481.9 L144.0,482.0 L145.1,481.4 L146.1,484.9 L147.2,485.6 L148.2,482.5 L149.3,487.2 L150.3,487.6 L151.4,485.7 L152.4,485.1 L153.5,487.6 L154.5,488.0 L155.6,486.9 L156.6,485.0 L157.7,486.4 L158.7,485.7 L159.7,486.4 L160.8,483.5 L161.8,483.5 L162.9,480.8 L163.9,480.4 L165.0,483.0 L166.0,480.8 L167.2,482.3 L168.5,485.7 L169.7,484.3 L170.9,480.4 L172.1,479.4 L173.3,475.9 L174.4,475.7 L175.4,475.5 L176.5,479.4 L177.5,478.1 L178.6,478.7 L179.6,480.9 L180.7,482.0 L181.7,481.6 L182.8,483.3 L183.8,482.0 L184.9,480.3 L185.9,480.0 L187.0,480.5 L188.0,479.6 L189.2,480.9 L190.5,485.0 L191.7,489.3 L192.7,490.1 L193.7,492.0 L194.8,490.5 L195.8,488.7 L196.8,492.8 L197.8,490.6 L198.8,491.3 L199.9,487.4 L200.9,487.3 L202.0,484.7 L203.0,487.6 L204.1,483.9 L205.1,484.5 L206.1,487.1 L207.2,487.4 L208.2,488.6 L209.3,488.3 L210.3,487.5 L211.4,487.3 L212.4,490.6 L213.4,492.3 L214.5,490.5 L215.5,494.3 L216.6,496.9 L217.6,494.8 L218.7,497.6 L219.7,499.1 L220.8,499.0 L221.8,496.7 L222.9,496.6 L224.0,498.5 L225.1,495.9 L226.2,495.5 L227.2,495.5 L228.3,496.7 L229.3,500.6 L230.3,502.0 L231.4,499.5 L232.4,503.5 L233.4,504.3 L234.4,506.4 L235.6,507.3 L236.9,511.9 L238.1,517.3 L239.3,519.9 L240.5,515.6 L241.7,518.6 L242.9,513.2 L244.1,512.5 L245.2,511.5 L246.4,514.4 L247.5,509.9 L248.7,509.6 L249.8,511.3 L250.8,509.9 L251.9,507.9 L252.9,506.7 L254.0,506.9 L255.0,507.6 L256.1,503.6 L257.1,502.8 L258.1,501.1 L259.2,503.5 L260.2,506.7 L261.3,505.2 L262.3,504.0 L263.4,505.7 L264.4,507.7 L265.4,505.3 L266.4,504.9 L267.4,503.7 L268.5,504.5 L269.5,503.8 L270.5,501.6 L271.6,498.6 L272.6,498.5 L273.7,501.4 L274.8,501.1 L275.9,500.0 L277.0,496.2 L278.0,498.3 L279.1,496.7 L280.1,494.7 L281.1,498.0 L282.1,495.9 L283.2,499.3 L284.2,499.5 L285.2,497.9 L286.4,495.9 L287.6,495.4 L288.8,494.7 L290.0,490.6 L291.0,492.6 L292.1,491.4 L293.1,491.2 L294.1,489.9 L295.2,491.6 L296.2,490.6 L297.4,489.6 L298.6,492.2 L299.8,491.1 L301.0,494.2 L302.1,491.5 L303.2,494.0 L304.3,492.2 L305.4,490.5 L306.4,493.8 L307.5,489.8 L308.6,490.6 L309.7,489.8 L310.8,489.3 L312.0,490.1 L313.2,494.2 L314.4,500.4 L315.6,502.9 L316.9,507.3 L318.1,508.9 L319.3,509.1 L320.6,513.5 L321.8,514.7 L323.0,513.8 L324.2,516.4 L325.4,512.7 L326.7,512.9 L327.9,515.0 L329.1,514.0 L330.4,515.3 L331.6,518.6 L332.8,518.4 L334.0,513.9 L335.2,515.0 L336.4,510.7 L337.7,506.1 L338.9,502.8 L339.9,503.4 L340.9,499.2 L341.9,502.1 L343.0,502.7 L344.0,498.7 L345.0,499.1 L346.0,497.9 L347.1,499.0 L348.1,496.0 L349.2,498.1 L350.2,498.2 L351.3,493.5 L352.3,494.2 L353.3,492.4 L354.3,489.1 L355.4,489.6 L356.4,487.2 L357.4,488.6 L358.4,484.5 L359.6,484.2 L360.9,484.0 L362.1,481.5 L363.3,478.4 L364.5,481.7 L365.8,481.0 L367.0,483.2 L368.2,490.8 L369.4,496.7 L370.6,493.1 L371.9,492.6 L373.1,491.8 L374.1,492.6 L375.1,491.4 L376.1,485.8 L377.2,486.0 L378.2,484.1 L379.2,483.2 L380.4,486.9 L381.6,489.3 L382.7,489.8 L383.8,488.1 L384.9,491.3 L386.0,489.0 L387.0,490.7 L388.1,490.5 L389.2,491.8 L390.3,489.4 L391.4,489.3 L392.5,489.6 L393.6,490.4 L394.6,487.5 L395.7,486.4 L396.8,490.3 L397.9,489.5 L398.9,489.7 L400.0,489.8 L401.1,488.1 L402.2,485.7 L403.2,488.3 L404.3,486.2 L405.3,486.9 L406.4,484.0 L407.4,484.8 L408.5,482.0 L409.7,481.5 L410.9,483.9 L412.1,487.8 L413.3,489.3 L414.5,487.7 L415.8,483.9 L417.0,479.8 L418.2,479.6 L419.3,481.9 L420.4,478.0 L421.4,482.5 L422.5,479.4 L423.6,482.2 L424.6,481.9 L425.7,480.3 L426.8,482.0 L427.8,479.5 L428.8,477.4 L429.9,477.3 L430.9,474.4 L431.9,474.1 L432.9,472.3 L433.9,471.7 L435.0,471.4 L436.0,474.9 L437.1,473.1 L438.1,477.2 L439.2,474.9 L440.2,475.9 L441.2,475.5 L442.2,478.7 L443.2,480.4 L444.3,478.5 L445.3,481.2 L446.3,480.8 L447.4,475.5 L448.4,474.4 L449.5,467.4 L450.6,467.8 L451.6,467.9 L452.7,469.2 L453.7,473.5 L454.8,474.7 L456.1,480.2 L457.3,484.5 L458.4,483.1 L459.4,483.4 L460.5,483.1 L461.6,482.5 L462.6,481.3 L463.7,482.9 L464.7,483.2 L465.8,482.0 L466.9,479.5 L467.9,484.0 L469.0,480.7 L470.1,481.9 L471.2,480.5 L472.2,482.9 L473.3,481.5 L474.4,482.0 L475.6,483.9 L476.9,484.6 L478.1,486.6 L479.3,488.1 L480.4,485.0 L481.5,488.6 L482.7,484.8 L483.8,483.3 L484.9,483.2 L486.1,486.2 L487.3,484.6 L488.5,486.9 L489.8,485.4 L491.0,480.8 L492.0,481.6 L493.0,481.2 L494.1,484.8 L495.1,484.5 L496.1,485.3 L497.1,488.1 L498.1,490.2 L499.1,489.6 L500.1,486.8 L501.2,488.1 L502.2,487.0 L503.2,485.7 L504.4,485.6 L505.6,485.6 L506.9,488.8 L508.1,489.3 L509.3,483.4 L510.5,480.8 L511.5,481.7 L512.5,480.5 L513.5,478.1 L514.6,480.6 L515.6,481.2 L516.6,478.4 L517.8,473.5 L519.0,474.9 L520.2,479.0 L521.5,477.8 L522.7,479.6 L523.7,476.6 L524.8,478.3 L525.8,477.2 L526.9,479.7 L527.9,477.1 L529.0,478.8 L530.0,475.9 L531.2,472.3 L532.5,471.6 L533.7,467.9 L534.9,468.6 L536.1,466.0 L537.3,469.1 L538.6,465.3 L539.8,467.4 L541.0,464.4 L542.2,464.0 L543.5,465.0 L544.7,461.3 L545.9,463.3 L547.2,465.4 L548.4,472.4 L549.6,474.7 L550.6,475.5 L551.6,472.4 L552.7,476.3 L553.7,475.8 L554.7,476.0 L555.7,473.5 L556.9,474.0 L558.2,471.3 L559.4,470.9 L560.6,468.6 L561.6,467.0 L562.6,470.1 L563.7,469.0 L564.7,469.3 L565.7,469.6 L566.7,471.0 L567.9,464.0 L569.1,462.9 L570.3,456.4 L571.3,457.6 L572.3,453.4 L573.3,455.9 L574.4,453.1 L575.4,455.6 L576.4,455.2 L577.4,453.3 L578.4,457.2 L579.5,453.6 L580.5,454.5 L581.5,452.9 L582.5,453.9 L583.5,453.8 L584.5,446.9 L585.5,446.2 L586.6,443.5 L587.6,444.0 L588.6,440.5 L589.7,442.1 L590.7,446.9 L591.8,446.4 L592.8,447.6 L593.9,451.6 L594.9,452.0 L596.0,456.4 L597.0,453.6 L598.0,454.5 L599.0,453.7 L600.1,450.8 L601.1,449.7 L602.1,450.3 L603.1,449.9 L604.2,449.0 L605.2,448.6 L606.3,449.1 L607.3,445.8 L608.4,444.6 L609.4,446.6 L610.4,444.0 L611.5,447.4 L612.5,446.6 L613.6,443.4 L614.6,444.0 L615.7,443.5 L616.7,444.2 L617.7,445.7 L618.8,442.3 L619.8,443.2 L620.9,439.2 L621.9,438.3 L623.0,438.6 L624.0,439.3 L625.0,440.9 L626.0,440.7 L627.0,443.7 L628.1,444.2 L629.1,444.2 L630.1,444.2 L631.3,447.6 L632.6,448.2 L633.8,446.6 L635.0,443.3 L636.3,433.9 L637.5,430.8 L638.5,429.9 L639.5,428.1 L640.5,430.1 L641.6,429.2 L642.6,426.6 L643.6,428.3 L644.8,423.7 L646.0,423.3 L647.2,421.0 L648.4,424.9 L649.7,427.0 L650.9,430.8 L652.1,427.8 L653.4,425.8 L654.6,422.2 L655.6,425.3 L656.6,427.3 L657.7,427.9 L658.7,428.6 L659.7,434.3 L660.7,434.4 L661.9,432.6 L663.1,434.1 L664.3,434.7 L665.5,436.9 L666.6,438.3 L667.6,439.3 L668.7,437.4 L669.7,440.5 L670.8,441.6 L671.8,443.1 L672.9,443.0 L674.1,436.3 L675.3,435.2 L676.5,429.5 L677.7,431.6 L679.0,435.4 L680.2,439.3 L681.4,444.7 L682.7,455.7 L683.9,461.9 L685.1,468.6 L686.1,471.6 L687.1,471.5 L688.2,470.8 L689.2,473.8 L690.2,473.5 L691.2,477.1 L692.2,474.0 L693.2,476.7 L694.2,471.5 L695.3,472.5 L696.3,469.6 L697.3,471.0 L698.5,470.2 L699.8,469.3 L701.0,462.2 L702.2,462.5 L703.4,465.4 L704.7,472.3 L705.9,472.2 L707.1,477.1 L708.3,472.5 L709.5,472.3 L710.7,468.3 L711.9,462.5 L713.1,457.6 L714.3,454.8 L715.6,451.2 L716.8,445.4 L718.0,444.9 L719.2,443.4 L720.5,445.6 L721.7,446.6 L722.9,444.4 L724.2,442.5 L725.4,436.9 L726.5,436.3 L727.6,435.9 L728.7,436.1 L730.0,440.5 L731.2,446.1 L732.2,448.9 L733.3,448.2 L734.3,455.1 L735.3,457.6 L736.4,455.1 L737.4,459.8 L738.4,457.0 L739.4,458.4 L740.4,457.2 L741.4,460.2 L742.4,458.6 L743.6,465.1 L744.9,468.0 L746.1,472.3 L747.4,480.4 L748.6,482.5 L749.9,489.7 L750.9,485.6 L751.9,484.1 L752.9,481.9 L753.9,478.1 L754.9,477.2 L756.1,478.8 L757.3,477.3 L758.6,474.2 L759.8,474.7 L760.8,475.3 L761.8,477.6 L762.8,480.2 L763.8,483.5 L764.8,484.7 L765.8,484.9 L766.8,484.6 L767.8,478.8 L768.8,478.2 L769.8,478.5 L770.9,476.8 L772.0,478.7 L773.1,475.0 L774.1,475.3 L775.2,474.8 L776.3,471.8 L777.4,470.2 L778.5,469.8 L779.5,471.9 L780.6,471.8 L781.6,474.2 L782.6,471.1 L783.7,475.2 L784.7,473.5 L785.7,473.9 L786.7,476.4 L787.7,475.7 L788.7,475.8 L789.7,476.0 L790.7,480.6 L791.7,479.3 L792.7,483.1 L793.7,486.9 L794.7,489.7 L795.7,492.6 L796.7,490.5 L797.7,494.9 L798.7,492.5 L799.7,495.9 L800.8,493.0 L801.8,491.5 L802.9,490.6 L804.0,487.5 L805.1,487.1 L806.1,484.1 L807.2,481.0 L808.3,479.7 L809.4,479.7 L810.5,478.3 L811.6,480.1 L812.7,476.5 L813.8,475.1 L814.9,474.8 L816.0,474.1 L817.1,474.7 L818.2,477.2 L819.2,477.5 L820.3,476.1 L821.4,477.9 L822.5,481.3 L823.5,482.5 L824.6,481.0 L825.9,491.4 L827.1,504.6 L828.2,505.9 L829.2,500.2 L830.3,504.0 L831.3,499.4 L832.4,501.7 L833.4,495.8 L834.5,497.2 L835.6,498.5 L836.6,500.1 L837.7,499.9 L838.8,498.9 L839.9,497.1 L840.9,497.9 L842.0,499.6 L843.0,499.4 L844.0,496.5 L845.0,490.7 L846.0,488.9 L847.0,487.2 L848.0,490.3 L849.0,491.1 L850.0,493.1 L851.0,499.0 L852.0,499.6 L853.1,497.2 L854.1,499.6 L855.2,498.1 L856.2,498.1 L857.3,499.8 L858.3,498.8 L859.4,497.2 L860.7,500.7 L861.9,498.8 L863.2,503.4 L864.2,504.2 L865.3,503.3 L866.3,498.3 L867.3,498.6 L868.4,500.4 L869.4,498.4 L870.5,499.2 L871.5,496.5 L872.6,497.2 L873.7,492.0 L874.8,491.8 L875.8,493.6 L876.9,490.9 L878.0,492.4 L879.0,489.5 L880.1,491.3 L881.1,490.6 L882.2,492.1 L883.2,490.4 L884.3,490.9 L885.3,491.0 L886.3,494.3 L887.3,494.9 L888.3,494.2 L889.3,495.9 L890.4,496.5 L891.4,493.6 L892.5,494.3 L893.6,492.2 L894.7,492.4 L895.7,492.3 L896.8,492.2 L897.8,491.5 L898.8,494.2 L899.8,495.9 L900.8,497.2 L901.8,499.6 L902.9,500.3 L904.0,502.9 L905.1,503.3 L906.1,501.0 L907.2,500.8 L908.3,501.2 L909.4,506.0 L910.5,504.6 L911.6,504.7 L912.7,503.4 L913.8,503.0 L914.9,499.1 L915.9,496.7 L917.0,495.0 L918.1,495.4 L919.2,494.7 L920.2,495.7 L921.3,491.7 L922.3,493.1 L923.4,490.9 L924.4,491.1 L925.5,492.5 L926.5,492.6 L927.5,493.7 L928.6,490.0 L929.6,489.1 L930.7,487.8 L931.7,489.7 L932.8,488.8 L933.8,488.7 L934.9,489.2 L935.9,490.6 L937.0,493.5 L938.0,493.8 L939.1,494.7 L940.2,496.3 L941.2,493.5 L942.3,490.9 L943.4,490.7 L944.5,493.0 L945.5,493.9 L946.6,490.9 L947.7,492.0 L948.7,489.2 L949.8,489.6 L950.9,489.9 L952.0,489.7 L953.0,488.7 L954.1,489.7 L955.2,488.4 L956.2,488.3 L957.3,493.3 L958.3,494.3 L959.4,494.8 L960.4,492.2 L961.5,493.4 L962.8,496.9 L964.0,498.4 L965.3,496.0 L966.5,494.7 L967.8,495.9" fill="none" stroke="#ff1414" stroke-width="2.2" stroke-linejoin="round"/></g>
</svg>
<span class="cj" style="left:5.90px;top:38.80px;color:#c8c8c8">時</span>
<span class="cj" style="left:15.62px;top:38.80px;color:#c8c8c8">刻</span>
<span class="mo" style="left:25.34px;top:38.99px;color:#c8c8c8;">:05:53&#160;</span>
<span class="cj" style="left:59.36px;top:38.80px;color:#c8c8c8">始</span>
<span class="cj" style="left:69.08px;top:38.80px;color:#c8c8c8">値</span>
<span class="mo" style="left:78.80px;top:38.99px;color:#c8c8c8;">:---&#160;</span>
<span class="cj" style="left:103.10px;top:38.80px;color:#c8c8c8">高</span>
<span class="cj" style="left:112.82px;top:38.80px;color:#c8c8c8">値</span>
<span class="mo" style="left:122.54px;top:38.99px;color:#c8c8c8;">:---&#160;</span>
<span class="cj" style="left:146.84px;top:38.80px;color:#c8c8c8">安</span>
<span class="cj" style="left:156.56px;top:38.80px;color:#c8c8c8">値</span>
<span class="mo" style="left:166.28px;top:38.99px;color:#c8c8c8;">:---&#160;</span>
<span class="cj" style="left:190.58px;top:38.80px;color:#c8c8c8">終</span>
<span class="cj" style="left:200.30px;top:38.80px;color:#c8c8c8">値</span>
<span class="mo" style="left:210.02px;top:38.99px;color:#c8c8c8;">:---</span>
<span class="cj" style="left:5.90px;top:203.50px;color:#c8c8c8">時</span>
<span class="cj" style="left:15.62px;top:203.50px;color:#c8c8c8">刻</span>
<span class="mo" style="left:25.34px;top:203.69px;color:#c8c8c8;">:05:53&#160;</span>
<span class="cj" style="left:59.36px;top:203.50px;color:#c8c8c8">始</span>
<span class="cj" style="left:69.08px;top:203.50px;color:#c8c8c8">値</span>
<span class="mo" style="left:78.80px;top:203.69px;color:#c8c8c8;">:3,957&#160;</span>
<span class="cj" style="left:112.82px;top:203.50px;color:#c8c8c8">高</span>
<span class="cj" style="left:122.54px;top:203.50px;color:#c8c8c8">値</span>
<span class="mo" style="left:132.26px;top:203.69px;color:#c8c8c8;">:3,957&#160;</span>
<span class="cj" style="left:166.28px;top:203.50px;color:#c8c8c8">安</span>
<span class="cj" style="left:176.00px;top:203.50px;color:#c8c8c8">値</span>
<span class="mo" style="left:185.72px;top:203.69px;color:#c8c8c8;">:3,957&#160;</span>
<span class="cj" style="left:219.74px;top:203.50px;color:#c8c8c8">終</span>
<span class="cj" style="left:229.46px;top:203.50px;color:#c8c8c8">値</span>
<span class="mo" style="left:239.18px;top:203.69px;color:#c8c8c8;">:3,957</span>
<span class="mo" style="left:5.90px;top:417.99px;color:#c8c8c8;">[</span>
<span class="cj" style="left:10.76px;top:417.80px;color:#c8c8c8">金</span>
<span class="mo" style="left:20.48px;top:417.99px;color:#c8c8c8;">&#160;23/02&#160;7,967</span>
<svg style="left:80.30px;top:419.00px" width="7" height="7" viewBox="0 0 7 7"><path d="M0.5 0.5L6.5 6.5M6.5 0.5L0.5 6.5" stroke="#c8c8c8" stroke-width="1"/></svg>
<span class="mo" style="left:88.52px;top:417.99px;color:#c8c8c8;">1.00]</span>
<div style="left:113.32px;top:422.00px;width:8px;height:1px;background:#c8c8c8"></div>
<span class="mo" style="left:122.54px;top:417.99px;color:#c8c8c8;">[</span>
<span class="cj" style="left:127.40px;top:417.80px;color:#c8c8c8">白</span>
<span class="cj" style="left:137.12px;top:417.80px;color:#c8c8c8">金</span>
<span class="mo" style="left:146.84px;top:417.99px;color:#c8c8c8;">&#160;23/02&#160;3,957</span>
<svg style="left:206.66px;top:419.00px" width="7" height="7" viewBox="0 0 7 7"><path d="M0.5 0.5L6.5 6.5M6.5 0.5L0.5 6.5" stroke="#c8c8c8" stroke-width="1"/></svg>
<span class="mo" style="left:214.88px;top:417.99px;color:#c8c8c8;">1.00]&#160;</span>
<span class="cj" style="left:244.04px;top:417.80px;color:#c8c8c8">終</span>
<span class="cj" style="left:253.76px;top:417.80px;color:#c8c8c8">値</span>
<span class="mo" style="left:263.48px;top:417.99px;color:#c8c8c8;">&#160;</span>
<span class="cj" style="left:268.34px;top:417.80px;color:#c8c8c8">時</span>
<span class="cj" style="left:278.06px;top:417.80px;color:#c8c8c8">刻</span>
<span class="mo" style="left:287.78px;top:417.99px;color:#c8c8c8;">:05:53&#160;4,010</span>
<span class="mo" style="left:35.80px;top:185.29px;color:#c4c4c4;">05</span>
<span class="mo" style="left:47.50px;top:185.29px;color:#e4e4e4;font-weight:bold;">06</span>
<span class="mo" style="left:72.80px;top:185.29px;color:#c4c4c4;">09</span>
<span class="mo" style="left:120.80px;top:185.29px;color:#c4c4c4;">10</span>
<span class="mo" style="left:169.80px;top:185.29px;color:#c4c4c4;">11</span>
<span class="mo" style="left:217.80px;top:185.29px;color:#c4c4c4;">12</span>
<span class="mo" style="left:264.80px;top:185.29px;color:#c4c4c4;">13</span>
<span class="mo" style="left:312.80px;top:185.29px;color:#c4c4c4;">14</span>
<span class="mo" style="left:348.30px;top:185.29px;color:#c4c4c4;">15</span>
<span class="mo" style="left:370.80px;top:185.29px;color:#c4c4c4;">16</span>
<span class="mo" style="left:393.80px;top:185.29px;color:#c4c4c4;">17</span>
<span class="mo" style="left:441.80px;top:185.29px;color:#c4c4c4;">18</span>
<span class="mo" style="left:489.80px;top:185.29px;color:#c4c4c4;">19</span>
<span class="mo" style="left:537.80px;top:185.29px;color:#c4c4c4;">20</span>
<span class="mo" style="left:586.80px;top:185.29px;color:#c4c4c4;">21</span>
<span class="mo" style="left:633.80px;top:185.29px;color:#c4c4c4;">22</span>
<span class="mo" style="left:682.80px;top:185.29px;color:#c4c4c4;">23</span>
<span class="mo" style="left:730.80px;top:185.29px;color:#c4c4c4;">00</span>
<span class="mo" style="left:778.80px;top:185.29px;color:#c4c4c4;">01</span>
<span class="mo" style="left:825.80px;top:185.29px;color:#c4c4c4;">02</span>
<span class="mo" style="left:871.80px;top:185.29px;color:#c4c4c4;">03</span>
<span class="mo" style="left:910.80px;top:185.29px;color:#c4c4c4;">04</span>
<span class="mo" style="left:940.80px;top:185.29px;color:#c4c4c4;">05</span>
<span class="mo" style="left:35.80px;top:399.79px;color:#c4c4c4;">05</span>
<span class="mo" style="left:47.50px;top:399.79px;color:#e4e4e4;font-weight:bold;">06</span>
<span class="mo" style="left:72.80px;top:399.79px;color:#c4c4c4;">09</span>
<span class="mo" style="left:120.80px;top:399.79px;color:#c4c4c4;">10</span>
<span class="mo" style="left:169.80px;top:399.79px;color:#c4c4c4;">11</span>
<span class="mo" style="left:217.80px;top:399.79px;color:#c4c4c4;">12</span>
<span class="mo" style="left:264.80px;top:399.79px;color:#c4c4c4;">13</span>
<span class="mo" style="left:312.80px;top:399.79px;color:#c4c4c4;">14</span>
<span class="mo" style="left:348.30px;top:399.79px;color:#c4c4c4;">15</span>
<span class="mo" style="left:370.80px;top:399.79px;color:#c4c4c4;">16</span>
<span class="mo" style="left:393.80px;top:399.79px;color:#c4c4c4;">17</span>
<span class="mo" style="left:441.80px;top:399.79px;color:#c4c4c4;">18</span>
<span class="mo" style="left:489.80px;top:399.79px;color:#c4c4c4;">19</span>
<span class="mo" style="left:537.80px;top:399.79px;color:#c4c4c4;">20</span>
<span class="mo" style="left:586.80px;top:399.79px;color:#c4c4c4;">21</span>
<span class="mo" style="left:633.80px;top:399.79px;color:#c4c4c4;">22</span>
<span class="mo" style="left:682.80px;top:399.79px;color:#c4c4c4;">23</span>
<span class="mo" style="left:730.80px;top:399.79px;color:#c4c4c4;">00</span>
<span class="mo" style="left:778.80px;top:399.79px;color:#c4c4c4;">01</span>
<span class="mo" style="left:825.80px;top:399.79px;color:#c4c4c4;">02</span>
<span class="mo" style="left:871.80px;top:399.79px;color:#c4c4c4;">03</span>
<span class="mo" style="left:910.80px;top:399.79px;color:#c4c4c4;">04</span>
<span class="mo" style="left:940.80px;top:399.79px;color:#c4c4c4;">05</span>
<span class="mo" style="left:35.80px;top:525.99px;color:#c4c4c4;">05</span>
<span class="mo" style="left:47.50px;top:525.99px;color:#e4e4e4;font-weight:bold;">06</span>
<span class="mo" style="left:72.80px;top:525.99px;color:#c4c4c4;">09</span>
<span class="mo" style="left:120.80px;top:525.99px;color:#c4c4c4;">10</span>
<span class="mo" style="left:169.80px;top:525.99px;color:#c4c4c4;">11</span>
<span class="mo" style="left:217.80px;top:525.99px;color:#c4c4c4;">12</span>
<span class="mo" style="left:264.80px;top:525.99px;color:#c4c4c4;">13</span>
<span class="mo" style="left:312.80px;top:525.99px;color:#c4c4c4;">14</span>
<span class="mo" style="left:348.30px;top:525.99px;color:#c4c4c4;">15</span>
<span class="mo" style="left:370.80px;top:525.99px;color:#c4c4c4;">16</span>
<span class="mo" style="left:393.80px;top:525.99px;color:#c4c4c4;">17</span>
<span class="mo" style="left:441.80px;top:525.99px;color:#c4c4c4;">18</span>
<span class="mo" style="left:489.80px;top:525.99px;color:#c4c4c4;">19</span>
<span class="mo" style="left:537.80px;top:525.99px;color:#c4c4c4;">20</span>
<span class="mo" style="left:586.80px;top:525.99px;color:#c4c4c4;">21</span>
<span class="mo" style="left:633.80px;top:525.99px;color:#c4c4c4;">22</span>
<span class="mo" style="left:682.80px;top:525.99px;color:#c4c4c4;">23</span>
<span class="mo" style="left:730.80px;top:525.99px;color:#c4c4c4;">00</span>
<span class="mo" style="left:778.80px;top:525.99px;color:#c4c4c4;">01</span>
<span class="mo" style="left:825.80px;top:525.99px;color:#c4c4c4;">02</span>
<span class="mo" style="left:871.80px;top:525.99px;color:#c4c4c4;">03</span>
<span class="mo" style="left:910.80px;top:525.99px;color:#c4c4c4;">04</span>
<span class="mo" style="left:940.80px;top:525.99px;color:#c4c4c4;">05</span>
<span class="mo" style="left:732.50px;top:172.49px;color:#c8c8c8;">15</span>
<span class="mo" style="left:732.50px;top:386.49px;color:#c8c8c8;">15</span>
<span class="mo" style="left:732.50px;top:513.49px;color:#c8c8c8;">15</span>
<span class="mo" style="left:971.20px;top:51.29px;color:#b4b4b4;">7,975</span>
<span class="mo" style="left:971.20px;top:97.99px;color:#b4b4b4;">7,950</span>
<span class="mo" style="left:971.20px;top:144.99px;color:#b4b4b4;">7,925</span>
<span class="mo" style="left:971.20px;top:191.99px;color:#b4b4b4;">7,900</span>
<span class="mo" style="left:971.20px;top:240.49px;color:#b4b4b4;">3,950</span>
<span class="mo" style="left:971.20px;top:290.99px;color:#b4b4b4;">3,925</span>
<span class="mo" style="left:971.20px;top:342.49px;color:#b4b4b4;">3,900</span>
<span class="mo" style="left:971.20px;top:393.49px;color:#b4b4b4;">3,875</span>
<span class="mo" style="left:971.20px;top:428.99px;color:#b4b4b4;">4,050</span>
<span class="mo" style="left:971.20px;top:465.99px;color:#b4b4b4;">4,025</span>
<span class="mo" style="left:971.20px;top:502.49px;color:#b4b4b4;">4,000</span>
<div class="cur" style="top:68.6px"></div>
<span class="mo" style="left:981.20px;top:71.00px;color:#080808;font-weight:bold;font-size:12.2px;line-height:12.2px;transform:scaleX(0.6639);">7,967</span>
<div class="cur" style="top:228.6px"></div>
<span class="mo" style="left:981.20px;top:230.80px;color:#080808;font-weight:bold;font-size:12.2px;line-height:12.2px;transform:scaleX(0.6639);">3,957</span>
<div class="cur" style="top:490px"></div>
<span class="mo" style="left:981.20px;top:492.30px;color:#080808;font-weight:bold;font-size:12.2px;line-height:12.2px;transform:scaleX(0.6639);">4,010</span>
<div class="sepbar" style="top:198px;height:5px"></div>
<div class="sepbar" style="top:412px;height:5px"></div>
<span class="cs" style="left:23.20px;top:5.60px;font-size:10.0px;color:#2c2c34;">金</span><span class="ss" style="left:33.80px;top:6.34px;font-size:10.6px;color:#2c2c34;transform:scaleX(0.8466);">1</span><span class="cs" style="left:37.20px;top:5.60px;font-size:10.0px;color:#2c2c34;letter-spacing:-0.6px">分足</span><span class="ss" style="left:57.10px;top:6.34px;font-size:10.6px;color:#2c2c34;transform:scaleX(0.8409);">[2023/02]1.00</span><span class="ss" style="left:113.20px;top:6.34px;font-size:10.6px;color:#2c2c34;transform:scaleX(0.8889);">−</span><span class="cs" style="left:122.60px;top:5.60px;font-size:10.0px;color:#2c2c34;letter-spacing:-0.6px">白金</span><span class="ss" style="left:141.60px;top:6.34px;font-size:10.6px;color:#2c2c34;transform:scaleX(0.8466);">1</span><span class="cs" style="left:145.70px;top:5.60px;font-size:10.0px;color:#2c2c34;letter-spacing:-0.6px">分足</span><span class="ss" style="left:165.50px;top:6.34px;font-size:10.6px;color:#2c2c34;transform:scaleX(0.8486);">[2023/02]1.00</span><span class="cs" style="left:8.60px;top:23.40px;font-size:10.0px;color:#2c2c34;">金</span><span class="ss" style="left:27.00px;top:25.24px;font-size:10.4px;color:#2c2c34;transform:scaleX(0.8439);">2023/02</span><span class="cs" style="left:112.30px;top:23.40px;font-size:10.0px;color:#2c2c34;letter-spacing:-0.6px">白金</span><span class="ss" style="left:138.80px;top:25.24px;font-size:10.4px;color:#2c2c34;transform:scaleX(0.8679);">2023/02</span><span class="cs" style="left:223.40px;top:23.40px;font-size:10.0px;color:#2c2c34;letter-spacing:-0.6px">分足</span><span class="cs" style="left:299.20px;top:23.40px;font-size:10.0px;color:#2c2c34;letter-spacing:-0.6px">分足</span><span class="ss" style="left:295.00px;top:25.24px;font-size:10.4px;color:#2c2c34;transform:scaleX(0.8649);">1</span><span class="ss" style="left:66.20px;top:22.04px;font-size:10.4px;color:#202020;transform:scaleX(0.7660);">1.00</span><span class="ss" style="left:177.70px;top:22.04px;font-size:10.4px;color:#202020;transform:scaleX(0.7907);">1.00</span><span class="ss" style="left:255.80px;top:22.04px;font-size:10.4px;color:#202020;transform:scaleX(0.8649);">1200</span>
</div></body></html>
